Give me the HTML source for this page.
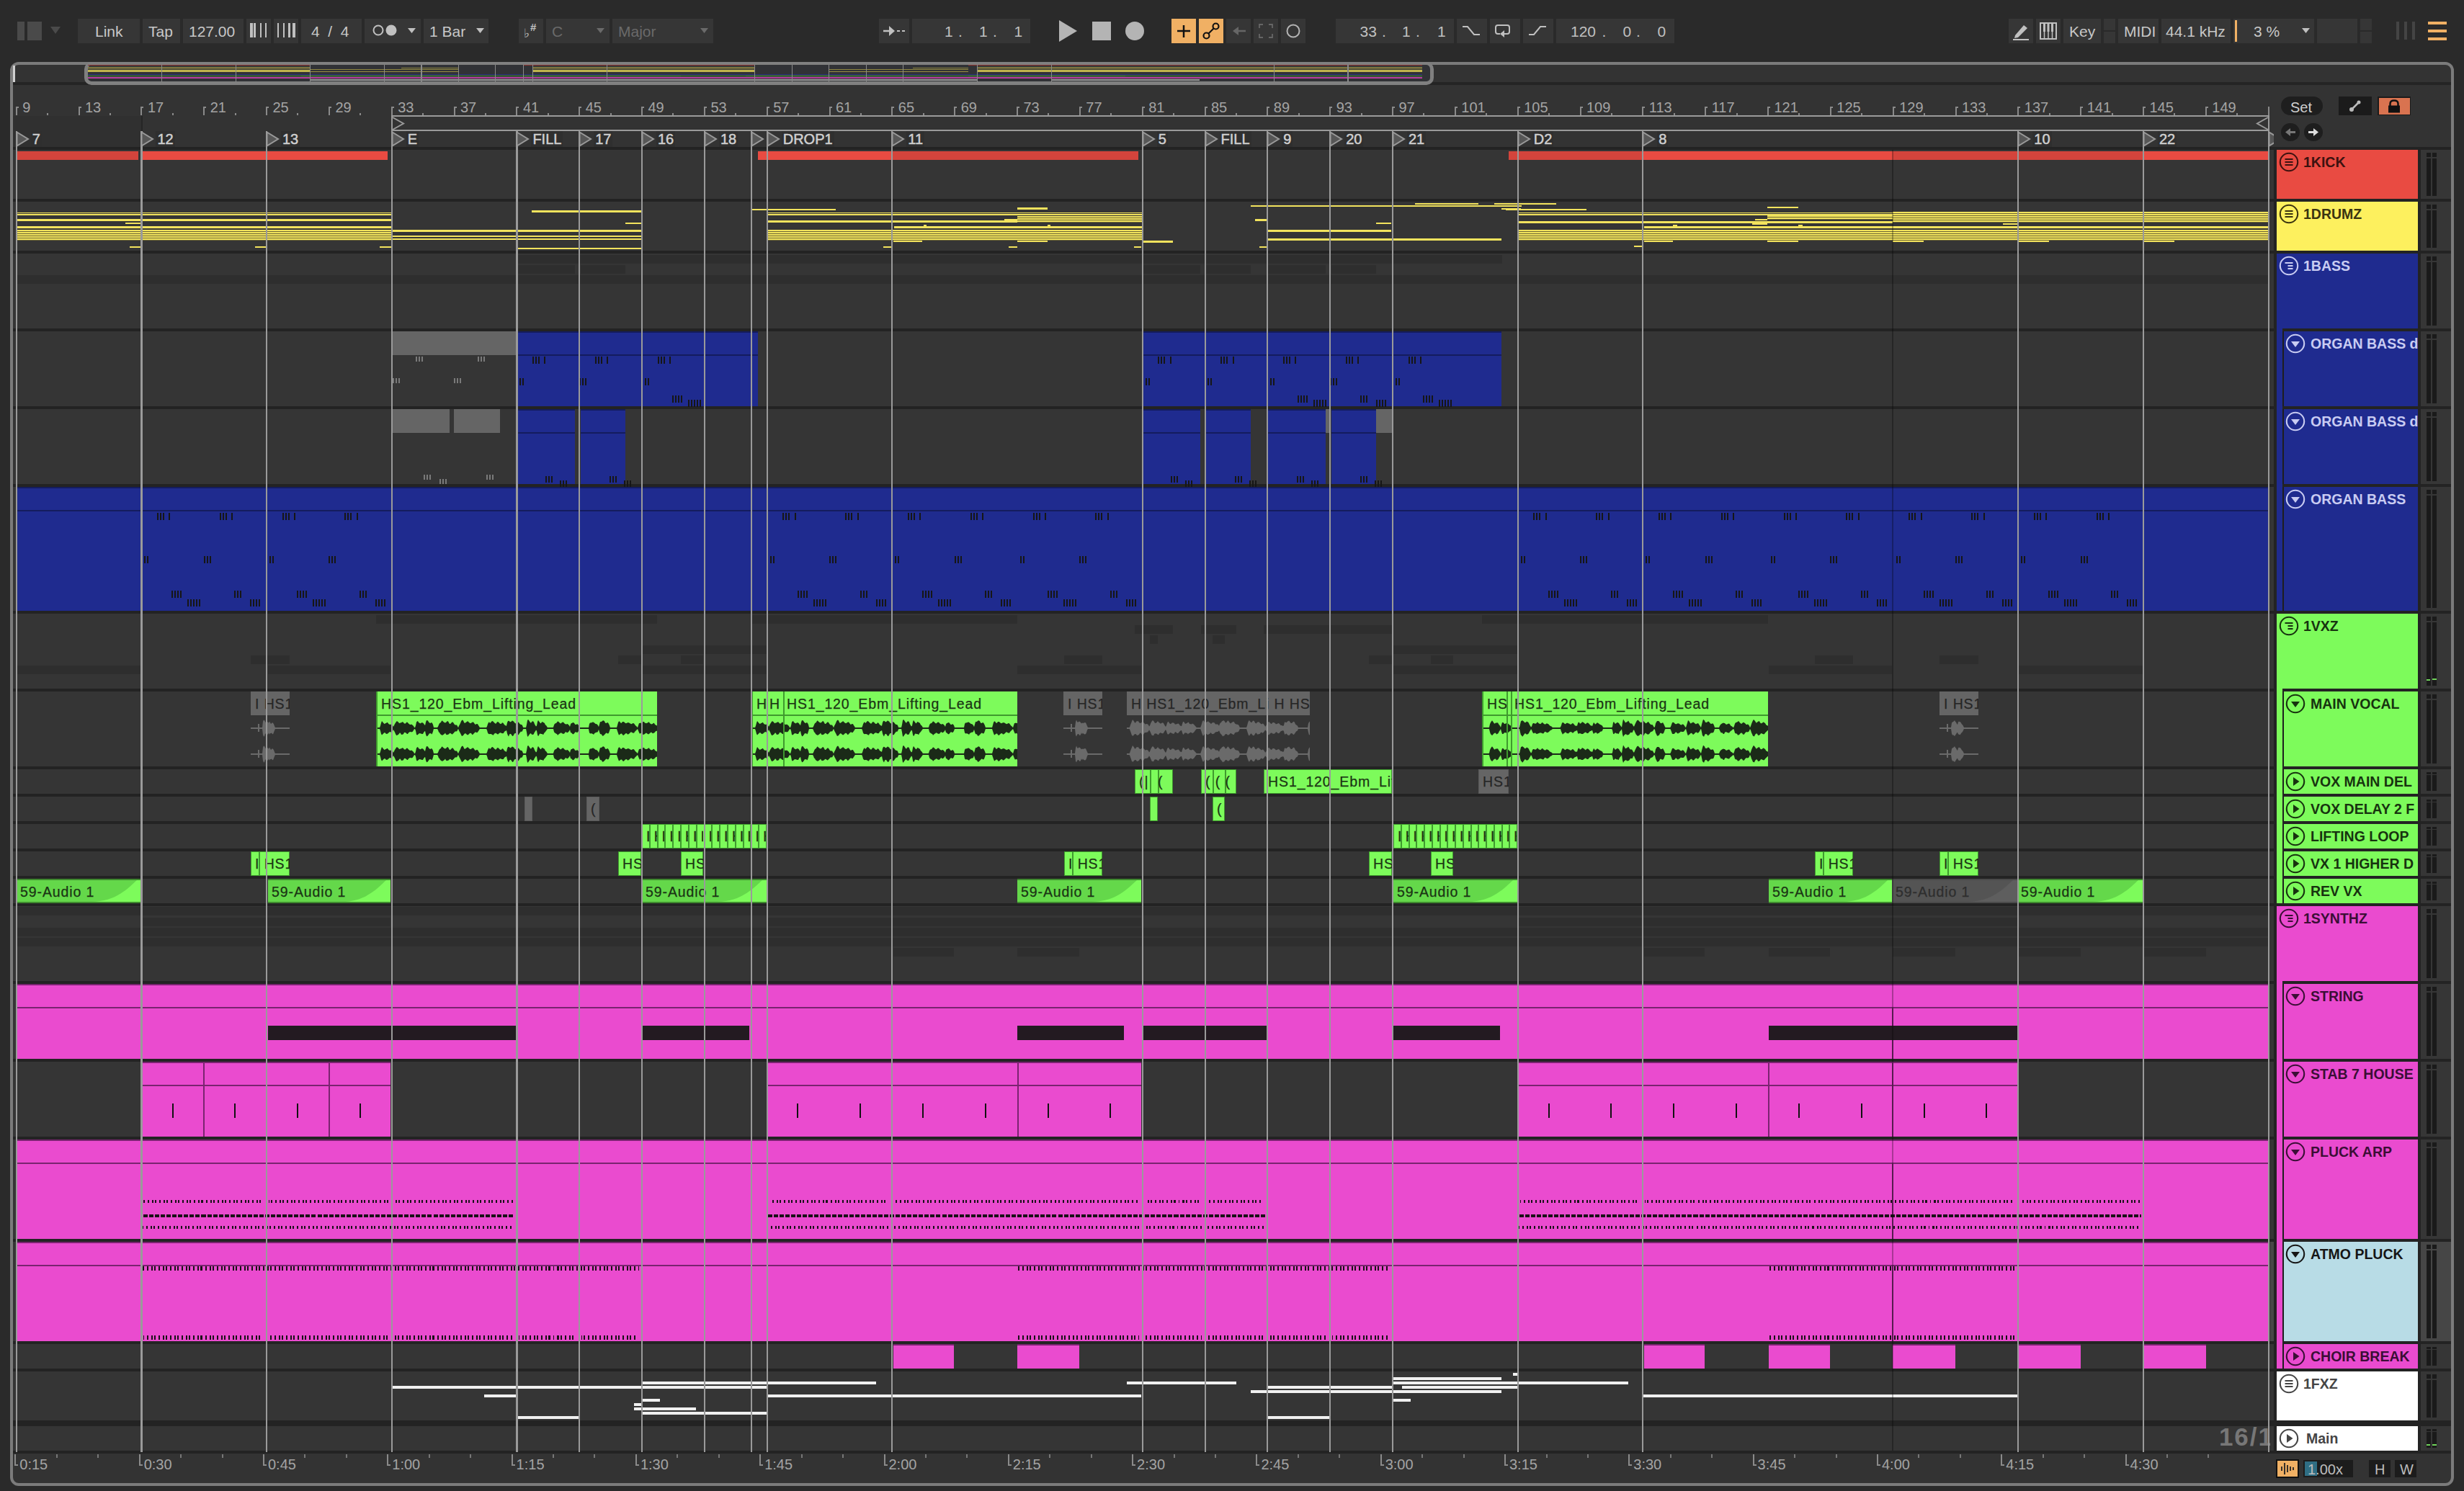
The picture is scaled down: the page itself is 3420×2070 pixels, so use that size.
<!DOCTYPE html><html><head><meta charset="utf-8"><style>
html,body{margin:0;padding:0;}
body{width:3420px;height:2070px;overflow:hidden;position:relative;background:#2a2a2a;font-family:"Liberation Sans", sans-serif;}
div{position:absolute;box-sizing:border-box;}
.t{white-space:nowrap;line-height:1;}
</style></head><body>
<div style="left:24px;top:30px;width:10px;height:26px;background:#4a4a4a;"></div>
<div style="left:38px;top:30px;width:20px;height:26px;background:#4a4a4a;"></div>
<svg style="position:absolute;left:70px;top:37px" width="14" height="11"><polygon points="0,0 14,0 7,10" fill="#4a4a4a"/></svg>
<div style="left:108px;top:26px;width:86px;height:34px;background:#363636;"></div>
<div class="t" style="left:132px;top:33px;font-size:21px;color:#c8c8c8;font-weight:normal;font-family:"Liberation Sans", sans-serif;">Link</div>
<div style="left:198px;top:26px;width:52px;height:34px;background:#363636;"></div>
<div class="t" style="left:206px;top:33px;font-size:21px;color:#c8c8c8;font-weight:normal;font-family:"Liberation Sans", sans-serif;">Tap</div>
<div style="left:254px;top:26px;width:84px;height:34px;background:#363636;"></div>
<div class="t" style="left:262px;top:33px;font-size:21px;color:#c8c8c8;font-weight:normal;font-family:"Liberation Sans", sans-serif;">127.00</div>
<div style="left:342px;top:26px;width:34px;height:34px;background:#363636;"></div>
<div style="left:380px;top:26px;width:34px;height:34px;background:#363636;"></div>
<div style="left:347px;top:32px;width:4px;height:20px;background:#c0c0c0;"></div>
<div style="left:352px;top:32px;width:3px;height:20px;background:#c0c0c0;"></div>
<div style="left:361px;top:32px;width:2px;height:20px;background:#c0c0c0;"></div>
<div style="left:368px;top:32px;width:2px;height:20px;background:#c0c0c0;"></div>
<div style="left:385px;top:32px;width:2px;height:20px;background:#c0c0c0;"></div>
<div style="left:393px;top:32px;width:2px;height:20px;background:#c0c0c0;"></div>
<div style="left:400px;top:32px;width:3px;height:20px;background:#c0c0c0;"></div>
<div style="left:406px;top:32px;width:4px;height:20px;background:#c0c0c0;"></div>
<div style="left:418px;top:26px;width:84px;height:34px;background:#363636;"></div>
<div class="t" style="left:432px;top:33px;font-size:21px;color:#c8c8c8;font-weight:normal;font-family:"Liberation Sans", sans-serif;">4&nbsp;&nbsp;/&nbsp;&nbsp;4</div>
<div style="left:506px;top:26px;width:78px;height:34px;background:#363636;"></div>
<svg style="position:absolute;left:516px;top:33px" width="40" height="18"><circle cx="9" cy="9" r="6.5" fill="none" stroke="#c0c0c0" stroke-width="2"/><circle cx="27" cy="9" r="7.5" fill="#c0c0c0"/></svg>
<svg style="position:absolute;left:566px;top:39px" width="12" height="8"><polygon points="0,0 11,0 5.5,7" fill="#c0c0c0"/></svg>
<div style="left:588px;top:26px;width:90px;height:34px;background:#363636;"></div>
<div class="t" style="left:596px;top:33px;font-size:21px;color:#c8c8c8;font-weight:normal;font-family:"Liberation Sans", sans-serif;">1 Bar</div>
<svg style="position:absolute;left:661px;top:39px" width="12" height="8"><polygon points="0,0 11,0 5.5,7" fill="#c0c0c0"/></svg>
<div style="left:720px;top:26px;width:34px;height:34px;background:#363636;"></div>
<div class="t" style="left:727px;top:38px;font-size:17px;color:#c0c0c0;font-weight:normal;font-family:"Liberation Sans", sans-serif;">♭</div>
<div class="t" style="left:736px;top:30px;font-size:15px;color:#c0c0c0;font-weight:bold;font-family:"Liberation Sans", sans-serif;">#</div>
<div style="left:758px;top:26px;width:88px;height:34px;background:#363636;"></div>
<div class="t" style="left:766px;top:33px;font-size:21px;color:#6a6a6a;font-weight:normal;font-family:"Liberation Sans", sans-serif;">C</div>
<svg style="position:absolute;left:828px;top:39px" width="12" height="8"><polygon points="0,0 11,0 5.5,7" fill="#6a6a6a"/></svg>
<div style="left:850px;top:26px;width:140px;height:34px;background:#363636;"></div>
<div class="t" style="left:858px;top:33px;font-size:21px;color:#6a6a6a;font-weight:normal;font-family:"Liberation Sans", sans-serif;">Major</div>
<svg style="position:absolute;left:972px;top:39px" width="12" height="8"><polygon points="0,0 11,0 5.5,7" fill="#6a6a6a"/></svg>
<div style="left:1220px;top:26px;width:42px;height:34px;background:#363636;"></div>
<svg style="position:absolute;left:1225px;top:33px" width="34" height="20"><line x1="1" y1="10" x2="14" y2="10" stroke="#c0c0c0" stroke-width="2.5"/><polygon points="9,3 17,10 9,17" fill="#c0c0c0"/><line x1="20" y1="10" x2="24" y2="10" stroke="#c0c0c0" stroke-width="2"/><line x1="27" y1="10" x2="31" y2="10" stroke="#c0c0c0" stroke-width="2"/></svg>
<div style="left:1266px;top:26px;width:164px;height:34px;background:#363636;"></div>
<div class="t" style="left:1311px;top:33px;font-size:21px;color:#c0c0c0;font-weight:normal;font-family:"Liberation Sans", sans-serif;">1</div>
<div class="t" style="left:1330px;top:33px;font-size:21px;color:#c0c0c0;font-weight:normal;font-family:"Liberation Sans", sans-serif;">.</div>
<div class="t" style="left:1359px;top:33px;font-size:21px;color:#c0c0c0;font-weight:normal;font-family:"Liberation Sans", sans-serif;">1</div>
<div class="t" style="left:1378px;top:33px;font-size:21px;color:#c0c0c0;font-weight:normal;font-family:"Liberation Sans", sans-serif;">.</div>
<div class="t" style="left:1407.5px;top:33px;font-size:21px;color:#c0c0c0;font-weight:normal;font-family:"Liberation Sans", sans-serif;">1</div>
<svg style="position:absolute;left:1469px;top:28px" width="28" height="31"><polygon points="1,0 26,15 1,30" fill="#b4b4b4"/></svg>
<div style="left:1516px;top:30px;width:26px;height:26px;background:#b4b4b4;"></div>
<svg style="position:absolute;left:1561px;top:30px" width="28" height="28"><circle cx="14" cy="13" r="13" fill="#b4b4b4"/></svg>
<div style="left:1626px;top:26px;width:34px;height:34px;background:#f0b064;"></div>
<div style="left:1664px;top:26px;width:34px;height:34px;background:#f0b064;"></div>
<svg style="position:absolute;left:1626px;top:26px" width="34" height="34"><line x1="17" y1="9" x2="17" y2="26" stroke="#111" stroke-width="2.5"/><line x1="8" y1="17" x2="26" y2="17" stroke="#111" stroke-width="2.5"/></svg>
<svg style="position:absolute;left:1664px;top:26px" width="34" height="34"><circle cx="10.5" cy="23.5" r="4" fill="none" stroke="#111" stroke-width="2.2"/><circle cx="23.5" cy="10.5" r="4" fill="none" stroke="#111" stroke-width="2.2"/><line x1="13.5" y1="20.5" x2="20.5" y2="13.5" stroke="#111" stroke-width="2.2"/></svg>
<div style="left:1702px;top:26px;width:34px;height:34px;background:#363636;"></div>
<div style="left:1740px;top:26px;width:34px;height:34px;background:#363636;"></div>
<div style="left:1778px;top:26px;width:34px;height:34px;background:#363636;"></div>
<svg style="position:absolute;left:1702px;top:26px" width="34" height="34"><polygon points="9,17 17,11 17,23" fill="#666"/><line x1="14" y1="17" x2="27" y2="17" stroke="#666" stroke-width="2.5"/></svg>
<svg style="position:absolute;left:1740px;top:26px" width="34" height="34" fill="none" stroke="#666" stroke-width="1.8"><path d="M8,13 V8 H13 M21,8 H26 V13 M26,21 V26 H21 M13,26 H8 V21"/></svg>
<svg style="position:absolute;left:1778px;top:26px" width="34" height="34"><circle cx="17" cy="17" r="8.5" fill="none" stroke="#b4b4b4" stroke-width="2"/></svg>
<div style="left:1854px;top:26px;width:164px;height:34px;background:#363636;"></div>
<div class="t" style="left:1887.5px;top:33px;font-size:21px;color:#c0c0c0;font-weight:normal;font-family:"Liberation Sans", sans-serif;">33</div>
<div class="t" style="left:1918px;top:33px;font-size:21px;color:#c0c0c0;font-weight:normal;font-family:"Liberation Sans", sans-serif;">.</div>
<div class="t" style="left:1946px;top:33px;font-size:21px;color:#c0c0c0;font-weight:normal;font-family:"Liberation Sans", sans-serif;">1</div>
<div class="t" style="left:1965px;top:33px;font-size:21px;color:#c0c0c0;font-weight:normal;font-family:"Liberation Sans", sans-serif;">.</div>
<div class="t" style="left:1995px;top:33px;font-size:21px;color:#c0c0c0;font-weight:normal;font-family:"Liberation Sans", sans-serif;">1</div>
<div style="left:2022px;top:26px;width:42px;height:34px;background:#363636;"></div>
<div style="left:2068px;top:26px;width:42px;height:34px;background:#363636;"></div>
<div style="left:2114px;top:26px;width:42px;height:34px;background:#363636;"></div>
<svg style="position:absolute;left:2022px;top:26px" width="42" height="34" fill="none" stroke="#c0c0c0" stroke-width="2"><path d="M8,11 H15 L24,22 H32"/></svg>
<svg style="position:absolute;left:2068px;top:26px" width="42" height="34"><path d="M14,21 H11 Q8,21 8,18 V12 Q8,9 11,9 H24 Q27,9 27,12 V18 Q27,21 24,21 H18" fill="none" stroke="#c0c0c0" stroke-width="2"/><polygon points="20,16 20,26 14,21" fill="#c0c0c0"/></svg>
<svg style="position:absolute;left:2114px;top:26px" width="42" height="34" fill="none" stroke="#c0c0c0" stroke-width="2"><path d="M8,22 H15 L24,11 H32"/></svg>
<div style="left:2160px;top:26px;width:164px;height:34px;background:#363636;"></div>
<div class="t" style="left:2180px;top:33px;font-size:21px;color:#c0c0c0;font-weight:normal;font-family:"Liberation Sans", sans-serif;">120</div>
<div class="t" style="left:2223.5px;top:33px;font-size:21px;color:#c0c0c0;font-weight:normal;font-family:"Liberation Sans", sans-serif;">.</div>
<div class="t" style="left:2252.5px;top:33px;font-size:21px;color:#c0c0c0;font-weight:normal;font-family:"Liberation Sans", sans-serif;">0</div>
<div class="t" style="left:2271px;top:33px;font-size:21px;color:#c0c0c0;font-weight:normal;font-family:"Liberation Sans", sans-serif;">.</div>
<div class="t" style="left:2300.5px;top:33px;font-size:21px;color:#c0c0c0;font-weight:normal;font-family:"Liberation Sans", sans-serif;">0</div>
<div style="left:2788px;top:26px;width:34px;height:34px;background:#363636;"></div>
<div style="left:2826px;top:26px;width:34px;height:34px;background:#363636;"></div>
<div style="left:2864px;top:26px;width:52px;height:34px;background:#363636;"></div>
<svg style="position:absolute;left:2788px;top:26px" width="34" height="34"><polygon points="9,23 21,9 26,13 13,26 8,27" fill="#c0c0c0"/><line x1="6" y1="29" x2="28" y2="29" stroke="#c0c0c0" stroke-width="2"/></svg>
<svg style="position:absolute;left:2826px;top:26px" width="34" height="34"><rect x="6" y="6" width="22" height="22" fill="none" stroke="#c0c0c0" stroke-width="2"/><rect x="10" y="6" width="3" height="12" fill="#c0c0c0"/><rect x="15.5" y="6" width="3" height="12" fill="#c0c0c0"/><rect x="21" y="6" width="3" height="12" fill="#c0c0c0"/><line x1="17" y1="18" x2="17" y2="28" stroke="#c0c0c0" stroke-width="1.5"/><line x1="11.5" y1="18" x2="11.5" y2="28" stroke="#c0c0c0" stroke-width="1.5"/><line x1="22.5" y1="18" x2="22.5" y2="28" stroke="#c0c0c0" stroke-width="1.5"/></svg>
<div class="t" style="left:2872px;top:33px;font-size:21px;color:#c8c8c8;font-weight:normal;font-family:"Liberation Sans", sans-serif;">Key</div>
<div style="left:2920px;top:26px;width:16px;height:16px;background:#363636;"></div>
<div style="left:2920px;top:44px;width:16px;height:16px;background:#363636;"></div>
<div style="left:2940px;top:26px;width:56px;height:34px;background:#363636;"></div>
<div class="t" style="left:2948px;top:33px;font-size:21px;color:#c8c8c8;font-weight:normal;font-family:"Liberation Sans", sans-serif;">MIDI</div>
<div style="left:3000px;top:26px;width:96px;height:34px;background:#363636;"></div>
<div class="t" style="left:3006px;top:33px;font-size:21px;color:#c8c8c8;font-weight:normal;font-family:"Liberation Sans", sans-serif;">44.1 kHz</div>
<div style="left:3100px;top:26px;width:112px;height:34px;background:#363636;"></div>
<div style="left:3102px;top:28px;width:3px;height:30px;background:#f0b064;"></div>
<div class="t" style="left:3128px;top:33px;font-size:21px;color:#c8c8c8;font-weight:normal;font-family:"Liberation Sans", sans-serif;">3 %</div>
<svg style="position:absolute;left:3195px;top:39px" width="12" height="8"><polygon points="0,0 11,0 5.5,7" fill="#c0c0c0"/></svg>
<div style="left:3216px;top:26px;width:56px;height:34px;background:#363636;"></div>
<div style="left:3276px;top:26px;width:16px;height:16px;background:#363636;"></div>
<div style="left:3276px;top:44px;width:16px;height:16px;background:#363636;"></div>
<div style="left:3326px;top:30px;width:4px;height:25px;background:#444;"></div>
<div style="left:3337px;top:30px;width:4px;height:25px;background:#444;"></div>
<div style="left:3348px;top:30px;width:4px;height:25px;background:#444;"></div>
<div style="left:3370px;top:30px;width:26px;height:4px;background:#f0b064;"></div>
<div style="left:3370px;top:41px;width:26px;height:4px;background:#f0b064;"></div>
<div style="left:3370px;top:52px;width:26px;height:4px;background:#f0b064;"></div>
<div style="left:14px;top:86px;width:3392px;height:1977px;border:4px solid #7b7b7b;border-radius:12px;background:#333;"></div>
<div style="left:18px;top:114px;width:3384px;height:4px;background:#242424;"></div>
<div style="left:18px;top:91px;width:3px;height:23px;background:#cfcfcf;"></div>
<div style="left:117px;top:86px;width:1873px;height:32px;border:5px solid #808080;border-top-width:4px;border-radius:10px;background:#313236;overflow:hidden;"></div>
<div style="left:122px;top:90px;width:308.6px;height:1px;background:#8e3430;"></div>
<div style="left:726.4px;top:90px;width:321.5px;height:1px;background:#8e3430;"></div>
<div style="left:1343.7px;top:90px;width:630.1px;height:1px;background:#8e3430;"></div>
<div style="left:122px;top:93px;width:308.6px;height:1px;background:#a89c44;"></div>
<div style="left:122px;top:95px;width:308.6px;height:1px;background:#9a9040;"></div>
<div style="left:122px;top:97px;width:308.6px;height:3px;background:#c0b44c;"></div>
<div style="left:739.3px;top:93px;width:308.6px;height:1px;background:#a89c44;"></div>
<div style="left:739.3px;top:95px;width:308.6px;height:1px;background:#9a9040;"></div>
<div style="left:739.3px;top:97px;width:308.6px;height:3px;background:#c0b44c;"></div>
<div style="left:1356.6px;top:93px;width:617.3px;height:1px;background:#a89c44;"></div>
<div style="left:1356.6px;top:95px;width:617.3px;height:1px;background:#9a9040;"></div>
<div style="left:1356.6px;top:97px;width:617.3px;height:3px;background:#c0b44c;"></div>
<div style="left:430.6px;top:96px;width:205.8px;height:1px;background:#8f8740;"></div>
<div style="left:430.6px;top:98.5px;width:205.8px;height:1px;background:#9a9040;"></div>
<div style="left:1150.8px;top:96px;width:192.9px;height:1px;background:#8f8740;"></div>
<div style="left:1150.8px;top:98.5px;width:192.9px;height:1px;background:#9a9040;"></div>
<div style="left:556.7px;top:94px;width:79.7px;height:1px;background:#8f8740;"></div>
<div style="left:1266.5px;top:93.5px;width:77.2px;height:1px;background:#8f8740;"></div>
<div style="left:122px;top:102.5px;width:1851.8px;height:1px;background:#2b3680;"></div>
<div style="left:122px;top:105px;width:308.6px;height:1px;background:#3a8a34;"></div>
<div style="left:430.6px;top:105px;width:295.8px;height:1px;background:#3a8a34;"></div>
<div style="left:726.4px;top:105px;width:321.5px;height:1px;background:#3a8a34;"></div>
<div style="left:1047.9px;top:105px;width:308.6px;height:1px;background:#3a8a34;"></div>
<div style="left:1356.6px;top:105px;width:617.3px;height:1px;background:#3a8a34;"></div>
<div style="left:417.8px;top:104.5px;width:218.6px;height:1.5px;background:#43a03a;"></div>
<div style="left:726.4px;top:104.5px;width:218.6px;height:1.5px;background:#43a03a;"></div>
<div style="left:1035.1px;top:104.5px;width:218.6px;height:1.5px;background:#43a03a;"></div>
<div style="left:1343.7px;top:104.5px;width:218.6px;height:1.5px;background:#43a03a;"></div>
<div style="left:122px;top:107px;width:1851.8px;height:1.5px;background:#b8409f;"></div>
<div style="left:430.6px;top:110px;width:308.6px;height:1.5px;background:#9a9a9a;"></div>
<div style="left:739.3px;top:110px;width:308.6px;height:1.5px;background:#9a9a9a;"></div>
<div style="left:1047.9px;top:110px;width:102.9px;height:1.5px;background:#9a9a9a;"></div>
<div style="left:1150.8px;top:110px;width:205.8px;height:1.5px;background:#9a9a9a;"></div>
<div style="left:1459.4px;top:110px;width:205.8px;height:1.5px;background:#9a9a9a;"></div>
<div style="left:224.3px;top:90px;width:1.2px;height:24px;background:#8a8a8a;"></div>
<div style="left:327.2px;top:90px;width:1.2px;height:24px;background:#8a8a8a;"></div>
<div style="left:430px;top:90px;width:1.2px;height:24px;background:#8a8a8a;"></div>
<div style="left:532.9px;top:90px;width:1.2px;height:24px;background:#8a8a8a;"></div>
<div style="left:584.4px;top:90px;width:1.2px;height:24px;background:#8a8a8a;"></div>
<div style="left:635.8px;top:90px;width:1.2px;height:24px;background:#8a8a8a;"></div>
<div style="left:687.2px;top:90px;width:1.2px;height:24px;background:#8a8a8a;"></div>
<div style="left:725.8px;top:90px;width:1.2px;height:24px;background:#8a8a8a;"></div>
<div style="left:738.7px;top:90px;width:1.2px;height:24px;background:#8a8a8a;"></div>
<div style="left:841.6px;top:90px;width:1.2px;height:24px;background:#8a8a8a;"></div>
<div style="left:1047.3px;top:90px;width:1.2px;height:24px;background:#8a8a8a;"></div>
<div style="left:1098.8px;top:90px;width:1.2px;height:24px;background:#8a8a8a;"></div>
<div style="left:1150.2px;top:90px;width:1.2px;height:24px;background:#8a8a8a;"></div>
<div style="left:1201.6px;top:90px;width:1.2px;height:24px;background:#8a8a8a;"></div>
<div style="left:1253.1px;top:90px;width:1.2px;height:24px;background:#8a8a8a;"></div>
<div style="left:1356px;top:90px;width:1.2px;height:24px;background:#8a8a8a;"></div>
<div style="left:1458.8px;top:90px;width:1.2px;height:24px;background:#8a8a8a;"></div>
<div style="left:1767.5px;top:90px;width:1.2px;height:24px;background:#8a8a8a;"></div>
<div style="left:1870.4px;top:90px;width:1.2px;height:24px;background:#8a8a8a;"></div>
<div style="left:18px;top:204px;width:3384px;height:1814px;background:#232323;"></div>
<div style="left:18px;top:208px;width:3138px;height:68px;background:#353535;"></div>
<div style="left:18px;top:280px;width:3138px;height:68px;background:#353535;"></div>
<div style="left:18px;top:352px;width:3138px;height:104px;background:#353535;"></div>
<div style="left:18px;top:460px;width:3138px;height:104px;background:#353535;"></div>
<div style="left:18px;top:568px;width:3138px;height:104px;background:#353535;"></div>
<div style="left:18px;top:676px;width:3138px;height:172px;background:#353535;"></div>
<div style="left:18px;top:852px;width:3138px;height:104px;background:#353535;"></div>
<div style="left:18px;top:960px;width:3138px;height:104px;background:#353535;"></div>
<div style="left:18px;top:1068px;width:3138px;height:34px;background:#353535;"></div>
<div style="left:18px;top:1106px;width:3138px;height:34px;background:#353535;"></div>
<div style="left:18px;top:1144px;width:3138px;height:34px;background:#353535;"></div>
<div style="left:18px;top:1182px;width:3138px;height:34px;background:#353535;"></div>
<div style="left:18px;top:1220px;width:3138px;height:34px;background:#353535;"></div>
<div style="left:18px;top:1258px;width:3138px;height:104px;background:#353535;"></div>
<div style="left:18px;top:1366px;width:3138px;height:104px;background:#353535;"></div>
<div style="left:18px;top:1474px;width:3138px;height:104px;background:#353535;"></div>
<div style="left:18px;top:1582px;width:3138px;height:138px;background:#353535;"></div>
<div style="left:18px;top:1724px;width:3138px;height:138px;background:#353535;"></div>
<div style="left:18px;top:1866px;width:3138px;height:34px;background:#353535;"></div>
<div style="left:18px;top:1904px;width:3138px;height:68px;background:#353535;"></div>
<div style="left:18px;top:1980px;width:3138px;height:34px;background:#353535;"></div>
<div style="left:21.7px;top:148px;width:2px;height:12px;background:#8a8a8a;"></div>
<div style="left:21.7px;top:148px;width:4px;height:2px;background:#8a8a8a;"></div>
<div class="t" style="left:31.2px;top:138.5px;font-size:20px;color:#a3a3a3;font-weight:normal;font-family:"Liberation Sans", sans-serif;letter-spacing:0.9px;-webkit-text-stroke:0.3px #a3a3a3;">9</div>
<div style="left:65.1px;top:157px;width:2px;height:3px;background:#8a8a8a;"></div>
<div style="left:108.5px;top:148px;width:2px;height:12px;background:#8a8a8a;"></div>
<div style="left:108.5px;top:148px;width:4px;height:2px;background:#8a8a8a;"></div>
<div class="t" style="left:118px;top:138.5px;font-size:20px;color:#a3a3a3;font-weight:normal;font-family:"Liberation Sans", sans-serif;letter-spacing:0.9px;-webkit-text-stroke:0.3px #a3a3a3;">13</div>
<div style="left:151.9px;top:157px;width:2px;height:3px;background:#8a8a8a;"></div>
<div style="left:195.4px;top:148px;width:2px;height:12px;background:#8a8a8a;"></div>
<div style="left:195.4px;top:148px;width:4px;height:2px;background:#8a8a8a;"></div>
<div class="t" style="left:204.9px;top:138.5px;font-size:20px;color:#a3a3a3;font-weight:normal;font-family:"Liberation Sans", sans-serif;letter-spacing:0.9px;-webkit-text-stroke:0.3px #a3a3a3;">17</div>
<div style="left:238.8px;top:157px;width:2px;height:3px;background:#8a8a8a;"></div>
<div style="left:282.2px;top:148px;width:2px;height:12px;background:#8a8a8a;"></div>
<div style="left:282.2px;top:148px;width:4px;height:2px;background:#8a8a8a;"></div>
<div class="t" style="left:291.7px;top:138.5px;font-size:20px;color:#a3a3a3;font-weight:normal;font-family:"Liberation Sans", sans-serif;letter-spacing:0.9px;-webkit-text-stroke:0.3px #a3a3a3;">21</div>
<div style="left:325.6px;top:157px;width:2px;height:3px;background:#8a8a8a;"></div>
<div style="left:369px;top:148px;width:2px;height:12px;background:#8a8a8a;"></div>
<div style="left:369px;top:148px;width:4px;height:2px;background:#8a8a8a;"></div>
<div class="t" style="left:378.5px;top:138.5px;font-size:20px;color:#a3a3a3;font-weight:normal;font-family:"Liberation Sans", sans-serif;letter-spacing:0.9px;-webkit-text-stroke:0.3px #a3a3a3;">25</div>
<div style="left:412.4px;top:157px;width:2px;height:3px;background:#8a8a8a;"></div>
<div style="left:455.9px;top:148px;width:2px;height:12px;background:#8a8a8a;"></div>
<div style="left:455.9px;top:148px;width:4px;height:2px;background:#8a8a8a;"></div>
<div class="t" style="left:465.4px;top:138.5px;font-size:20px;color:#a3a3a3;font-weight:normal;font-family:"Liberation Sans", sans-serif;letter-spacing:0.9px;-webkit-text-stroke:0.3px #a3a3a3;">29</div>
<div style="left:499.3px;top:157px;width:2px;height:3px;background:#8a8a8a;"></div>
<div style="left:542.7px;top:148px;width:2px;height:12px;background:#8a8a8a;"></div>
<div style="left:542.7px;top:148px;width:4px;height:2px;background:#8a8a8a;"></div>
<div class="t" style="left:552.2px;top:138.5px;font-size:20px;color:#a3a3a3;font-weight:normal;font-family:"Liberation Sans", sans-serif;letter-spacing:0.9px;-webkit-text-stroke:0.3px #a3a3a3;">33</div>
<div style="left:586.1px;top:157px;width:2px;height:3px;background:#8a8a8a;"></div>
<div style="left:629.5px;top:148px;width:2px;height:12px;background:#8a8a8a;"></div>
<div style="left:629.5px;top:148px;width:4px;height:2px;background:#8a8a8a;"></div>
<div class="t" style="left:639px;top:138.5px;font-size:20px;color:#a3a3a3;font-weight:normal;font-family:"Liberation Sans", sans-serif;letter-spacing:0.9px;-webkit-text-stroke:0.3px #a3a3a3;">37</div>
<div style="left:672.9px;top:157px;width:2px;height:3px;background:#8a8a8a;"></div>
<div style="left:716.4px;top:148px;width:2px;height:12px;background:#8a8a8a;"></div>
<div style="left:716.4px;top:148px;width:4px;height:2px;background:#8a8a8a;"></div>
<div class="t" style="left:725.9px;top:138.5px;font-size:20px;color:#a3a3a3;font-weight:normal;font-family:"Liberation Sans", sans-serif;letter-spacing:0.9px;-webkit-text-stroke:0.3px #a3a3a3;">41</div>
<div style="left:759.8px;top:157px;width:2px;height:3px;background:#8a8a8a;"></div>
<div style="left:803.2px;top:148px;width:2px;height:12px;background:#8a8a8a;"></div>
<div style="left:803.2px;top:148px;width:4px;height:2px;background:#8a8a8a;"></div>
<div class="t" style="left:812.7px;top:138.5px;font-size:20px;color:#a3a3a3;font-weight:normal;font-family:"Liberation Sans", sans-serif;letter-spacing:0.9px;-webkit-text-stroke:0.3px #a3a3a3;">45</div>
<div style="left:846.6px;top:157px;width:2px;height:3px;background:#8a8a8a;"></div>
<div style="left:890px;top:148px;width:2px;height:12px;background:#8a8a8a;"></div>
<div style="left:890px;top:148px;width:4px;height:2px;background:#8a8a8a;"></div>
<div class="t" style="left:899.5px;top:138.5px;font-size:20px;color:#a3a3a3;font-weight:normal;font-family:"Liberation Sans", sans-serif;letter-spacing:0.9px;-webkit-text-stroke:0.3px #a3a3a3;">49</div>
<div style="left:933.4px;top:157px;width:2px;height:3px;background:#8a8a8a;"></div>
<div style="left:976.9px;top:148px;width:2px;height:12px;background:#8a8a8a;"></div>
<div style="left:976.9px;top:148px;width:4px;height:2px;background:#8a8a8a;"></div>
<div class="t" style="left:986.4px;top:138.5px;font-size:20px;color:#a3a3a3;font-weight:normal;font-family:"Liberation Sans", sans-serif;letter-spacing:0.9px;-webkit-text-stroke:0.3px #a3a3a3;">53</div>
<div style="left:1020.3px;top:157px;width:2px;height:3px;background:#8a8a8a;"></div>
<div style="left:1063.7px;top:148px;width:2px;height:12px;background:#8a8a8a;"></div>
<div style="left:1063.7px;top:148px;width:4px;height:2px;background:#8a8a8a;"></div>
<div class="t" style="left:1073.2px;top:138.5px;font-size:20px;color:#a3a3a3;font-weight:normal;font-family:"Liberation Sans", sans-serif;letter-spacing:0.9px;-webkit-text-stroke:0.3px #a3a3a3;">57</div>
<div style="left:1107.1px;top:157px;width:2px;height:3px;background:#8a8a8a;"></div>
<div style="left:1150.5px;top:148px;width:2px;height:12px;background:#8a8a8a;"></div>
<div style="left:1150.5px;top:148px;width:4px;height:2px;background:#8a8a8a;"></div>
<div class="t" style="left:1160px;top:138.5px;font-size:20px;color:#a3a3a3;font-weight:normal;font-family:"Liberation Sans", sans-serif;letter-spacing:0.9px;-webkit-text-stroke:0.3px #a3a3a3;">61</div>
<div style="left:1193.9px;top:157px;width:2px;height:3px;background:#8a8a8a;"></div>
<div style="left:1237.3px;top:148px;width:2px;height:12px;background:#8a8a8a;"></div>
<div style="left:1237.3px;top:148px;width:4px;height:2px;background:#8a8a8a;"></div>
<div class="t" style="left:1246.8px;top:138.5px;font-size:20px;color:#a3a3a3;font-weight:normal;font-family:"Liberation Sans", sans-serif;letter-spacing:0.9px;-webkit-text-stroke:0.3px #a3a3a3;">65</div>
<div style="left:1280.8px;top:157px;width:2px;height:3px;background:#8a8a8a;"></div>
<div style="left:1324.2px;top:148px;width:2px;height:12px;background:#8a8a8a;"></div>
<div style="left:1324.2px;top:148px;width:4px;height:2px;background:#8a8a8a;"></div>
<div class="t" style="left:1333.7px;top:138.5px;font-size:20px;color:#a3a3a3;font-weight:normal;font-family:"Liberation Sans", sans-serif;letter-spacing:0.9px;-webkit-text-stroke:0.3px #a3a3a3;">69</div>
<div style="left:1367.6px;top:157px;width:2px;height:3px;background:#8a8a8a;"></div>
<div style="left:1411px;top:148px;width:2px;height:12px;background:#8a8a8a;"></div>
<div style="left:1411px;top:148px;width:4px;height:2px;background:#8a8a8a;"></div>
<div class="t" style="left:1420.5px;top:138.5px;font-size:20px;color:#a3a3a3;font-weight:normal;font-family:"Liberation Sans", sans-serif;letter-spacing:0.9px;-webkit-text-stroke:0.3px #a3a3a3;">73</div>
<div style="left:1454.4px;top:157px;width:2px;height:3px;background:#8a8a8a;"></div>
<div style="left:1497.8px;top:148px;width:2px;height:12px;background:#8a8a8a;"></div>
<div style="left:1497.8px;top:148px;width:4px;height:2px;background:#8a8a8a;"></div>
<div class="t" style="left:1507.3px;top:138.5px;font-size:20px;color:#a3a3a3;font-weight:normal;font-family:"Liberation Sans", sans-serif;letter-spacing:0.9px;-webkit-text-stroke:0.3px #a3a3a3;">77</div>
<div style="left:1541.3px;top:157px;width:2px;height:3px;background:#8a8a8a;"></div>
<div style="left:1584.7px;top:148px;width:2px;height:12px;background:#8a8a8a;"></div>
<div style="left:1584.7px;top:148px;width:4px;height:2px;background:#8a8a8a;"></div>
<div class="t" style="left:1594.2px;top:138.5px;font-size:20px;color:#a3a3a3;font-weight:normal;font-family:"Liberation Sans", sans-serif;letter-spacing:0.9px;-webkit-text-stroke:0.3px #a3a3a3;">81</div>
<div style="left:1628.1px;top:157px;width:2px;height:3px;background:#8a8a8a;"></div>
<div style="left:1671.5px;top:148px;width:2px;height:12px;background:#8a8a8a;"></div>
<div style="left:1671.5px;top:148px;width:4px;height:2px;background:#8a8a8a;"></div>
<div class="t" style="left:1681px;top:138.5px;font-size:20px;color:#a3a3a3;font-weight:normal;font-family:"Liberation Sans", sans-serif;letter-spacing:0.9px;-webkit-text-stroke:0.3px #a3a3a3;">85</div>
<div style="left:1714.9px;top:157px;width:2px;height:3px;background:#8a8a8a;"></div>
<div style="left:1758.3px;top:148px;width:2px;height:12px;background:#8a8a8a;"></div>
<div style="left:1758.3px;top:148px;width:4px;height:2px;background:#8a8a8a;"></div>
<div class="t" style="left:1767.8px;top:138.5px;font-size:20px;color:#a3a3a3;font-weight:normal;font-family:"Liberation Sans", sans-serif;letter-spacing:0.9px;-webkit-text-stroke:0.3px #a3a3a3;">89</div>
<div style="left:1801.8px;top:157px;width:2px;height:3px;background:#8a8a8a;"></div>
<div style="left:1845.2px;top:148px;width:2px;height:12px;background:#8a8a8a;"></div>
<div style="left:1845.2px;top:148px;width:4px;height:2px;background:#8a8a8a;"></div>
<div class="t" style="left:1854.7px;top:138.5px;font-size:20px;color:#a3a3a3;font-weight:normal;font-family:"Liberation Sans", sans-serif;letter-spacing:0.9px;-webkit-text-stroke:0.3px #a3a3a3;">93</div>
<div style="left:1888.6px;top:157px;width:2px;height:3px;background:#8a8a8a;"></div>
<div style="left:1932px;top:148px;width:2px;height:12px;background:#8a8a8a;"></div>
<div style="left:1932px;top:148px;width:4px;height:2px;background:#8a8a8a;"></div>
<div class="t" style="left:1941.5px;top:138.5px;font-size:20px;color:#a3a3a3;font-weight:normal;font-family:"Liberation Sans", sans-serif;letter-spacing:0.9px;-webkit-text-stroke:0.3px #a3a3a3;">97</div>
<div style="left:1975.4px;top:157px;width:2px;height:3px;background:#8a8a8a;"></div>
<div style="left:2018.8px;top:148px;width:2px;height:12px;background:#8a8a8a;"></div>
<div style="left:2018.8px;top:148px;width:4px;height:2px;background:#8a8a8a;"></div>
<div class="t" style="left:2028.3px;top:138.5px;font-size:20px;color:#a3a3a3;font-weight:normal;font-family:"Liberation Sans", sans-serif;letter-spacing:0.9px;-webkit-text-stroke:0.3px #a3a3a3;">101</div>
<div style="left:2062.3px;top:157px;width:2px;height:3px;background:#8a8a8a;"></div>
<div style="left:2105.7px;top:148px;width:2px;height:12px;background:#8a8a8a;"></div>
<div style="left:2105.7px;top:148px;width:4px;height:2px;background:#8a8a8a;"></div>
<div class="t" style="left:2115.2px;top:138.5px;font-size:20px;color:#a3a3a3;font-weight:normal;font-family:"Liberation Sans", sans-serif;letter-spacing:0.9px;-webkit-text-stroke:0.3px #a3a3a3;">105</div>
<div style="left:2149.1px;top:157px;width:2px;height:3px;background:#8a8a8a;"></div>
<div style="left:2192.5px;top:148px;width:2px;height:12px;background:#8a8a8a;"></div>
<div style="left:2192.5px;top:148px;width:4px;height:2px;background:#8a8a8a;"></div>
<div class="t" style="left:2202px;top:138.5px;font-size:20px;color:#a3a3a3;font-weight:normal;font-family:"Liberation Sans", sans-serif;letter-spacing:0.9px;-webkit-text-stroke:0.3px #a3a3a3;">109</div>
<div style="left:2235.9px;top:157px;width:2px;height:3px;background:#8a8a8a;"></div>
<div style="left:2279.3px;top:148px;width:2px;height:12px;background:#8a8a8a;"></div>
<div style="left:2279.3px;top:148px;width:4px;height:2px;background:#8a8a8a;"></div>
<div class="t" style="left:2288.8px;top:138.5px;font-size:20px;color:#a3a3a3;font-weight:normal;font-family:"Liberation Sans", sans-serif;letter-spacing:0.9px;-webkit-text-stroke:0.3px #a3a3a3;">113</div>
<div style="left:2322.7px;top:157px;width:2px;height:3px;background:#8a8a8a;"></div>
<div style="left:2366.2px;top:148px;width:2px;height:12px;background:#8a8a8a;"></div>
<div style="left:2366.2px;top:148px;width:4px;height:2px;background:#8a8a8a;"></div>
<div class="t" style="left:2375.7px;top:138.5px;font-size:20px;color:#a3a3a3;font-weight:normal;font-family:"Liberation Sans", sans-serif;letter-spacing:0.9px;-webkit-text-stroke:0.3px #a3a3a3;">117</div>
<div style="left:2409.6px;top:157px;width:2px;height:3px;background:#8a8a8a;"></div>
<div style="left:2453px;top:148px;width:2px;height:12px;background:#8a8a8a;"></div>
<div style="left:2453px;top:148px;width:4px;height:2px;background:#8a8a8a;"></div>
<div class="t" style="left:2462.5px;top:138.5px;font-size:20px;color:#a3a3a3;font-weight:normal;font-family:"Liberation Sans", sans-serif;letter-spacing:0.9px;-webkit-text-stroke:0.3px #a3a3a3;">121</div>
<div style="left:2496.4px;top:157px;width:2px;height:3px;background:#8a8a8a;"></div>
<div style="left:2539.8px;top:148px;width:2px;height:12px;background:#8a8a8a;"></div>
<div style="left:2539.8px;top:148px;width:4px;height:2px;background:#8a8a8a;"></div>
<div class="t" style="left:2549.3px;top:138.5px;font-size:20px;color:#a3a3a3;font-weight:normal;font-family:"Liberation Sans", sans-serif;letter-spacing:0.9px;-webkit-text-stroke:0.3px #a3a3a3;">125</div>
<div style="left:2583.2px;top:157px;width:2px;height:3px;background:#8a8a8a;"></div>
<div style="left:2626.7px;top:148px;width:2px;height:12px;background:#8a8a8a;"></div>
<div style="left:2626.7px;top:148px;width:4px;height:2px;background:#8a8a8a;"></div>
<div class="t" style="left:2636.2px;top:138.5px;font-size:20px;color:#a3a3a3;font-weight:normal;font-family:"Liberation Sans", sans-serif;letter-spacing:0.9px;-webkit-text-stroke:0.3px #a3a3a3;">129</div>
<div style="left:2670.1px;top:157px;width:2px;height:3px;background:#8a8a8a;"></div>
<div style="left:2713.5px;top:148px;width:2px;height:12px;background:#8a8a8a;"></div>
<div style="left:2713.5px;top:148px;width:4px;height:2px;background:#8a8a8a;"></div>
<div class="t" style="left:2723px;top:138.5px;font-size:20px;color:#a3a3a3;font-weight:normal;font-family:"Liberation Sans", sans-serif;letter-spacing:0.9px;-webkit-text-stroke:0.3px #a3a3a3;">133</div>
<div style="left:2756.9px;top:157px;width:2px;height:3px;background:#8a8a8a;"></div>
<div style="left:2800.3px;top:148px;width:2px;height:12px;background:#8a8a8a;"></div>
<div style="left:2800.3px;top:148px;width:4px;height:2px;background:#8a8a8a;"></div>
<div class="t" style="left:2809.8px;top:138.5px;font-size:20px;color:#a3a3a3;font-weight:normal;font-family:"Liberation Sans", sans-serif;letter-spacing:0.9px;-webkit-text-stroke:0.3px #a3a3a3;">137</div>
<div style="left:2843.7px;top:157px;width:2px;height:3px;background:#8a8a8a;"></div>
<div style="left:2887.2px;top:148px;width:2px;height:12px;background:#8a8a8a;"></div>
<div style="left:2887.2px;top:148px;width:4px;height:2px;background:#8a8a8a;"></div>
<div class="t" style="left:2896.7px;top:138.5px;font-size:20px;color:#a3a3a3;font-weight:normal;font-family:"Liberation Sans", sans-serif;letter-spacing:0.9px;-webkit-text-stroke:0.3px #a3a3a3;">141</div>
<div style="left:2930.6px;top:157px;width:2px;height:3px;background:#8a8a8a;"></div>
<div style="left:2974px;top:148px;width:2px;height:12px;background:#8a8a8a;"></div>
<div style="left:2974px;top:148px;width:4px;height:2px;background:#8a8a8a;"></div>
<div class="t" style="left:2983.5px;top:138.5px;font-size:20px;color:#a3a3a3;font-weight:normal;font-family:"Liberation Sans", sans-serif;letter-spacing:0.9px;-webkit-text-stroke:0.3px #a3a3a3;">145</div>
<div style="left:3017.4px;top:157px;width:2px;height:3px;background:#8a8a8a;"></div>
<div style="left:3060.8px;top:148px;width:2px;height:12px;background:#8a8a8a;"></div>
<div style="left:3060.8px;top:148px;width:4px;height:2px;background:#8a8a8a;"></div>
<div class="t" style="left:3070.3px;top:138.5px;font-size:20px;color:#a3a3a3;font-weight:normal;font-family:"Liberation Sans", sans-serif;letter-spacing:0.9px;-webkit-text-stroke:0.3px #a3a3a3;">149</div>
<div style="left:3104.2px;top:157px;width:2px;height:3px;background:#8a8a8a;"></div>
<div style="left:3147.7px;top:148px;width:2px;height:14px;background:#8a8a8a;"></div>
<div style="left:18px;top:161px;width:179px;height:43px;background:#303030;"></div>
<div style="left:196px;top:161px;width:2px;height:43px;background:#262626;"></div>
<div style="left:542.7px;top:160px;width:2607px;height:2px;background:#9a9a9a;"></div>
<div style="left:542.7px;top:180px;width:2607px;height:2px;background:#9a9a9a;"></div>
<div style="left:542.7px;top:160px;width:2px;height:22px;background:#9a9a9a;"></div>
<div style="left:3147.7px;top:160px;width:2px;height:22px;background:#9a9a9a;"></div>
<svg style="position:absolute;left:543.7px;top:162px" width="20" height="19"><polyline points="1,1 16,9.5 1,18" fill="none" stroke="#9a9a9a" stroke-width="2"/></svg>
<svg style="position:absolute;left:3128.7px;top:162px" width="20" height="19"><polyline points="19,1 4,9.5 19,18" fill="none" stroke="#9a9a9a" stroke-width="2"/></svg>
<div style="left:23px;top:210px;width:169px;height:12px;background:#d4443c;"></div>
<div style="left:198px;top:210px;width:340px;height:12px;background:#e94b42;"></div>
<div style="left:1052px;top:210px;width:186px;height:12px;background:#e94b42;"></div>
<div style="left:1238px;top:210px;width:342px;height:12px;background:#d4443c;"></div>
<div style="left:2094px;top:210px;width:186px;height:12px;background:#d4443c;"></div>
<div style="left:2280px;top:210px;width:347px;height:12px;background:#e94b42;"></div>
<div style="left:2627px;top:210px;width:348px;height:12px;background:#d4443c;"></div>
<div style="left:2975px;top:210px;width:173px;height:12px;background:#e94b42;"></div>
<div style="left:23px;top:294.5px;width:520px;height:1.5px;background:#f2e35d;"></div>
<div style="left:23px;top:297px;width:520px;height:2px;background:#f2e35d;"></div>
<div style="left:23px;top:304px;width:520px;height:2.5px;background:#f2e35d;"></div>
<div style="left:23px;top:314px;width:520px;height:2.5px;background:#f2e35d;"></div>
<div style="left:23px;top:319px;width:520px;height:15px;background:repeating-linear-gradient(180deg,#f2e35d 0px,#f2e35d 2px,#6e6734 2px,#6e6734 3px);"></div>
<div style="left:738px;top:292px;width:152px;height:2.5px;background:#f2e35d;"></div>
<div style="left:868px;top:309px;width:22px;height:2px;background:#f2e35d;"></div>
<div style="left:543px;top:318.5px;width:347px;height:3px;background:#f2e35d;"></div>
<div style="left:543px;top:327px;width:347px;height:2px;background:#f2e35d;"></div>
<div style="left:543px;top:331px;width:347px;height:2px;background:#f2e35d;"></div>
<div style="left:717px;top:344px;width:173px;height:2px;background:#f2e35d;"></div>
<div style="left:1736px;top:284.5px;width:375px;height:2.5px;background:#f2e35d;"></div>
<div style="left:1964px;top:281.5px;width:88px;height:2.5px;background:#f2e35d;"></div>
<div style="left:2074px;top:281.5px;width:37px;height:2.5px;background:#f2e35d;"></div>
<div style="left:2084px;top:289px;width:27px;height:2px;background:#f2e35d;"></div>
<div style="left:1742px;top:304px;width:16px;height:2.5px;background:#f2e35d;"></div>
<div style="left:1910px;top:309px;width:21px;height:2px;background:#f2e35d;"></div>
<div style="left:1759px;top:319px;width:172px;height:2.5px;background:#f2e35d;"></div>
<div style="left:1759px;top:331px;width:325px;height:2.5px;background:#f2e35d;"></div>
<div style="left:1586px;top:334px;width:42px;height:2.5px;background:#f2e35d;"></div>
<div style="left:1574px;top:341.5px;width:10px;height:2px;background:#f2e35d;"></div>
<div style="left:1748px;top:341.5px;width:10px;height:2px;background:#f2e35d;"></div>
<div style="left:180px;top:341.5px;width:16px;height:2px;background:#f2e35d;"></div>
<div style="left:354px;top:341.5px;width:16px;height:2px;background:#f2e35d;"></div>
<div style="left:527px;top:341.5px;width:16px;height:2px;background:#f2e35d;"></div>
<div style="left:174px;top:309px;width:22px;height:2px;background:#f2e35d;"></div>
<div style="left:522px;top:304px;width:21px;height:2.5px;background:#f2e35d;"></div>
<div style="left:1412px;top:288px;width:42px;height:2.5px;background:#f2e35d;"></div>
<div style="left:1043px;top:289.5px;width:117px;height:2.5px;background:#f2e35d;"></div>
<div style="left:1064.7px;top:294.5px;width:521px;height:1.5px;background:#f2e35d;"></div>
<div style="left:1064.7px;top:297px;width:521px;height:2px;background:#f2e35d;"></div>
<div style="left:1064.7px;top:306px;width:521px;height:2.5px;background:#f2e35d;"></div>
<div style="left:1240.7px;top:314px;width:345px;height:2.5px;background:#f2e35d;"></div>
<div style="left:1064.7px;top:319px;width:521px;height:15px;background:repeating-linear-gradient(180deg,#f2e35d 0px,#f2e35d 2px,#6e6734 2px,#6e6734 3px);"></div>
<div style="left:1412px;top:300px;width:173.7px;height:9px;background:repeating-linear-gradient(180deg,#f2e35d 0px,#f2e35d 2px,#6e6734 2px,#6e6734 3px);"></div>
<div style="left:1282px;top:312px;width:4px;height:2.2px;background:#f2e35d;"></div>
<div style="left:1454px;top:312px;width:4px;height:2.2px;background:#f2e35d;"></div>
<div style="left:1240px;top:334px;width:40px;height:2.2px;background:#f2e35d;"></div>
<div style="left:1412px;top:334px;width:42px;height:2.2px;background:#f2e35d;"></div>
<div style="left:1226px;top:342px;width:12px;height:2.2px;background:#f2e35d;"></div>
<div style="left:1400px;top:342px;width:12px;height:2.2px;background:#f2e35d;"></div>
<div style="left:1394px;top:304px;width:18px;height:2.2px;background:#f2e35d;"></div>
<div style="left:2107px;top:294.5px;width:1041px;height:1.5px;background:#f2e35d;"></div>
<div style="left:2107px;top:297px;width:1041px;height:2px;background:#f2e35d;"></div>
<div style="left:2107px;top:307px;width:520px;height:2.5px;background:#f2e35d;"></div>
<div style="left:2282px;top:314px;width:866px;height:2.5px;background:#f2e35d;"></div>
<div style="left:2107px;top:319px;width:1041px;height:15px;background:repeating-linear-gradient(180deg,#f2e35d 0px,#f2e35d 2px,#6e6734 2px,#6e6734 3px);"></div>
<div style="left:2453px;top:299px;width:174px;height:6px;background:repeating-linear-gradient(180deg,#f2e35d 0px,#f2e35d 2px,#6e6734 2px,#6e6734 3px);"></div>
<div style="left:2627px;top:294px;width:521px;height:15px;background:repeating-linear-gradient(180deg,#f2e35d 0px,#f2e35d 2px,#6e6734 2px,#6e6734 3px);"></div>
<div style="left:2090px;top:282px;width:70px;height:2.2px;background:#f2e35d;"></div>
<div style="left:2090px;top:284.5px;width:22px;height:2.2px;background:#f2e35d;"></div>
<div style="left:2090px;top:289.5px;width:112px;height:2.2px;background:#f2e35d;"></div>
<div style="left:2453px;top:286.5px;width:43px;height:2.2px;background:#f2e35d;"></div>
<div style="left:2436px;top:304px;width:17px;height:2.2px;background:#f2e35d;"></div>
<div style="left:2432px;top:309.5px;width:21px;height:2.2px;background:#f2e35d;"></div>
<div style="left:2322px;top:311.5px;width:6px;height:2.2px;background:#f2e35d;"></div>
<div style="left:2496px;top:311.5px;width:6px;height:2.2px;background:#f2e35d;"></div>
<div style="left:2282px;top:334px;width:40px;height:2.2px;background:#f2e35d;"></div>
<div style="left:2453px;top:334px;width:43px;height:2.2px;background:#f2e35d;"></div>
<div style="left:2268px;top:341px;width:12px;height:2.2px;background:#f2e35d;"></div>
<div style="left:2627px;top:334px;width:43px;height:2.2px;background:#f2e35d;"></div>
<div style="left:2802px;top:334px;width:42px;height:2.2px;background:#f2e35d;"></div>
<div style="left:2975px;top:334px;width:43px;height:2.2px;background:#f2e35d;"></div>
<div style="left:2780px;top:309.5px;width:22px;height:2.2px;background:#f2e35d;"></div>
<div style="left:717.4px;top:354px;width:1367.6px;height:12px;background:#2e2e2e;"></div>
<div style="left:717px;top:368px;width:81px;height:12px;background:#2e2e2e;"></div>
<div style="left:806px;top:368px;width:62px;height:12px;background:#2e2e2e;"></div>
<div style="left:1585px;top:368px;width:81px;height:12px;background:#2e2e2e;"></div>
<div style="left:1674px;top:368px;width:62px;height:12px;background:#2e2e2e;"></div>
<div style="left:1760px;top:368px;width:80px;height:12px;background:#2e2e2e;"></div>
<div style="left:1848px;top:368px;width:62px;height:12px;background:#2e2e2e;"></div>
<div style="left:23px;top:382px;width:3125px;height:12px;background:#2e2e2e;"></div>
<div style="left:543px;top:460px;width:174px;height:33px;background:#656565;"></div>
<div style="left:717px;top:460px;width:335px;height:104px;background:#1f2b8f;"></div>
<div style="left:717px;top:492px;width:335px;height:2px;background:#141c5e;"></div>
<div style="left:717px;top:460px;width:335px;height:1.5px;background:#141c5e;"></div>
<div style="left:1585px;top:460px;width:499px;height:104px;background:#1f2b8f;"></div>
<div style="left:1585px;top:492px;width:499px;height:2px;background:#141c5e;"></div>
<div style="left:1585px;top:460px;width:499px;height:1.5px;background:#141c5e;"></div>
<div style="left:543px;top:568px;width:81px;height:33px;background:#656565;"></div>
<div style="left:630px;top:568px;width:64px;height:33px;background:#656565;"></div>
<div style="left:717px;top:568px;width:81px;height:104px;background:#1f2b8f;"></div>
<div style="left:717px;top:600px;width:81px;height:2px;background:#141c5e;"></div>
<div style="left:717px;top:568px;width:81px;height:1.5px;background:#141c5e;"></div>
<div style="left:806px;top:568px;width:62px;height:104px;background:#1f2b8f;"></div>
<div style="left:806px;top:600px;width:62px;height:2px;background:#141c5e;"></div>
<div style="left:806px;top:568px;width:62px;height:1.5px;background:#141c5e;"></div>
<div style="left:1585px;top:568px;width:81px;height:104px;background:#1f2b8f;"></div>
<div style="left:1585px;top:600px;width:81px;height:2px;background:#141c5e;"></div>
<div style="left:1585px;top:568px;width:81px;height:1.5px;background:#141c5e;"></div>
<div style="left:1674px;top:568px;width:62px;height:104px;background:#1f2b8f;"></div>
<div style="left:1674px;top:600px;width:62px;height:2px;background:#141c5e;"></div>
<div style="left:1674px;top:568px;width:62px;height:1.5px;background:#141c5e;"></div>
<div style="left:1760px;top:568px;width:80px;height:104px;background:#1f2b8f;"></div>
<div style="left:1760px;top:600px;width:80px;height:2px;background:#141c5e;"></div>
<div style="left:1760px;top:568px;width:80px;height:1.5px;background:#141c5e;"></div>
<div style="left:1848px;top:568px;width:62px;height:104px;background:#1f2b8f;"></div>
<div style="left:1848px;top:600px;width:62px;height:2px;background:#141c5e;"></div>
<div style="left:1848px;top:568px;width:62px;height:1.5px;background:#141c5e;"></div>
<div style="left:1840px;top:568px;width:7px;height:33px;background:#656565;"></div>
<div style="left:1910px;top:568px;width:23px;height:33px;background:#656565;"></div>
<div style="left:23px;top:676px;width:3125px;height:172px;background:#1f2b8f;"></div>
<div style="left:23px;top:708px;width:3125px;height:2px;background:#141c5e;"></div>
<div style="left:23px;top:676px;width:3125px;height:1.5px;background:#141c5e;"></div>
<div style="left:738.9px;top:495px;width:2px;height:10px;background:#161616;"></div>
<div style="left:742.9px;top:495px;width:2px;height:10px;background:#161616;"></div>
<div style="left:746.9px;top:495px;width:2px;height:10px;background:#161616;"></div>
<div style="left:755.4px;top:495px;width:2px;height:10px;background:#161616;"></div>
<div style="left:721.4px;top:525px;width:2px;height:10px;background:#161616;"></div>
<div style="left:725.4px;top:525px;width:2px;height:10px;background:#161616;"></div>
<div style="left:825.7px;top:495px;width:2px;height:10px;background:#161616;"></div>
<div style="left:829.7px;top:495px;width:2px;height:10px;background:#161616;"></div>
<div style="left:833.7px;top:495px;width:2px;height:10px;background:#161616;"></div>
<div style="left:842.2px;top:495px;width:2px;height:10px;background:#161616;"></div>
<div style="left:803.7px;top:525px;width:2px;height:10px;background:#161616;"></div>
<div style="left:807.7px;top:525px;width:2px;height:10px;background:#161616;"></div>
<div style="left:811.7px;top:525px;width:2px;height:10px;background:#161616;"></div>
<div style="left:912.5px;top:495px;width:2px;height:10px;background:#161616;"></div>
<div style="left:916.5px;top:495px;width:2px;height:10px;background:#161616;"></div>
<div style="left:920.5px;top:495px;width:2px;height:10px;background:#161616;"></div>
<div style="left:929px;top:495px;width:2px;height:10px;background:#161616;"></div>
<div style="left:895px;top:525px;width:2px;height:10px;background:#161616;"></div>
<div style="left:899px;top:525px;width:2px;height:10px;background:#161616;"></div>
<div style="left:933px;top:549px;width:2px;height:10px;background:#161616;"></div>
<div style="left:937px;top:549px;width:2px;height:10px;background:#161616;"></div>
<div style="left:941px;top:549px;width:2px;height:10px;background:#161616;"></div>
<div style="left:945px;top:549px;width:2px;height:10px;background:#161616;"></div>
<div style="left:955px;top:555px;width:2px;height:10px;background:#161616;"></div>
<div style="left:959px;top:555px;width:2px;height:10px;background:#161616;"></div>
<div style="left:963px;top:555px;width:2px;height:10px;background:#161616;"></div>
<div style="left:967px;top:555px;width:2px;height:10px;background:#161616;"></div>
<div style="left:971px;top:555px;width:2px;height:10px;background:#161616;"></div>
<div style="left:1607.2px;top:495px;width:2px;height:10px;background:#161616;"></div>
<div style="left:1611.2px;top:495px;width:2px;height:10px;background:#161616;"></div>
<div style="left:1615.2px;top:495px;width:2px;height:10px;background:#161616;"></div>
<div style="left:1623.7px;top:495px;width:2px;height:10px;background:#161616;"></div>
<div style="left:1589.7px;top:525px;width:2px;height:10px;background:#161616;"></div>
<div style="left:1593.7px;top:525px;width:2px;height:10px;background:#161616;"></div>
<div style="left:1694px;top:495px;width:2px;height:10px;background:#161616;"></div>
<div style="left:1698px;top:495px;width:2px;height:10px;background:#161616;"></div>
<div style="left:1702px;top:495px;width:2px;height:10px;background:#161616;"></div>
<div style="left:1710.5px;top:495px;width:2px;height:10px;background:#161616;"></div>
<div style="left:1672px;top:525px;width:2px;height:10px;background:#161616;"></div>
<div style="left:1676px;top:525px;width:2px;height:10px;background:#161616;"></div>
<div style="left:1680px;top:525px;width:2px;height:10px;background:#161616;"></div>
<div style="left:1780.8px;top:495px;width:2px;height:10px;background:#161616;"></div>
<div style="left:1784.8px;top:495px;width:2px;height:10px;background:#161616;"></div>
<div style="left:1788.8px;top:495px;width:2px;height:10px;background:#161616;"></div>
<div style="left:1797.3px;top:495px;width:2px;height:10px;background:#161616;"></div>
<div style="left:1763.3px;top:525px;width:2px;height:10px;background:#161616;"></div>
<div style="left:1767.3px;top:525px;width:2px;height:10px;background:#161616;"></div>
<div style="left:1801.3px;top:549px;width:2px;height:10px;background:#161616;"></div>
<div style="left:1805.3px;top:549px;width:2px;height:10px;background:#161616;"></div>
<div style="left:1809.3px;top:549px;width:2px;height:10px;background:#161616;"></div>
<div style="left:1813.3px;top:549px;width:2px;height:10px;background:#161616;"></div>
<div style="left:1823.3px;top:555px;width:2px;height:10px;background:#161616;"></div>
<div style="left:1827.3px;top:555px;width:2px;height:10px;background:#161616;"></div>
<div style="left:1831.3px;top:555px;width:2px;height:10px;background:#161616;"></div>
<div style="left:1835.3px;top:555px;width:2px;height:10px;background:#161616;"></div>
<div style="left:1839.3px;top:555px;width:2px;height:10px;background:#161616;"></div>
<div style="left:1867.7px;top:495px;width:2px;height:10px;background:#161616;"></div>
<div style="left:1871.7px;top:495px;width:2px;height:10px;background:#161616;"></div>
<div style="left:1875.7px;top:495px;width:2px;height:10px;background:#161616;"></div>
<div style="left:1884.2px;top:495px;width:2px;height:10px;background:#161616;"></div>
<div style="left:1845.7px;top:525px;width:2px;height:10px;background:#161616;"></div>
<div style="left:1849.7px;top:525px;width:2px;height:10px;background:#161616;"></div>
<div style="left:1853.7px;top:525px;width:2px;height:10px;background:#161616;"></div>
<div style="left:1888.2px;top:549px;width:2px;height:10px;background:#161616;"></div>
<div style="left:1892.2px;top:549px;width:2px;height:10px;background:#161616;"></div>
<div style="left:1896.2px;top:549px;width:2px;height:10px;background:#161616;"></div>
<div style="left:1910.2px;top:555px;width:2px;height:10px;background:#161616;"></div>
<div style="left:1914.2px;top:555px;width:2px;height:10px;background:#161616;"></div>
<div style="left:1918.2px;top:555px;width:2px;height:10px;background:#161616;"></div>
<div style="left:1922.2px;top:555px;width:2px;height:10px;background:#161616;"></div>
<div style="left:1954.5px;top:495px;width:2px;height:10px;background:#161616;"></div>
<div style="left:1958.5px;top:495px;width:2px;height:10px;background:#161616;"></div>
<div style="left:1962.5px;top:495px;width:2px;height:10px;background:#161616;"></div>
<div style="left:1971px;top:495px;width:2px;height:10px;background:#161616;"></div>
<div style="left:1937px;top:525px;width:2px;height:10px;background:#161616;"></div>
<div style="left:1941px;top:525px;width:2px;height:10px;background:#161616;"></div>
<div style="left:1975px;top:549px;width:2px;height:10px;background:#161616;"></div>
<div style="left:1979px;top:549px;width:2px;height:10px;background:#161616;"></div>
<div style="left:1983px;top:549px;width:2px;height:10px;background:#161616;"></div>
<div style="left:1987px;top:549px;width:2px;height:10px;background:#161616;"></div>
<div style="left:1997px;top:555px;width:2px;height:10px;background:#161616;"></div>
<div style="left:2001px;top:555px;width:2px;height:10px;background:#161616;"></div>
<div style="left:2005px;top:555px;width:2px;height:10px;background:#161616;"></div>
<div style="left:2009px;top:555px;width:2px;height:10px;background:#161616;"></div>
<div style="left:2013px;top:555px;width:2px;height:10px;background:#161616;"></div>
<div style="left:757px;top:661px;width:2px;height:9px;background:#161616;"></div>
<div style="left:761px;top:661px;width:2px;height:9px;background:#161616;"></div>
<div style="left:765px;top:661px;width:2px;height:9px;background:#161616;"></div>
<div style="left:777px;top:667px;width:2px;height:9px;background:#161616;"></div>
<div style="left:781px;top:667px;width:2px;height:9px;background:#161616;"></div>
<div style="left:785px;top:667px;width:2px;height:9px;background:#161616;"></div>
<div style="left:846px;top:661px;width:2px;height:9px;background:#161616;"></div>
<div style="left:850px;top:661px;width:2px;height:9px;background:#161616;"></div>
<div style="left:854px;top:661px;width:2px;height:9px;background:#161616;"></div>
<div style="left:866px;top:667px;width:2px;height:9px;background:#161616;"></div>
<div style="left:870px;top:667px;width:2px;height:9px;background:#161616;"></div>
<div style="left:874px;top:667px;width:2px;height:9px;background:#161616;"></div>
<div style="left:1625px;top:661px;width:2px;height:9px;background:#161616;"></div>
<div style="left:1629px;top:661px;width:2px;height:9px;background:#161616;"></div>
<div style="left:1633px;top:661px;width:2px;height:9px;background:#161616;"></div>
<div style="left:1645px;top:667px;width:2px;height:9px;background:#161616;"></div>
<div style="left:1649px;top:667px;width:2px;height:9px;background:#161616;"></div>
<div style="left:1653px;top:667px;width:2px;height:9px;background:#161616;"></div>
<div style="left:1714px;top:661px;width:2px;height:9px;background:#161616;"></div>
<div style="left:1718px;top:661px;width:2px;height:9px;background:#161616;"></div>
<div style="left:1722px;top:661px;width:2px;height:9px;background:#161616;"></div>
<div style="left:1734px;top:667px;width:2px;height:9px;background:#161616;"></div>
<div style="left:1738px;top:667px;width:2px;height:9px;background:#161616;"></div>
<div style="left:1742px;top:667px;width:2px;height:9px;background:#161616;"></div>
<div style="left:1800px;top:661px;width:2px;height:9px;background:#161616;"></div>
<div style="left:1804px;top:661px;width:2px;height:9px;background:#161616;"></div>
<div style="left:1808px;top:661px;width:2px;height:9px;background:#161616;"></div>
<div style="left:1820px;top:667px;width:2px;height:9px;background:#161616;"></div>
<div style="left:1824px;top:667px;width:2px;height:9px;background:#161616;"></div>
<div style="left:1828px;top:667px;width:2px;height:9px;background:#161616;"></div>
<div style="left:1888px;top:661px;width:2px;height:9px;background:#161616;"></div>
<div style="left:1892px;top:661px;width:2px;height:9px;background:#161616;"></div>
<div style="left:1896px;top:661px;width:2px;height:9px;background:#161616;"></div>
<div style="left:1908px;top:667px;width:2px;height:9px;background:#161616;"></div>
<div style="left:1912px;top:667px;width:2px;height:9px;background:#161616;"></div>
<div style="left:1916px;top:667px;width:2px;height:9px;background:#161616;"></div>
<div style="left:217.9px;top:712px;width:2px;height:10px;background:#161616;"></div>
<div style="left:221.9px;top:712px;width:2px;height:10px;background:#161616;"></div>
<div style="left:225.9px;top:712px;width:2px;height:10px;background:#161616;"></div>
<div style="left:234.4px;top:712px;width:2px;height:10px;background:#161616;"></div>
<div style="left:200.4px;top:772px;width:2px;height:10px;background:#161616;"></div>
<div style="left:204.4px;top:772px;width:2px;height:10px;background:#161616;"></div>
<div style="left:238.4px;top:820px;width:2px;height:10px;background:#161616;"></div>
<div style="left:242.4px;top:820px;width:2px;height:10px;background:#161616;"></div>
<div style="left:246.4px;top:820px;width:2px;height:10px;background:#161616;"></div>
<div style="left:250.4px;top:820px;width:2px;height:10px;background:#161616;"></div>
<div style="left:260.4px;top:832px;width:2px;height:10px;background:#161616;"></div>
<div style="left:264.4px;top:832px;width:2px;height:10px;background:#161616;"></div>
<div style="left:268.4px;top:832px;width:2px;height:10px;background:#161616;"></div>
<div style="left:272.4px;top:832px;width:2px;height:10px;background:#161616;"></div>
<div style="left:276.4px;top:832px;width:2px;height:10px;background:#161616;"></div>
<div style="left:304.7px;top:712px;width:2px;height:10px;background:#161616;"></div>
<div style="left:308.7px;top:712px;width:2px;height:10px;background:#161616;"></div>
<div style="left:312.7px;top:712px;width:2px;height:10px;background:#161616;"></div>
<div style="left:321.2px;top:712px;width:2px;height:10px;background:#161616;"></div>
<div style="left:282.7px;top:772px;width:2px;height:10px;background:#161616;"></div>
<div style="left:286.7px;top:772px;width:2px;height:10px;background:#161616;"></div>
<div style="left:290.7px;top:772px;width:2px;height:10px;background:#161616;"></div>
<div style="left:325.2px;top:820px;width:2px;height:10px;background:#161616;"></div>
<div style="left:329.2px;top:820px;width:2px;height:10px;background:#161616;"></div>
<div style="left:333.2px;top:820px;width:2px;height:10px;background:#161616;"></div>
<div style="left:347.2px;top:832px;width:2px;height:10px;background:#161616;"></div>
<div style="left:351.2px;top:832px;width:2px;height:10px;background:#161616;"></div>
<div style="left:355.2px;top:832px;width:2px;height:10px;background:#161616;"></div>
<div style="left:359.2px;top:832px;width:2px;height:10px;background:#161616;"></div>
<div style="left:391.5px;top:712px;width:2px;height:10px;background:#161616;"></div>
<div style="left:395.5px;top:712px;width:2px;height:10px;background:#161616;"></div>
<div style="left:399.5px;top:712px;width:2px;height:10px;background:#161616;"></div>
<div style="left:408px;top:712px;width:2px;height:10px;background:#161616;"></div>
<div style="left:374px;top:772px;width:2px;height:10px;background:#161616;"></div>
<div style="left:378px;top:772px;width:2px;height:10px;background:#161616;"></div>
<div style="left:412px;top:820px;width:2px;height:10px;background:#161616;"></div>
<div style="left:416px;top:820px;width:2px;height:10px;background:#161616;"></div>
<div style="left:420px;top:820px;width:2px;height:10px;background:#161616;"></div>
<div style="left:424px;top:820px;width:2px;height:10px;background:#161616;"></div>
<div style="left:434px;top:832px;width:2px;height:10px;background:#161616;"></div>
<div style="left:438px;top:832px;width:2px;height:10px;background:#161616;"></div>
<div style="left:442px;top:832px;width:2px;height:10px;background:#161616;"></div>
<div style="left:446px;top:832px;width:2px;height:10px;background:#161616;"></div>
<div style="left:450px;top:832px;width:2px;height:10px;background:#161616;"></div>
<div style="left:478.4px;top:712px;width:2px;height:10px;background:#161616;"></div>
<div style="left:482.4px;top:712px;width:2px;height:10px;background:#161616;"></div>
<div style="left:486.4px;top:712px;width:2px;height:10px;background:#161616;"></div>
<div style="left:494.9px;top:712px;width:2px;height:10px;background:#161616;"></div>
<div style="left:456.4px;top:772px;width:2px;height:10px;background:#161616;"></div>
<div style="left:460.4px;top:772px;width:2px;height:10px;background:#161616;"></div>
<div style="left:464.4px;top:772px;width:2px;height:10px;background:#161616;"></div>
<div style="left:498.9px;top:820px;width:2px;height:10px;background:#161616;"></div>
<div style="left:502.9px;top:820px;width:2px;height:10px;background:#161616;"></div>
<div style="left:506.9px;top:820px;width:2px;height:10px;background:#161616;"></div>
<div style="left:520.9px;top:832px;width:2px;height:10px;background:#161616;"></div>
<div style="left:524.9px;top:832px;width:2px;height:10px;background:#161616;"></div>
<div style="left:528.9px;top:832px;width:2px;height:10px;background:#161616;"></div>
<div style="left:532.9px;top:832px;width:2px;height:10px;background:#161616;"></div>
<div style="left:1086.2px;top:712px;width:2px;height:10px;background:#161616;"></div>
<div style="left:1090.2px;top:712px;width:2px;height:10px;background:#161616;"></div>
<div style="left:1094.2px;top:712px;width:2px;height:10px;background:#161616;"></div>
<div style="left:1102.7px;top:712px;width:2px;height:10px;background:#161616;"></div>
<div style="left:1068.7px;top:772px;width:2px;height:10px;background:#161616;"></div>
<div style="left:1072.7px;top:772px;width:2px;height:10px;background:#161616;"></div>
<div style="left:1106.7px;top:820px;width:2px;height:10px;background:#161616;"></div>
<div style="left:1110.7px;top:820px;width:2px;height:10px;background:#161616;"></div>
<div style="left:1114.7px;top:820px;width:2px;height:10px;background:#161616;"></div>
<div style="left:1118.7px;top:820px;width:2px;height:10px;background:#161616;"></div>
<div style="left:1128.7px;top:832px;width:2px;height:10px;background:#161616;"></div>
<div style="left:1132.7px;top:832px;width:2px;height:10px;background:#161616;"></div>
<div style="left:1136.7px;top:832px;width:2px;height:10px;background:#161616;"></div>
<div style="left:1140.7px;top:832px;width:2px;height:10px;background:#161616;"></div>
<div style="left:1144.7px;top:832px;width:2px;height:10px;background:#161616;"></div>
<div style="left:1173px;top:712px;width:2px;height:10px;background:#161616;"></div>
<div style="left:1177px;top:712px;width:2px;height:10px;background:#161616;"></div>
<div style="left:1181px;top:712px;width:2px;height:10px;background:#161616;"></div>
<div style="left:1189.5px;top:712px;width:2px;height:10px;background:#161616;"></div>
<div style="left:1151px;top:772px;width:2px;height:10px;background:#161616;"></div>
<div style="left:1155px;top:772px;width:2px;height:10px;background:#161616;"></div>
<div style="left:1159px;top:772px;width:2px;height:10px;background:#161616;"></div>
<div style="left:1193.5px;top:820px;width:2px;height:10px;background:#161616;"></div>
<div style="left:1197.5px;top:820px;width:2px;height:10px;background:#161616;"></div>
<div style="left:1201.5px;top:820px;width:2px;height:10px;background:#161616;"></div>
<div style="left:1215.5px;top:832px;width:2px;height:10px;background:#161616;"></div>
<div style="left:1219.5px;top:832px;width:2px;height:10px;background:#161616;"></div>
<div style="left:1223.5px;top:832px;width:2px;height:10px;background:#161616;"></div>
<div style="left:1227.5px;top:832px;width:2px;height:10px;background:#161616;"></div>
<div style="left:1259.8px;top:712px;width:2px;height:10px;background:#161616;"></div>
<div style="left:1263.8px;top:712px;width:2px;height:10px;background:#161616;"></div>
<div style="left:1267.8px;top:712px;width:2px;height:10px;background:#161616;"></div>
<div style="left:1276.3px;top:712px;width:2px;height:10px;background:#161616;"></div>
<div style="left:1242.3px;top:772px;width:2px;height:10px;background:#161616;"></div>
<div style="left:1246.3px;top:772px;width:2px;height:10px;background:#161616;"></div>
<div style="left:1280.3px;top:820px;width:2px;height:10px;background:#161616;"></div>
<div style="left:1284.3px;top:820px;width:2px;height:10px;background:#161616;"></div>
<div style="left:1288.3px;top:820px;width:2px;height:10px;background:#161616;"></div>
<div style="left:1292.3px;top:820px;width:2px;height:10px;background:#161616;"></div>
<div style="left:1302.3px;top:832px;width:2px;height:10px;background:#161616;"></div>
<div style="left:1306.3px;top:832px;width:2px;height:10px;background:#161616;"></div>
<div style="left:1310.3px;top:832px;width:2px;height:10px;background:#161616;"></div>
<div style="left:1314.3px;top:832px;width:2px;height:10px;background:#161616;"></div>
<div style="left:1318.3px;top:832px;width:2px;height:10px;background:#161616;"></div>
<div style="left:1346.7px;top:712px;width:2px;height:10px;background:#161616;"></div>
<div style="left:1350.7px;top:712px;width:2px;height:10px;background:#161616;"></div>
<div style="left:1354.7px;top:712px;width:2px;height:10px;background:#161616;"></div>
<div style="left:1363.2px;top:712px;width:2px;height:10px;background:#161616;"></div>
<div style="left:1324.7px;top:772px;width:2px;height:10px;background:#161616;"></div>
<div style="left:1328.7px;top:772px;width:2px;height:10px;background:#161616;"></div>
<div style="left:1332.7px;top:772px;width:2px;height:10px;background:#161616;"></div>
<div style="left:1367.2px;top:820px;width:2px;height:10px;background:#161616;"></div>
<div style="left:1371.2px;top:820px;width:2px;height:10px;background:#161616;"></div>
<div style="left:1375.2px;top:820px;width:2px;height:10px;background:#161616;"></div>
<div style="left:1389.2px;top:832px;width:2px;height:10px;background:#161616;"></div>
<div style="left:1393.2px;top:832px;width:2px;height:10px;background:#161616;"></div>
<div style="left:1397.2px;top:832px;width:2px;height:10px;background:#161616;"></div>
<div style="left:1401.2px;top:832px;width:2px;height:10px;background:#161616;"></div>
<div style="left:1433.5px;top:712px;width:2px;height:10px;background:#161616;"></div>
<div style="left:1437.5px;top:712px;width:2px;height:10px;background:#161616;"></div>
<div style="left:1441.5px;top:712px;width:2px;height:10px;background:#161616;"></div>
<div style="left:1450px;top:712px;width:2px;height:10px;background:#161616;"></div>
<div style="left:1416px;top:772px;width:2px;height:10px;background:#161616;"></div>
<div style="left:1420px;top:772px;width:2px;height:10px;background:#161616;"></div>
<div style="left:1454px;top:820px;width:2px;height:10px;background:#161616;"></div>
<div style="left:1458px;top:820px;width:2px;height:10px;background:#161616;"></div>
<div style="left:1462px;top:820px;width:2px;height:10px;background:#161616;"></div>
<div style="left:1466px;top:820px;width:2px;height:10px;background:#161616;"></div>
<div style="left:1476px;top:832px;width:2px;height:10px;background:#161616;"></div>
<div style="left:1480px;top:832px;width:2px;height:10px;background:#161616;"></div>
<div style="left:1484px;top:832px;width:2px;height:10px;background:#161616;"></div>
<div style="left:1488px;top:832px;width:2px;height:10px;background:#161616;"></div>
<div style="left:1492px;top:832px;width:2px;height:10px;background:#161616;"></div>
<div style="left:1520.3px;top:712px;width:2px;height:10px;background:#161616;"></div>
<div style="left:1524.3px;top:712px;width:2px;height:10px;background:#161616;"></div>
<div style="left:1528.3px;top:712px;width:2px;height:10px;background:#161616;"></div>
<div style="left:1536.8px;top:712px;width:2px;height:10px;background:#161616;"></div>
<div style="left:1498.3px;top:772px;width:2px;height:10px;background:#161616;"></div>
<div style="left:1502.3px;top:772px;width:2px;height:10px;background:#161616;"></div>
<div style="left:1506.3px;top:772px;width:2px;height:10px;background:#161616;"></div>
<div style="left:1540.8px;top:820px;width:2px;height:10px;background:#161616;"></div>
<div style="left:1544.8px;top:820px;width:2px;height:10px;background:#161616;"></div>
<div style="left:1548.8px;top:820px;width:2px;height:10px;background:#161616;"></div>
<div style="left:1562.8px;top:832px;width:2px;height:10px;background:#161616;"></div>
<div style="left:1566.8px;top:832px;width:2px;height:10px;background:#161616;"></div>
<div style="left:1570.8px;top:832px;width:2px;height:10px;background:#161616;"></div>
<div style="left:1574.8px;top:832px;width:2px;height:10px;background:#161616;"></div>
<div style="left:2128.2px;top:712px;width:2px;height:10px;background:#161616;"></div>
<div style="left:2132.2px;top:712px;width:2px;height:10px;background:#161616;"></div>
<div style="left:2136.2px;top:712px;width:2px;height:10px;background:#161616;"></div>
<div style="left:2144.7px;top:712px;width:2px;height:10px;background:#161616;"></div>
<div style="left:2110.7px;top:772px;width:2px;height:10px;background:#161616;"></div>
<div style="left:2114.7px;top:772px;width:2px;height:10px;background:#161616;"></div>
<div style="left:2148.7px;top:820px;width:2px;height:10px;background:#161616;"></div>
<div style="left:2152.7px;top:820px;width:2px;height:10px;background:#161616;"></div>
<div style="left:2156.7px;top:820px;width:2px;height:10px;background:#161616;"></div>
<div style="left:2160.7px;top:820px;width:2px;height:10px;background:#161616;"></div>
<div style="left:2170.7px;top:832px;width:2px;height:10px;background:#161616;"></div>
<div style="left:2174.7px;top:832px;width:2px;height:10px;background:#161616;"></div>
<div style="left:2178.7px;top:832px;width:2px;height:10px;background:#161616;"></div>
<div style="left:2182.7px;top:832px;width:2px;height:10px;background:#161616;"></div>
<div style="left:2186.7px;top:832px;width:2px;height:10px;background:#161616;"></div>
<div style="left:2215px;top:712px;width:2px;height:10px;background:#161616;"></div>
<div style="left:2219px;top:712px;width:2px;height:10px;background:#161616;"></div>
<div style="left:2223px;top:712px;width:2px;height:10px;background:#161616;"></div>
<div style="left:2231.5px;top:712px;width:2px;height:10px;background:#161616;"></div>
<div style="left:2193px;top:772px;width:2px;height:10px;background:#161616;"></div>
<div style="left:2197px;top:772px;width:2px;height:10px;background:#161616;"></div>
<div style="left:2201px;top:772px;width:2px;height:10px;background:#161616;"></div>
<div style="left:2235.5px;top:820px;width:2px;height:10px;background:#161616;"></div>
<div style="left:2239.5px;top:820px;width:2px;height:10px;background:#161616;"></div>
<div style="left:2243.5px;top:820px;width:2px;height:10px;background:#161616;"></div>
<div style="left:2257.5px;top:832px;width:2px;height:10px;background:#161616;"></div>
<div style="left:2261.5px;top:832px;width:2px;height:10px;background:#161616;"></div>
<div style="left:2265.5px;top:832px;width:2px;height:10px;background:#161616;"></div>
<div style="left:2269.5px;top:832px;width:2px;height:10px;background:#161616;"></div>
<div style="left:2301.8px;top:712px;width:2px;height:10px;background:#161616;"></div>
<div style="left:2305.8px;top:712px;width:2px;height:10px;background:#161616;"></div>
<div style="left:2309.8px;top:712px;width:2px;height:10px;background:#161616;"></div>
<div style="left:2318.3px;top:712px;width:2px;height:10px;background:#161616;"></div>
<div style="left:2284.3px;top:772px;width:2px;height:10px;background:#161616;"></div>
<div style="left:2288.3px;top:772px;width:2px;height:10px;background:#161616;"></div>
<div style="left:2322.3px;top:820px;width:2px;height:10px;background:#161616;"></div>
<div style="left:2326.3px;top:820px;width:2px;height:10px;background:#161616;"></div>
<div style="left:2330.3px;top:820px;width:2px;height:10px;background:#161616;"></div>
<div style="left:2334.3px;top:820px;width:2px;height:10px;background:#161616;"></div>
<div style="left:2344.3px;top:832px;width:2px;height:10px;background:#161616;"></div>
<div style="left:2348.3px;top:832px;width:2px;height:10px;background:#161616;"></div>
<div style="left:2352.3px;top:832px;width:2px;height:10px;background:#161616;"></div>
<div style="left:2356.3px;top:832px;width:2px;height:10px;background:#161616;"></div>
<div style="left:2360.3px;top:832px;width:2px;height:10px;background:#161616;"></div>
<div style="left:2388.7px;top:712px;width:2px;height:10px;background:#161616;"></div>
<div style="left:2392.7px;top:712px;width:2px;height:10px;background:#161616;"></div>
<div style="left:2396.7px;top:712px;width:2px;height:10px;background:#161616;"></div>
<div style="left:2405.2px;top:712px;width:2px;height:10px;background:#161616;"></div>
<div style="left:2366.7px;top:772px;width:2px;height:10px;background:#161616;"></div>
<div style="left:2370.7px;top:772px;width:2px;height:10px;background:#161616;"></div>
<div style="left:2374.7px;top:772px;width:2px;height:10px;background:#161616;"></div>
<div style="left:2409.2px;top:820px;width:2px;height:10px;background:#161616;"></div>
<div style="left:2413.2px;top:820px;width:2px;height:10px;background:#161616;"></div>
<div style="left:2417.2px;top:820px;width:2px;height:10px;background:#161616;"></div>
<div style="left:2431.2px;top:832px;width:2px;height:10px;background:#161616;"></div>
<div style="left:2435.2px;top:832px;width:2px;height:10px;background:#161616;"></div>
<div style="left:2439.2px;top:832px;width:2px;height:10px;background:#161616;"></div>
<div style="left:2443.2px;top:832px;width:2px;height:10px;background:#161616;"></div>
<div style="left:2475.5px;top:712px;width:2px;height:10px;background:#161616;"></div>
<div style="left:2479.5px;top:712px;width:2px;height:10px;background:#161616;"></div>
<div style="left:2483.5px;top:712px;width:2px;height:10px;background:#161616;"></div>
<div style="left:2492px;top:712px;width:2px;height:10px;background:#161616;"></div>
<div style="left:2458px;top:772px;width:2px;height:10px;background:#161616;"></div>
<div style="left:2462px;top:772px;width:2px;height:10px;background:#161616;"></div>
<div style="left:2496px;top:820px;width:2px;height:10px;background:#161616;"></div>
<div style="left:2500px;top:820px;width:2px;height:10px;background:#161616;"></div>
<div style="left:2504px;top:820px;width:2px;height:10px;background:#161616;"></div>
<div style="left:2508px;top:820px;width:2px;height:10px;background:#161616;"></div>
<div style="left:2518px;top:832px;width:2px;height:10px;background:#161616;"></div>
<div style="left:2522px;top:832px;width:2px;height:10px;background:#161616;"></div>
<div style="left:2526px;top:832px;width:2px;height:10px;background:#161616;"></div>
<div style="left:2530px;top:832px;width:2px;height:10px;background:#161616;"></div>
<div style="left:2534px;top:832px;width:2px;height:10px;background:#161616;"></div>
<div style="left:2562.3px;top:712px;width:2px;height:10px;background:#161616;"></div>
<div style="left:2566.3px;top:712px;width:2px;height:10px;background:#161616;"></div>
<div style="left:2570.3px;top:712px;width:2px;height:10px;background:#161616;"></div>
<div style="left:2578.8px;top:712px;width:2px;height:10px;background:#161616;"></div>
<div style="left:2540.3px;top:772px;width:2px;height:10px;background:#161616;"></div>
<div style="left:2544.3px;top:772px;width:2px;height:10px;background:#161616;"></div>
<div style="left:2548.3px;top:772px;width:2px;height:10px;background:#161616;"></div>
<div style="left:2582.8px;top:820px;width:2px;height:10px;background:#161616;"></div>
<div style="left:2586.8px;top:820px;width:2px;height:10px;background:#161616;"></div>
<div style="left:2590.8px;top:820px;width:2px;height:10px;background:#161616;"></div>
<div style="left:2604.8px;top:832px;width:2px;height:10px;background:#161616;"></div>
<div style="left:2608.8px;top:832px;width:2px;height:10px;background:#161616;"></div>
<div style="left:2612.8px;top:832px;width:2px;height:10px;background:#161616;"></div>
<div style="left:2616.8px;top:832px;width:2px;height:10px;background:#161616;"></div>
<div style="left:2649.2px;top:712px;width:2px;height:10px;background:#161616;"></div>
<div style="left:2653.2px;top:712px;width:2px;height:10px;background:#161616;"></div>
<div style="left:2657.2px;top:712px;width:2px;height:10px;background:#161616;"></div>
<div style="left:2665.7px;top:712px;width:2px;height:10px;background:#161616;"></div>
<div style="left:2631.7px;top:772px;width:2px;height:10px;background:#161616;"></div>
<div style="left:2635.7px;top:772px;width:2px;height:10px;background:#161616;"></div>
<div style="left:2669.7px;top:820px;width:2px;height:10px;background:#161616;"></div>
<div style="left:2673.7px;top:820px;width:2px;height:10px;background:#161616;"></div>
<div style="left:2677.7px;top:820px;width:2px;height:10px;background:#161616;"></div>
<div style="left:2681.7px;top:820px;width:2px;height:10px;background:#161616;"></div>
<div style="left:2691.7px;top:832px;width:2px;height:10px;background:#161616;"></div>
<div style="left:2695.7px;top:832px;width:2px;height:10px;background:#161616;"></div>
<div style="left:2699.7px;top:832px;width:2px;height:10px;background:#161616;"></div>
<div style="left:2703.7px;top:832px;width:2px;height:10px;background:#161616;"></div>
<div style="left:2707.7px;top:832px;width:2px;height:10px;background:#161616;"></div>
<div style="left:2736px;top:712px;width:2px;height:10px;background:#161616;"></div>
<div style="left:2740px;top:712px;width:2px;height:10px;background:#161616;"></div>
<div style="left:2744px;top:712px;width:2px;height:10px;background:#161616;"></div>
<div style="left:2752.5px;top:712px;width:2px;height:10px;background:#161616;"></div>
<div style="left:2714px;top:772px;width:2px;height:10px;background:#161616;"></div>
<div style="left:2718px;top:772px;width:2px;height:10px;background:#161616;"></div>
<div style="left:2722px;top:772px;width:2px;height:10px;background:#161616;"></div>
<div style="left:2756.5px;top:820px;width:2px;height:10px;background:#161616;"></div>
<div style="left:2760.5px;top:820px;width:2px;height:10px;background:#161616;"></div>
<div style="left:2764.5px;top:820px;width:2px;height:10px;background:#161616;"></div>
<div style="left:2778.5px;top:832px;width:2px;height:10px;background:#161616;"></div>
<div style="left:2782.5px;top:832px;width:2px;height:10px;background:#161616;"></div>
<div style="left:2786.5px;top:832px;width:2px;height:10px;background:#161616;"></div>
<div style="left:2790.5px;top:832px;width:2px;height:10px;background:#161616;"></div>
<div style="left:2822.8px;top:712px;width:2px;height:10px;background:#161616;"></div>
<div style="left:2826.8px;top:712px;width:2px;height:10px;background:#161616;"></div>
<div style="left:2830.8px;top:712px;width:2px;height:10px;background:#161616;"></div>
<div style="left:2839.3px;top:712px;width:2px;height:10px;background:#161616;"></div>
<div style="left:2805.3px;top:772px;width:2px;height:10px;background:#161616;"></div>
<div style="left:2809.3px;top:772px;width:2px;height:10px;background:#161616;"></div>
<div style="left:2843.3px;top:820px;width:2px;height:10px;background:#161616;"></div>
<div style="left:2847.3px;top:820px;width:2px;height:10px;background:#161616;"></div>
<div style="left:2851.3px;top:820px;width:2px;height:10px;background:#161616;"></div>
<div style="left:2855.3px;top:820px;width:2px;height:10px;background:#161616;"></div>
<div style="left:2865.3px;top:832px;width:2px;height:10px;background:#161616;"></div>
<div style="left:2869.3px;top:832px;width:2px;height:10px;background:#161616;"></div>
<div style="left:2873.3px;top:832px;width:2px;height:10px;background:#161616;"></div>
<div style="left:2877.3px;top:832px;width:2px;height:10px;background:#161616;"></div>
<div style="left:2881.3px;top:832px;width:2px;height:10px;background:#161616;"></div>
<div style="left:2909.7px;top:712px;width:2px;height:10px;background:#161616;"></div>
<div style="left:2913.7px;top:712px;width:2px;height:10px;background:#161616;"></div>
<div style="left:2917.7px;top:712px;width:2px;height:10px;background:#161616;"></div>
<div style="left:2926.2px;top:712px;width:2px;height:10px;background:#161616;"></div>
<div style="left:2887.7px;top:772px;width:2px;height:10px;background:#161616;"></div>
<div style="left:2891.7px;top:772px;width:2px;height:10px;background:#161616;"></div>
<div style="left:2895.7px;top:772px;width:2px;height:10px;background:#161616;"></div>
<div style="left:2930.2px;top:820px;width:2px;height:10px;background:#161616;"></div>
<div style="left:2934.2px;top:820px;width:2px;height:10px;background:#161616;"></div>
<div style="left:2938.2px;top:820px;width:2px;height:10px;background:#161616;"></div>
<div style="left:2952.2px;top:832px;width:2px;height:10px;background:#161616;"></div>
<div style="left:2956.2px;top:832px;width:2px;height:10px;background:#161616;"></div>
<div style="left:2960.2px;top:832px;width:2px;height:10px;background:#161616;"></div>
<div style="left:2964.2px;top:832px;width:2px;height:10px;background:#161616;"></div>
<div style="left:577px;top:495px;width:2px;height:7px;background:#7a7a7a;"></div>
<div style="left:581px;top:495px;width:2px;height:7px;background:#7a7a7a;"></div>
<div style="left:585px;top:495px;width:2px;height:7px;background:#7a7a7a;"></div>
<div style="left:663px;top:495px;width:2px;height:7px;background:#7a7a7a;"></div>
<div style="left:667px;top:495px;width:2px;height:7px;background:#7a7a7a;"></div>
<div style="left:671px;top:495px;width:2px;height:7px;background:#7a7a7a;"></div>
<div style="left:545px;top:525px;width:2px;height:7px;background:#7a7a7a;"></div>
<div style="left:549px;top:525px;width:2px;height:7px;background:#7a7a7a;"></div>
<div style="left:553px;top:525px;width:2px;height:7px;background:#7a7a7a;"></div>
<div style="left:630px;top:525px;width:2px;height:7px;background:#7a7a7a;"></div>
<div style="left:634px;top:525px;width:2px;height:7px;background:#7a7a7a;"></div>
<div style="left:638px;top:525px;width:2px;height:7px;background:#7a7a7a;"></div>
<div style="left:588px;top:659px;width:2px;height:7px;background:#7a7a7a;"></div>
<div style="left:592px;top:659px;width:2px;height:7px;background:#7a7a7a;"></div>
<div style="left:596px;top:659px;width:2px;height:7px;background:#7a7a7a;"></div>
<div style="left:610px;top:665px;width:2px;height:7px;background:#7a7a7a;"></div>
<div style="left:614px;top:665px;width:2px;height:7px;background:#7a7a7a;"></div>
<div style="left:618px;top:665px;width:2px;height:7px;background:#7a7a7a;"></div>
<div style="left:675px;top:659px;width:2px;height:7px;background:#7a7a7a;"></div>
<div style="left:679px;top:659px;width:2px;height:7px;background:#7a7a7a;"></div>
<div style="left:683px;top:659px;width:2px;height:7px;background:#7a7a7a;"></div>
<div style="left:522px;top:854px;width:390px;height:12px;background:#2e2e2e;"></div>
<div style="left:1043px;top:854px;width:369px;height:12px;background:#2e2e2e;"></div>
<div style="left:2057px;top:854px;width:397px;height:12px;background:#2e2e2e;"></div>
<div style="left:1575px;top:868px;width:53px;height:12px;background:#2e2e2e;"></div>
<div style="left:1667px;top:868px;width:49px;height:12px;background:#2e2e2e;"></div>
<div style="left:1754px;top:868px;width:178px;height:12px;background:#2e2e2e;"></div>
<div style="left:1596px;top:882px;width:11px;height:12px;background:#2e2e2e;"></div>
<div style="left:1683px;top:882px;width:17px;height:12px;background:#2e2e2e;"></div>
<div style="left:891px;top:896px;width:173px;height:12px;background:#2e2e2e;"></div>
<div style="left:1934px;top:896px;width:172px;height:12px;background:#2e2e2e;"></div>
<div style="left:348px;top:910px;width:54px;height:12px;background:#2e2e2e;"></div>
<div style="left:858px;top:910px;width:32px;height:12px;background:#2e2e2e;"></div>
<div style="left:945px;top:910px;width:31px;height:12px;background:#2e2e2e;"></div>
<div style="left:1477px;top:910px;width:53px;height:12px;background:#2e2e2e;"></div>
<div style="left:1900px;top:910px;width:32px;height:12px;background:#2e2e2e;"></div>
<div style="left:1986px;top:910px;width:31px;height:12px;background:#2e2e2e;"></div>
<div style="left:2519px;top:910px;width:53px;height:12px;background:#2e2e2e;"></div>
<div style="left:2692px;top:910px;width:54px;height:12px;background:#2e2e2e;"></div>
<div style="left:23px;top:924px;width:173px;height:12px;background:#2e2e2e;"></div>
<div style="left:372px;top:924px;width:170px;height:12px;background:#2e2e2e;"></div>
<div style="left:891px;top:924px;width:173px;height:12px;background:#2e2e2e;"></div>
<div style="left:1412px;top:924px;width:172px;height:12px;background:#2e2e2e;"></div>
<div style="left:1934px;top:924px;width:172px;height:12px;background:#2e2e2e;"></div>
<div style="left:2455px;top:924px;width:171px;height:12px;background:#2e2e2e;"></div>
<div style="left:2800px;top:924px;width:174px;height:12px;background:#2e2e2e;"></div>
<div style="left:348px;top:960px;width:54px;height:33px;background:#656565;"></div>
<svg style="position:absolute;left:348px;top:996.5px;overflow:visible" width="54" height="28"><g transform="translate(0,14)"><path d="M0.0,-0.9 L1.0,-0.9 L2.0,-0.8 L3.0,-0.8 L4.0,-0.8 L5.0,-0.8 L6.0,-0.9 L7.0,-0.9 L8.0,-0.8 L9.0,-0.9 L10.0,-0.8 L11.0,-0.9 L12.0,-0.9 L13.0,-0.9 L14.0,-0.9 L15.0,-0.8 L16.0,-0.8 L17.0,-9.4 L18.0,-11.4 L19.0,-11.0 L20.0,-9.2 L21.0,-7.4 L22.0,-7.9 L23.0,-8.7 L24.0,-8.6 L25.0,-7.2 L26.0,-9.5 L27.0,-7.8 L28.0,-6.1 L29.0,-6.8 L30.0,-7.9 L31.0,-7.1 L32.0,-5.8 L33.0,-2.9 L34.0,-0.8 L35.0,-0.9 L36.0,-0.8 L37.0,-0.8 L38.0,-0.8 L39.0,-0.8 L40.0,-0.8 L41.0,-0.8 L42.0,-0.9 L43.0,-0.8 L44.0,-0.8 L45.0,-0.8 L46.0,-0.9 L47.0,-0.8 L48.0,-0.9 L49.0,-0.9 L50.0,-0.9 L51.0,-0.9 L52.0,-0.8 L53.0,-0.8 L54.0,-0.8 L54.0,0.8 L53.0,0.8 L52.0,0.8 L51.0,0.8 L50.0,0.8 L49.0,0.9 L48.0,0.8 L47.0,0.8 L46.0,0.9 L45.0,0.8 L44.0,0.8 L43.0,0.8 L42.0,0.9 L41.0,0.8 L40.0,0.8 L39.0,0.8 L38.0,0.8 L37.0,0.8 L36.0,0.8 L35.0,0.8 L34.0,0.8 L33.0,3.3 L32.0,5.8 L31.0,8.2 L30.0,7.9 L29.0,6.4 L28.0,7.1 L27.0,7.1 L26.0,8.7 L25.0,6.6 L24.0,8.4 L23.0,8.6 L22.0,7.6 L21.0,7.3 L20.0,7.9 L19.0,11.2 L18.0,11.4 L17.0,9.1 L16.0,0.9 L15.0,0.8 L14.0,0.8 L13.0,0.9 L12.0,0.8 L11.0,0.9 L10.0,0.8 L9.0,0.8 L8.0,0.8 L7.0,0.8 L6.0,0.8 L5.0,0.9 L4.0,0.8 L3.0,0.8 L2.0,0.8 L1.0,0.8 L0.0,0.8Z" fill="#6a6a6a"/><rect x="0" y="-1" width="54" height="2" fill="#6a6a6a"/></g></svg>
<svg style="position:absolute;left:348px;top:1032.8px;overflow:visible" width="54" height="28"><g transform="translate(0,14)"><path d="M0.0,-0.9 L1.0,-0.9 L2.0,-0.8 L3.0,-0.8 L4.0,-0.8 L5.0,-0.8 L6.0,-0.9 L7.0,-0.9 L8.0,-0.8 L9.0,-0.9 L10.0,-0.8 L11.0,-0.9 L12.0,-0.9 L13.0,-0.9 L14.0,-0.9 L15.0,-0.8 L16.0,-0.8 L17.0,-9.4 L18.0,-11.4 L19.0,-11.0 L20.0,-9.2 L21.0,-7.4 L22.0,-7.9 L23.0,-8.7 L24.0,-8.6 L25.0,-7.2 L26.0,-9.5 L27.0,-7.8 L28.0,-6.1 L29.0,-6.8 L30.0,-7.9 L31.0,-7.1 L32.0,-5.8 L33.0,-2.9 L34.0,-0.8 L35.0,-0.9 L36.0,-0.8 L37.0,-0.8 L38.0,-0.8 L39.0,-0.8 L40.0,-0.8 L41.0,-0.8 L42.0,-0.9 L43.0,-0.8 L44.0,-0.8 L45.0,-0.8 L46.0,-0.9 L47.0,-0.8 L48.0,-0.9 L49.0,-0.9 L50.0,-0.9 L51.0,-0.9 L52.0,-0.8 L53.0,-0.8 L54.0,-0.8 L54.0,0.8 L53.0,0.8 L52.0,0.8 L51.0,0.8 L50.0,0.8 L49.0,0.9 L48.0,0.8 L47.0,0.8 L46.0,0.9 L45.0,0.8 L44.0,0.8 L43.0,0.8 L42.0,0.9 L41.0,0.8 L40.0,0.8 L39.0,0.8 L38.0,0.8 L37.0,0.8 L36.0,0.8 L35.0,0.8 L34.0,0.8 L33.0,3.3 L32.0,5.8 L31.0,8.2 L30.0,7.9 L29.0,6.4 L28.0,7.1 L27.0,7.1 L26.0,8.7 L25.0,6.6 L24.0,8.4 L23.0,8.6 L22.0,7.6 L21.0,7.3 L20.0,7.9 L19.0,11.2 L18.0,11.4 L17.0,9.1 L16.0,0.9 L15.0,0.8 L14.0,0.8 L13.0,0.9 L12.0,0.8 L11.0,0.9 L10.0,0.8 L9.0,0.8 L8.0,0.8 L7.0,0.8 L6.0,0.8 L5.0,0.9 L4.0,0.8 L3.0,0.8 L2.0,0.8 L1.0,0.8 L0.0,0.8Z" fill="#6a6a6a"/><rect x="0" y="-1" width="54" height="2" fill="#6a6a6a"/></g></svg>
<div style="left:357.8px;top:1005px;width:2px;height:11px;background:#6a6a6a;"></div>
<div style="left:357.8px;top:1041px;width:2px;height:11px;background:#6a6a6a;"></div>
<div style="left:348px;top:960px;width:54px;height:32px;overflow:hidden;"><div class="t" style="left:6px;top:8px;font-size:19.5px;letter-spacing:0.9px;color:#262626;-webkit-text-stroke:0.25px #262626;">I HS1</div></div>
<div style="left:522px;top:960px;width:390px;height:104px;background:#7dfb5b;"></div>
<div style="left:522px;top:960px;width:2px;height:104px;background:#3f9a2e;"></div>
<div style="left:522px;top:992px;width:390px;height:2px;background:#3f9a2e;"></div>
<svg style="position:absolute;left:524px;top:996.5px;overflow:visible" width="388" height="28"><g transform="translate(0,14)"><path d="M0.0,-0.8 L1.0,-0.9 L2.0,-0.8 L3.0,-0.8 L4.0,-3.6 L5.0,-7.3 L6.0,-10.0 L7.0,-8.7 L8.0,-7.5 L9.0,-6.6 L10.0,-5.8 L11.0,-7.0 L12.0,-7.0 L13.0,-7.9 L14.0,-7.9 L15.0,-6.5 L16.0,-5.6 L17.0,-5.3 L18.0,-4.9 L19.0,-5.4 L20.0,-5.3 L21.0,-3.9 L22.0,-2.0 L23.0,-3.9 L24.0,-6.0 L25.0,-7.5 L26.0,-9.0 L27.0,-10.0 L28.0,-9.1 L29.0,-8.4 L30.0,-6.8 L31.0,-7.2 L32.0,-7.5 L33.0,-7.8 L34.0,-8.6 L35.0,-8.8 L36.0,-8.0 L37.0,-6.4 L38.0,-6.4 L39.0,-6.5 L40.0,-7.9 L41.0,-8.4 L42.0,-7.7 L43.0,-6.4 L44.0,-5.8 L45.0,-5.0 L46.0,-5.0 L47.0,-5.6 L48.0,-4.8 L49.0,-4.0 L50.0,-2.9 L51.0,-1.1 L52.0,-0.8 L53.0,-3.8 L54.0,-8.4 L55.0,-9.5 L56.0,-9.9 L57.0,-7.9 L58.0,-7.4 L59.0,-6.8 L60.0,-6.8 L61.0,-7.7 L62.0,-7.7 L63.0,-7.5 L64.0,-6.4 L65.0,-5.0 L66.0,-4.0 L67.0,-8.3 L68.0,-10.9 L69.0,-10.7 L70.0,-10.6 L71.0,-8.5 L72.0,-7.8 L73.0,-6.7 L74.0,-7.5 L75.0,-8.0 L76.0,-7.1 L77.0,-4.9 L78.0,-0.9 L79.0,-0.8 L80.0,-0.8 L81.0,-0.8 L82.0,-0.8 L83.0,-0.9 L84.0,-2.3 L85.0,-4.8 L86.0,-6.7 L87.0,-7.4 L88.0,-8.2 L89.0,-10.3 L90.0,-10.6 L91.0,-9.3 L92.0,-8.6 L93.0,-7.8 L94.0,-7.5 L95.0,-7.9 L96.0,-9.0 L97.0,-9.9 L98.0,-9.6 L99.0,-7.7 L100.0,-6.1 L101.0,-6.0 L102.0,-6.9 L103.0,-8.0 L104.0,-8.8 L105.0,-8.0 L106.0,-6.6 L107.0,-4.9 L108.0,-4.6 L109.0,-4.6 L110.0,-4.4 L111.0,-2.8 L112.0,-0.8 L113.0,-3.2 L114.0,-5.1 L115.0,-6.9 L116.0,-9.4 L117.0,-11.1 L118.0,-11.4 L119.0,-10.5 L120.0,-8.2 L121.0,-7.1 L122.0,-7.6 L123.0,-8.5 L124.0,-8.8 L125.0,-10.0 L126.0,-9.1 L127.0,-8.1 L128.0,-7.2 L129.0,-6.7 L130.0,-7.2 L131.0,-8.0 L132.0,-8.5 L133.0,-8.6 L134.0,-7.2 L135.0,-5.7 L136.0,-5.1 L137.0,-5.8 L138.0,-6.1 L139.0,-5.7 L140.0,-4.1 L141.0,-2.4 L142.0,-0.8 L143.0,-0.8 L144.0,-0.8 L145.0,-0.8 L146.0,-0.8 L147.0,-0.8 L148.0,-0.8 L149.0,-0.9 L150.0,-0.8 L151.0,-0.8 L152.0,-2.6 L153.0,-5.7 L154.0,-7.8 L155.0,-8.8 L156.0,-7.1 L157.0,-7.8 L158.0,-8.9 L159.0,-9.9 L160.0,-9.8 L161.0,-8.8 L162.0,-7.8 L163.0,-6.8 L164.0,-6.3 L165.0,-7.0 L166.0,-8.8 L167.0,-8.7 L168.0,-8.6 L169.0,-7.2 L170.0,-6.3 L171.0,-5.9 L172.0,-6.3 L173.0,-7.8 L174.0,-7.5 L175.0,-6.5 L176.0,-4.8 L177.0,-4.2 L178.0,-3.6 L179.0,-3.2 L180.0,-7.7 L181.0,-10.0 L182.0,-10.2 L183.0,-9.7 L184.0,-8.5 L185.0,-8.9 L186.0,-9.4 L187.0,-10.7 L188.0,-9.7 L189.0,-9.4 L190.0,-8.1 L191.0,-6.7 L192.0,-6.8 L193.0,-8.4 L194.0,-8.9 L195.0,-8.4 L196.0,-8.0 L197.0,-6.5 L198.0,-5.6 L199.0,-5.1 L200.0,-4.9 L201.0,-4.1 L202.0,-1.3 L203.0,-0.8 L204.0,-0.8 L205.0,-0.8 L206.0,-0.8 L207.0,-5.1 L208.0,-10.8 L209.0,-12.3 L210.0,-11.0 L211.0,-9.4 L212.0,-8.0 L213.0,-7.2 L214.0,-8.8 L215.0,-9.8 L216.0,-9.4 L217.0,-8.4 L218.0,-5.8 L219.0,-4.0 L220.0,-2.5 L221.0,-3.6 L222.0,-8.8 L223.0,-11.3 L224.0,-9.4 L225.0,-8.4 L226.0,-6.8 L227.0,-7.1 L228.0,-8.6 L229.0,-9.1 L230.0,-8.1 L231.0,-7.7 L232.0,-6.8 L233.0,-4.5 L234.0,-3.9 L235.0,-2.4 L236.0,-0.8 L237.0,-0.9 L238.0,-0.8 L239.0,-0.9 L240.0,-0.8 L241.0,-0.8 L242.0,-0.8 L243.0,-0.9 L244.0,-1.2 L245.0,-4.6 L246.0,-6.3 L247.0,-6.8 L248.0,-7.1 L249.0,-8.3 L250.0,-9.6 L251.0,-9.2 L252.0,-8.3 L253.0,-7.2 L254.0,-6.6 L255.0,-7.1 L256.0,-8.0 L257.0,-8.6 L258.0,-8.3 L259.0,-7.3 L260.0,-5.9 L261.0,-5.7 L262.0,-5.3 L263.0,-5.9 L264.0,-5.7 L265.0,-4.8 L266.0,-3.8 L267.0,-1.9 L268.0,-5.6 L269.0,-7.1 L270.0,-7.1 L271.0,-8.0 L272.0,-7.7 L273.0,-7.3 L274.0,-5.5 L275.0,-5.1 L276.0,-5.0 L277.0,-6.1 L278.0,-5.2 L279.0,-3.9 L280.0,-0.9 L281.0,-0.8 L282.0,-0.8 L283.0,-0.9 L284.0,-0.9 L285.0,-0.8 L286.0,-0.8 L287.0,-0.9 L288.0,-0.8 L289.0,-0.8 L290.0,-0.8 L291.0,-0.8 L292.0,-0.8 L293.0,-0.8 L294.0,-6.1 L295.0,-7.5 L296.0,-7.6 L297.0,-7.7 L298.0,-7.9 L299.0,-8.7 L300.0,-8.0 L301.0,-7.4 L302.0,-6.6 L303.0,-5.8 L304.0,-5.9 L305.0,-5.0 L306.0,-4.1 L307.0,-1.7 L308.0,-5.3 L309.0,-9.1 L310.0,-8.8 L311.0,-9.3 L312.0,-9.9 L313.0,-10.7 L314.0,-10.4 L315.0,-9.7 L316.0,-7.6 L317.0,-7.1 L318.0,-7.3 L319.0,-8.0 L320.0,-7.4 L321.0,-6.1 L322.0,-3.7 L323.0,-0.8 L324.0,-0.8 L325.0,-0.9 L326.0,-0.8 L327.0,-0.9 L328.0,-0.8 L329.0,-0.8 L330.0,-0.9 L331.0,-0.8 L332.0,-0.8 L333.0,-4.2 L334.0,-8.0 L335.0,-9.5 L336.0,-9.4 L337.0,-8.0 L338.0,-7.0 L339.0,-7.5 L340.0,-8.9 L341.0,-9.1 L342.0,-8.7 L343.0,-7.9 L344.0,-7.0 L345.0,-6.7 L346.0,-7.3 L347.0,-7.8 L348.0,-7.7 L349.0,-7.7 L350.0,-6.8 L351.0,-6.5 L352.0,-5.7 L353.0,-6.0 L354.0,-6.7 L355.0,-6.9 L356.0,-6.6 L357.0,-5.2 L358.0,-3.8 L359.0,-3.0 L360.0,-2.1 L361.0,-0.8 L362.0,-3.9 L363.0,-7.0 L364.0,-7.0 L365.0,-7.5 L366.0,-6.9 L367.0,-7.0 L368.0,-8.5 L369.0,-9.1 L370.0,-9.1 L371.0,-7.3 L372.0,-7.3 L373.0,-6.7 L374.0,-7.2 L375.0,-7.4 L376.0,-8.4 L377.0,-8.4 L378.0,-6.7 L379.0,-6.3 L380.0,-5.5 L381.0,-5.7 L382.0,-6.3 L383.0,-7.2 L384.0,-7.0 L385.0,-5.3 L386.0,-4.6 L387.0,-3.9 L388.0,-3.4 L388.0,3.7 L387.0,3.8 L386.0,4.3 L385.0,5.4 L384.0,6.5 L383.0,6.8 L382.0,7.3 L381.0,6.5 L380.0,5.6 L379.0,5.9 L378.0,7.1 L377.0,7.8 L376.0,8.4 L375.0,8.1 L374.0,7.2 L373.0,6.6 L372.0,7.1 L371.0,8.1 L370.0,8.4 L369.0,8.9 L368.0,8.4 L367.0,8.1 L366.0,6.7 L365.0,6.9 L364.0,7.7 L363.0,6.1 L362.0,3.6 L361.0,0.9 L360.0,1.9 L359.0,2.9 L358.0,3.9 L357.0,4.9 L356.0,6.8 L355.0,6.4 L354.0,6.6 L353.0,5.7 L352.0,5.3 L351.0,5.7 L350.0,7.0 L349.0,7.7 L348.0,8.4 L347.0,8.4 L346.0,7.2 L345.0,6.9 L344.0,7.4 L343.0,8.5 L342.0,9.6 L341.0,10.0 L340.0,9.1 L339.0,7.5 L338.0,7.4 L337.0,8.1 L336.0,8.9 L335.0,9.5 L334.0,6.9 L333.0,4.1 L332.0,1.0 L331.0,0.8 L330.0,0.8 L329.0,0.9 L328.0,0.9 L327.0,0.8 L326.0,0.9 L325.0,0.9 L324.0,0.9 L323.0,0.8 L322.0,3.7 L321.0,6.4 L320.0,7.4 L319.0,7.2 L318.0,6.5 L317.0,6.8 L316.0,8.1 L315.0,9.0 L314.0,10.0 L313.0,10.8 L312.0,10.5 L311.0,8.6 L310.0,8.3 L309.0,8.0 L308.0,5.2 L307.0,1.7 L306.0,4.4 L305.0,5.7 L304.0,5.5 L303.0,6.0 L302.0,6.4 L301.0,7.3 L300.0,9.0 L299.0,8.1 L298.0,7.7 L297.0,7.1 L296.0,7.5 L295.0,7.2 L294.0,6.3 L293.0,0.9 L292.0,0.8 L291.0,0.9 L290.0,0.8 L289.0,0.8 L288.0,0.9 L287.0,0.8 L286.0,0.9 L285.0,0.8 L284.0,0.9 L283.0,0.8 L282.0,0.8 L281.0,0.8 L280.0,0.9 L279.0,3.7 L278.0,5.4 L277.0,6.0 L276.0,5.7 L275.0,5.0 L274.0,6.0 L273.0,7.3 L272.0,8.3 L271.0,8.3 L270.0,7.3 L269.0,6.3 L268.0,5.9 L267.0,2.1 L266.0,3.9 L265.0,5.0 L264.0,6.1 L263.0,6.3 L262.0,5.5 L261.0,5.1 L260.0,6.6 L259.0,7.5 L258.0,8.1 L257.0,7.6 L256.0,7.2 L255.0,6.3 L254.0,6.6 L253.0,7.4 L252.0,7.8 L251.0,9.0 L250.0,9.8 L249.0,8.1 L248.0,7.8 L247.0,6.7 L246.0,6.5 L245.0,5.1 L244.0,1.1 L243.0,0.8 L242.0,0.8 L241.0,0.8 L240.0,0.8 L239.0,0.8 L238.0,0.9 L237.0,0.8 L236.0,0.8 L235.0,2.2 L234.0,3.6 L233.0,4.9 L232.0,5.9 L231.0,7.2 L230.0,9.3 L229.0,8.2 L228.0,7.9 L227.0,7.9 L226.0,7.4 L225.0,7.8 L224.0,9.7 L223.0,11.3 L222.0,9.0 L221.0,3.6 L220.0,2.4 L219.0,4.3 L218.0,5.6 L217.0,7.8 L216.0,9.1 L215.0,8.7 L214.0,8.8 L213.0,7.3 L212.0,7.2 L211.0,8.5 L210.0,9.8 L209.0,11.6 L208.0,11.4 L207.0,5.5 L206.0,0.8 L205.0,0.8 L204.0,0.8 L203.0,0.8 L202.0,1.4 L201.0,4.0 L200.0,4.9 L199.0,4.6 L198.0,5.8 L197.0,7.0 L196.0,8.8 L195.0,9.5 L194.0,8.8 L193.0,7.6 L192.0,7.0 L191.0,7.0 L190.0,7.6 L189.0,9.6 L188.0,11.0 L187.0,10.7 L186.0,9.3 L185.0,7.9 L184.0,7.7 L183.0,8.7 L182.0,11.4 L181.0,9.9 L180.0,7.5 L179.0,2.8 L178.0,3.7 L177.0,3.9 L176.0,5.1 L175.0,6.8 L174.0,7.3 L173.0,7.1 L172.0,7.0 L171.0,5.9 L170.0,6.4 L169.0,6.8 L168.0,7.7 L167.0,8.7 L166.0,7.8 L165.0,7.6 L164.0,6.5 L163.0,7.3 L162.0,7.6 L161.0,9.6 L160.0,9.4 L159.0,8.7 L158.0,8.3 L157.0,8.0 L156.0,7.9 L155.0,8.3 L154.0,7.7 L153.0,6.4 L152.0,2.8 L151.0,0.8 L150.0,0.9 L149.0,0.8 L148.0,0.8 L147.0,0.9 L146.0,0.8 L145.0,0.8 L144.0,0.9 L143.0,0.8 L142.0,0.8 L141.0,2.4 L140.0,4.0 L139.0,5.6 L138.0,6.3 L137.0,5.8 L136.0,5.3 L135.0,5.9 L134.0,7.0 L133.0,7.9 L132.0,9.3 L131.0,8.4 L130.0,6.9 L129.0,6.7 L128.0,7.1 L127.0,8.1 L126.0,8.9 L125.0,9.4 L124.0,8.7 L123.0,8.0 L122.0,7.0 L121.0,7.5 L120.0,8.4 L119.0,10.1 L118.0,10.5 L117.0,11.0 L116.0,9.1 L115.0,6.9 L114.0,5.3 L113.0,3.3 L112.0,0.8 L111.0,2.8 L110.0,4.4 L109.0,4.2 L108.0,4.5 L107.0,5.1 L106.0,6.5 L105.0,7.3 L104.0,8.6 L103.0,8.2 L102.0,7.4 L101.0,6.7 L100.0,6.9 L99.0,8.3 L98.0,8.7 L97.0,8.9 L96.0,9.2 L95.0,8.6 L94.0,6.6 L93.0,7.7 L92.0,8.5 L91.0,9.2 L90.0,9.7 L89.0,9.5 L88.0,8.7 L87.0,8.0 L86.0,6.1 L85.0,5.4 L84.0,2.6 L83.0,0.9 L82.0,0.9 L81.0,0.8 L80.0,0.9 L79.0,0.9 L78.0,0.8 L77.0,4.4 L76.0,7.5 L75.0,8.6 L74.0,6.8 L73.0,7.4 L72.0,7.0 L71.0,8.7 L70.0,9.9 L69.0,11.2 L68.0,11.0 L67.0,8.6 L66.0,3.7 L65.0,4.7 L64.0,6.1 L63.0,8.1 L62.0,7.9 L61.0,7.8 L60.0,7.4 L59.0,6.9 L58.0,7.2 L57.0,7.7 L56.0,8.9 L55.0,9.6 L54.0,8.7 L53.0,3.4 L52.0,0.9 L51.0,1.2 L50.0,2.8 L49.0,4.4 L48.0,5.2 L47.0,5.3 L46.0,5.2 L45.0,4.8 L44.0,5.7 L43.0,6.3 L42.0,7.9 L41.0,8.0 L40.0,7.1 L39.0,6.3 L38.0,5.7 L37.0,6.0 L36.0,8.1 L35.0,8.7 L34.0,8.8 L33.0,9.0 L32.0,7.1 L31.0,6.3 L30.0,7.6 L29.0,8.8 L28.0,9.3 L27.0,10.0 L26.0,9.8 L25.0,7.9 L24.0,5.5 L23.0,3.7 L22.0,1.9 L21.0,4.0 L20.0,4.9 L19.0,5.8 L18.0,5.2 L17.0,4.8 L16.0,5.9 L15.0,6.4 L14.0,7.8 L13.0,7.8 L12.0,7.9 L11.0,6.8 L10.0,5.9 L9.0,6.6 L8.0,7.4 L7.0,8.4 L6.0,9.6 L5.0,7.8 L4.0,3.7 L3.0,0.9 L2.0,0.9 L1.0,0.9 L0.0,0.8Z" fill="#1b2a18"/><rect x="0" y="-1" width="388" height="2" fill="#1b2a18"/></g></svg>
<svg style="position:absolute;left:524px;top:1032.8px;overflow:visible" width="388" height="28"><g transform="translate(0,14)"><path d="M0.0,-0.8 L1.0,-0.9 L2.0,-0.8 L3.0,-0.8 L4.0,-3.6 L5.0,-7.3 L6.0,-10.0 L7.0,-8.7 L8.0,-7.5 L9.0,-6.6 L10.0,-5.8 L11.0,-7.0 L12.0,-7.0 L13.0,-7.9 L14.0,-7.9 L15.0,-6.5 L16.0,-5.6 L17.0,-5.3 L18.0,-4.9 L19.0,-5.4 L20.0,-5.3 L21.0,-3.9 L22.0,-2.0 L23.0,-3.9 L24.0,-6.0 L25.0,-7.5 L26.0,-9.0 L27.0,-10.0 L28.0,-9.1 L29.0,-8.4 L30.0,-6.8 L31.0,-7.2 L32.0,-7.5 L33.0,-7.8 L34.0,-8.6 L35.0,-8.8 L36.0,-8.0 L37.0,-6.4 L38.0,-6.4 L39.0,-6.5 L40.0,-7.9 L41.0,-8.4 L42.0,-7.7 L43.0,-6.4 L44.0,-5.8 L45.0,-5.0 L46.0,-5.0 L47.0,-5.6 L48.0,-4.8 L49.0,-4.0 L50.0,-2.9 L51.0,-1.1 L52.0,-0.8 L53.0,-3.8 L54.0,-8.4 L55.0,-9.5 L56.0,-9.9 L57.0,-7.9 L58.0,-7.4 L59.0,-6.8 L60.0,-6.8 L61.0,-7.7 L62.0,-7.7 L63.0,-7.5 L64.0,-6.4 L65.0,-5.0 L66.0,-4.0 L67.0,-8.3 L68.0,-10.9 L69.0,-10.7 L70.0,-10.6 L71.0,-8.5 L72.0,-7.8 L73.0,-6.7 L74.0,-7.5 L75.0,-8.0 L76.0,-7.1 L77.0,-4.9 L78.0,-0.9 L79.0,-0.8 L80.0,-0.8 L81.0,-0.8 L82.0,-0.8 L83.0,-0.9 L84.0,-2.3 L85.0,-4.8 L86.0,-6.7 L87.0,-7.4 L88.0,-8.2 L89.0,-10.3 L90.0,-10.6 L91.0,-9.3 L92.0,-8.6 L93.0,-7.8 L94.0,-7.5 L95.0,-7.9 L96.0,-9.0 L97.0,-9.9 L98.0,-9.6 L99.0,-7.7 L100.0,-6.1 L101.0,-6.0 L102.0,-6.9 L103.0,-8.0 L104.0,-8.8 L105.0,-8.0 L106.0,-6.6 L107.0,-4.9 L108.0,-4.6 L109.0,-4.6 L110.0,-4.4 L111.0,-2.8 L112.0,-0.8 L113.0,-3.2 L114.0,-5.1 L115.0,-6.9 L116.0,-9.4 L117.0,-11.1 L118.0,-11.4 L119.0,-10.5 L120.0,-8.2 L121.0,-7.1 L122.0,-7.6 L123.0,-8.5 L124.0,-8.8 L125.0,-10.0 L126.0,-9.1 L127.0,-8.1 L128.0,-7.2 L129.0,-6.7 L130.0,-7.2 L131.0,-8.0 L132.0,-8.5 L133.0,-8.6 L134.0,-7.2 L135.0,-5.7 L136.0,-5.1 L137.0,-5.8 L138.0,-6.1 L139.0,-5.7 L140.0,-4.1 L141.0,-2.4 L142.0,-0.8 L143.0,-0.8 L144.0,-0.8 L145.0,-0.8 L146.0,-0.8 L147.0,-0.8 L148.0,-0.8 L149.0,-0.9 L150.0,-0.8 L151.0,-0.8 L152.0,-2.6 L153.0,-5.7 L154.0,-7.8 L155.0,-8.8 L156.0,-7.1 L157.0,-7.8 L158.0,-8.9 L159.0,-9.9 L160.0,-9.8 L161.0,-8.8 L162.0,-7.8 L163.0,-6.8 L164.0,-6.3 L165.0,-7.0 L166.0,-8.8 L167.0,-8.7 L168.0,-8.6 L169.0,-7.2 L170.0,-6.3 L171.0,-5.9 L172.0,-6.3 L173.0,-7.8 L174.0,-7.5 L175.0,-6.5 L176.0,-4.8 L177.0,-4.2 L178.0,-3.6 L179.0,-3.2 L180.0,-7.7 L181.0,-10.0 L182.0,-10.2 L183.0,-9.7 L184.0,-8.5 L185.0,-8.9 L186.0,-9.4 L187.0,-10.7 L188.0,-9.7 L189.0,-9.4 L190.0,-8.1 L191.0,-6.7 L192.0,-6.8 L193.0,-8.4 L194.0,-8.9 L195.0,-8.4 L196.0,-8.0 L197.0,-6.5 L198.0,-5.6 L199.0,-5.1 L200.0,-4.9 L201.0,-4.1 L202.0,-1.3 L203.0,-0.8 L204.0,-0.8 L205.0,-0.8 L206.0,-0.8 L207.0,-5.1 L208.0,-10.8 L209.0,-12.3 L210.0,-11.0 L211.0,-9.4 L212.0,-8.0 L213.0,-7.2 L214.0,-8.8 L215.0,-9.8 L216.0,-9.4 L217.0,-8.4 L218.0,-5.8 L219.0,-4.0 L220.0,-2.5 L221.0,-3.6 L222.0,-8.8 L223.0,-11.3 L224.0,-9.4 L225.0,-8.4 L226.0,-6.8 L227.0,-7.1 L228.0,-8.6 L229.0,-9.1 L230.0,-8.1 L231.0,-7.7 L232.0,-6.8 L233.0,-4.5 L234.0,-3.9 L235.0,-2.4 L236.0,-0.8 L237.0,-0.9 L238.0,-0.8 L239.0,-0.9 L240.0,-0.8 L241.0,-0.8 L242.0,-0.8 L243.0,-0.9 L244.0,-1.2 L245.0,-4.6 L246.0,-6.3 L247.0,-6.8 L248.0,-7.1 L249.0,-8.3 L250.0,-9.6 L251.0,-9.2 L252.0,-8.3 L253.0,-7.2 L254.0,-6.6 L255.0,-7.1 L256.0,-8.0 L257.0,-8.6 L258.0,-8.3 L259.0,-7.3 L260.0,-5.9 L261.0,-5.7 L262.0,-5.3 L263.0,-5.9 L264.0,-5.7 L265.0,-4.8 L266.0,-3.8 L267.0,-1.9 L268.0,-5.6 L269.0,-7.1 L270.0,-7.1 L271.0,-8.0 L272.0,-7.7 L273.0,-7.3 L274.0,-5.5 L275.0,-5.1 L276.0,-5.0 L277.0,-6.1 L278.0,-5.2 L279.0,-3.9 L280.0,-0.9 L281.0,-0.8 L282.0,-0.8 L283.0,-0.9 L284.0,-0.9 L285.0,-0.8 L286.0,-0.8 L287.0,-0.9 L288.0,-0.8 L289.0,-0.8 L290.0,-0.8 L291.0,-0.8 L292.0,-0.8 L293.0,-0.8 L294.0,-6.1 L295.0,-7.5 L296.0,-7.6 L297.0,-7.7 L298.0,-7.9 L299.0,-8.7 L300.0,-8.0 L301.0,-7.4 L302.0,-6.6 L303.0,-5.8 L304.0,-5.9 L305.0,-5.0 L306.0,-4.1 L307.0,-1.7 L308.0,-5.3 L309.0,-9.1 L310.0,-8.8 L311.0,-9.3 L312.0,-9.9 L313.0,-10.7 L314.0,-10.4 L315.0,-9.7 L316.0,-7.6 L317.0,-7.1 L318.0,-7.3 L319.0,-8.0 L320.0,-7.4 L321.0,-6.1 L322.0,-3.7 L323.0,-0.8 L324.0,-0.8 L325.0,-0.9 L326.0,-0.8 L327.0,-0.9 L328.0,-0.8 L329.0,-0.8 L330.0,-0.9 L331.0,-0.8 L332.0,-0.8 L333.0,-4.2 L334.0,-8.0 L335.0,-9.5 L336.0,-9.4 L337.0,-8.0 L338.0,-7.0 L339.0,-7.5 L340.0,-8.9 L341.0,-9.1 L342.0,-8.7 L343.0,-7.9 L344.0,-7.0 L345.0,-6.7 L346.0,-7.3 L347.0,-7.8 L348.0,-7.7 L349.0,-7.7 L350.0,-6.8 L351.0,-6.5 L352.0,-5.7 L353.0,-6.0 L354.0,-6.7 L355.0,-6.9 L356.0,-6.6 L357.0,-5.2 L358.0,-3.8 L359.0,-3.0 L360.0,-2.1 L361.0,-0.8 L362.0,-3.9 L363.0,-7.0 L364.0,-7.0 L365.0,-7.5 L366.0,-6.9 L367.0,-7.0 L368.0,-8.5 L369.0,-9.1 L370.0,-9.1 L371.0,-7.3 L372.0,-7.3 L373.0,-6.7 L374.0,-7.2 L375.0,-7.4 L376.0,-8.4 L377.0,-8.4 L378.0,-6.7 L379.0,-6.3 L380.0,-5.5 L381.0,-5.7 L382.0,-6.3 L383.0,-7.2 L384.0,-7.0 L385.0,-5.3 L386.0,-4.6 L387.0,-3.9 L388.0,-3.4 L388.0,3.7 L387.0,3.8 L386.0,4.3 L385.0,5.4 L384.0,6.5 L383.0,6.8 L382.0,7.3 L381.0,6.5 L380.0,5.6 L379.0,5.9 L378.0,7.1 L377.0,7.8 L376.0,8.4 L375.0,8.1 L374.0,7.2 L373.0,6.6 L372.0,7.1 L371.0,8.1 L370.0,8.4 L369.0,8.9 L368.0,8.4 L367.0,8.1 L366.0,6.7 L365.0,6.9 L364.0,7.7 L363.0,6.1 L362.0,3.6 L361.0,0.9 L360.0,1.9 L359.0,2.9 L358.0,3.9 L357.0,4.9 L356.0,6.8 L355.0,6.4 L354.0,6.6 L353.0,5.7 L352.0,5.3 L351.0,5.7 L350.0,7.0 L349.0,7.7 L348.0,8.4 L347.0,8.4 L346.0,7.2 L345.0,6.9 L344.0,7.4 L343.0,8.5 L342.0,9.6 L341.0,10.0 L340.0,9.1 L339.0,7.5 L338.0,7.4 L337.0,8.1 L336.0,8.9 L335.0,9.5 L334.0,6.9 L333.0,4.1 L332.0,1.0 L331.0,0.8 L330.0,0.8 L329.0,0.9 L328.0,0.9 L327.0,0.8 L326.0,0.9 L325.0,0.9 L324.0,0.9 L323.0,0.8 L322.0,3.7 L321.0,6.4 L320.0,7.4 L319.0,7.2 L318.0,6.5 L317.0,6.8 L316.0,8.1 L315.0,9.0 L314.0,10.0 L313.0,10.8 L312.0,10.5 L311.0,8.6 L310.0,8.3 L309.0,8.0 L308.0,5.2 L307.0,1.7 L306.0,4.4 L305.0,5.7 L304.0,5.5 L303.0,6.0 L302.0,6.4 L301.0,7.3 L300.0,9.0 L299.0,8.1 L298.0,7.7 L297.0,7.1 L296.0,7.5 L295.0,7.2 L294.0,6.3 L293.0,0.9 L292.0,0.8 L291.0,0.9 L290.0,0.8 L289.0,0.8 L288.0,0.9 L287.0,0.8 L286.0,0.9 L285.0,0.8 L284.0,0.9 L283.0,0.8 L282.0,0.8 L281.0,0.8 L280.0,0.9 L279.0,3.7 L278.0,5.4 L277.0,6.0 L276.0,5.7 L275.0,5.0 L274.0,6.0 L273.0,7.3 L272.0,8.3 L271.0,8.3 L270.0,7.3 L269.0,6.3 L268.0,5.9 L267.0,2.1 L266.0,3.9 L265.0,5.0 L264.0,6.1 L263.0,6.3 L262.0,5.5 L261.0,5.1 L260.0,6.6 L259.0,7.5 L258.0,8.1 L257.0,7.6 L256.0,7.2 L255.0,6.3 L254.0,6.6 L253.0,7.4 L252.0,7.8 L251.0,9.0 L250.0,9.8 L249.0,8.1 L248.0,7.8 L247.0,6.7 L246.0,6.5 L245.0,5.1 L244.0,1.1 L243.0,0.8 L242.0,0.8 L241.0,0.8 L240.0,0.8 L239.0,0.8 L238.0,0.9 L237.0,0.8 L236.0,0.8 L235.0,2.2 L234.0,3.6 L233.0,4.9 L232.0,5.9 L231.0,7.2 L230.0,9.3 L229.0,8.2 L228.0,7.9 L227.0,7.9 L226.0,7.4 L225.0,7.8 L224.0,9.7 L223.0,11.3 L222.0,9.0 L221.0,3.6 L220.0,2.4 L219.0,4.3 L218.0,5.6 L217.0,7.8 L216.0,9.1 L215.0,8.7 L214.0,8.8 L213.0,7.3 L212.0,7.2 L211.0,8.5 L210.0,9.8 L209.0,11.6 L208.0,11.4 L207.0,5.5 L206.0,0.8 L205.0,0.8 L204.0,0.8 L203.0,0.8 L202.0,1.4 L201.0,4.0 L200.0,4.9 L199.0,4.6 L198.0,5.8 L197.0,7.0 L196.0,8.8 L195.0,9.5 L194.0,8.8 L193.0,7.6 L192.0,7.0 L191.0,7.0 L190.0,7.6 L189.0,9.6 L188.0,11.0 L187.0,10.7 L186.0,9.3 L185.0,7.9 L184.0,7.7 L183.0,8.7 L182.0,11.4 L181.0,9.9 L180.0,7.5 L179.0,2.8 L178.0,3.7 L177.0,3.9 L176.0,5.1 L175.0,6.8 L174.0,7.3 L173.0,7.1 L172.0,7.0 L171.0,5.9 L170.0,6.4 L169.0,6.8 L168.0,7.7 L167.0,8.7 L166.0,7.8 L165.0,7.6 L164.0,6.5 L163.0,7.3 L162.0,7.6 L161.0,9.6 L160.0,9.4 L159.0,8.7 L158.0,8.3 L157.0,8.0 L156.0,7.9 L155.0,8.3 L154.0,7.7 L153.0,6.4 L152.0,2.8 L151.0,0.8 L150.0,0.9 L149.0,0.8 L148.0,0.8 L147.0,0.9 L146.0,0.8 L145.0,0.8 L144.0,0.9 L143.0,0.8 L142.0,0.8 L141.0,2.4 L140.0,4.0 L139.0,5.6 L138.0,6.3 L137.0,5.8 L136.0,5.3 L135.0,5.9 L134.0,7.0 L133.0,7.9 L132.0,9.3 L131.0,8.4 L130.0,6.9 L129.0,6.7 L128.0,7.1 L127.0,8.1 L126.0,8.9 L125.0,9.4 L124.0,8.7 L123.0,8.0 L122.0,7.0 L121.0,7.5 L120.0,8.4 L119.0,10.1 L118.0,10.5 L117.0,11.0 L116.0,9.1 L115.0,6.9 L114.0,5.3 L113.0,3.3 L112.0,0.8 L111.0,2.8 L110.0,4.4 L109.0,4.2 L108.0,4.5 L107.0,5.1 L106.0,6.5 L105.0,7.3 L104.0,8.6 L103.0,8.2 L102.0,7.4 L101.0,6.7 L100.0,6.9 L99.0,8.3 L98.0,8.7 L97.0,8.9 L96.0,9.2 L95.0,8.6 L94.0,6.6 L93.0,7.7 L92.0,8.5 L91.0,9.2 L90.0,9.7 L89.0,9.5 L88.0,8.7 L87.0,8.0 L86.0,6.1 L85.0,5.4 L84.0,2.6 L83.0,0.9 L82.0,0.9 L81.0,0.8 L80.0,0.9 L79.0,0.9 L78.0,0.8 L77.0,4.4 L76.0,7.5 L75.0,8.6 L74.0,6.8 L73.0,7.4 L72.0,7.0 L71.0,8.7 L70.0,9.9 L69.0,11.2 L68.0,11.0 L67.0,8.6 L66.0,3.7 L65.0,4.7 L64.0,6.1 L63.0,8.1 L62.0,7.9 L61.0,7.8 L60.0,7.4 L59.0,6.9 L58.0,7.2 L57.0,7.7 L56.0,8.9 L55.0,9.6 L54.0,8.7 L53.0,3.4 L52.0,0.9 L51.0,1.2 L50.0,2.8 L49.0,4.4 L48.0,5.2 L47.0,5.3 L46.0,5.2 L45.0,4.8 L44.0,5.7 L43.0,6.3 L42.0,7.9 L41.0,8.0 L40.0,7.1 L39.0,6.3 L38.0,5.7 L37.0,6.0 L36.0,8.1 L35.0,8.7 L34.0,8.8 L33.0,9.0 L32.0,7.1 L31.0,6.3 L30.0,7.6 L29.0,8.8 L28.0,9.3 L27.0,10.0 L26.0,9.8 L25.0,7.9 L24.0,5.5 L23.0,3.7 L22.0,1.9 L21.0,4.0 L20.0,4.9 L19.0,5.8 L18.0,5.2 L17.0,4.8 L16.0,5.9 L15.0,6.4 L14.0,7.8 L13.0,7.8 L12.0,7.9 L11.0,6.8 L10.0,5.9 L9.0,6.6 L8.0,7.4 L7.0,8.4 L6.0,9.6 L5.0,7.8 L4.0,3.7 L3.0,0.9 L2.0,0.9 L1.0,0.9 L0.0,0.8Z" fill="#1b2a18"/><rect x="0" y="-1" width="388" height="2" fill="#1b2a18"/></g></svg>
<div style="left:522px;top:960px;width:390px;height:32px;overflow:hidden;"><div class="t" style="left:7px;top:8px;font-size:19.5px;letter-spacing:0.9px;color:#1b3514;-webkit-text-stroke:0.25px #1b3514;">HS1_120_Ebm_Lifting_Lead</div></div>
<div style="left:1043px;top:960px;width:369px;height:104px;background:#7dfb5b;"></div>
<div style="left:1043px;top:960px;width:2px;height:104px;background:#3f9a2e;"></div>
<div style="left:1043px;top:992px;width:369px;height:2px;background:#3f9a2e;"></div>
<svg style="position:absolute;left:1045px;top:996.5px;overflow:visible" width="367" height="28"><g transform="translate(0,14)"><path d="M0.0,-0.8 L1.0,-0.9 L2.0,-0.8 L3.0,-0.8 L4.0,-3.6 L5.0,-7.3 L6.0,-10.0 L7.0,-8.7 L8.0,-7.5 L9.0,-6.6 L10.0,-5.8 L11.0,-7.0 L12.0,-7.0 L13.0,-7.9 L14.0,-7.9 L15.0,-6.5 L16.0,-5.6 L17.0,-5.3 L18.0,-4.9 L19.0,-5.4 L20.0,-5.3 L21.0,-3.9 L22.0,-2.0 L23.0,-3.9 L24.0,-6.0 L25.0,-7.5 L26.0,-9.0 L27.0,-10.0 L28.0,-9.1 L29.0,-8.4 L30.0,-6.8 L31.0,-7.2 L32.0,-7.5 L33.0,-7.8 L34.0,-8.6 L35.0,-8.8 L36.0,-8.0 L37.0,-6.4 L38.0,-6.4 L39.0,-6.5 L40.0,-7.9 L41.0,-8.4 L42.0,-7.7 L43.0,-6.4 L44.0,-5.8 L45.0,-5.0 L46.0,-5.0 L47.0,-5.6 L48.0,-4.8 L49.0,-4.0 L50.0,-2.9 L51.0,-1.1 L52.0,-0.8 L53.0,-3.8 L54.0,-8.4 L55.0,-9.5 L56.0,-9.9 L57.0,-7.9 L58.0,-7.4 L59.0,-6.8 L60.0,-6.8 L61.0,-7.7 L62.0,-7.7 L63.0,-7.5 L64.0,-6.4 L65.0,-5.0 L66.0,-4.0 L67.0,-8.3 L68.0,-10.9 L69.0,-10.7 L70.0,-10.6 L71.0,-8.5 L72.0,-7.8 L73.0,-6.7 L74.0,-7.5 L75.0,-8.0 L76.0,-7.1 L77.0,-4.9 L78.0,-0.9 L79.0,-0.8 L80.0,-0.8 L81.0,-0.8 L82.0,-0.8 L83.0,-0.9 L84.0,-2.3 L85.0,-4.8 L86.0,-6.7 L87.0,-7.4 L88.0,-8.2 L89.0,-10.3 L90.0,-10.6 L91.0,-9.3 L92.0,-8.6 L93.0,-7.8 L94.0,-7.5 L95.0,-7.9 L96.0,-9.0 L97.0,-9.9 L98.0,-9.6 L99.0,-7.7 L100.0,-6.1 L101.0,-6.0 L102.0,-6.9 L103.0,-8.0 L104.0,-8.8 L105.0,-8.0 L106.0,-6.6 L107.0,-4.9 L108.0,-4.6 L109.0,-4.6 L110.0,-4.4 L111.0,-2.8 L112.0,-0.8 L113.0,-3.2 L114.0,-5.1 L115.0,-6.9 L116.0,-9.4 L117.0,-11.1 L118.0,-11.4 L119.0,-10.5 L120.0,-8.2 L121.0,-7.1 L122.0,-7.6 L123.0,-8.5 L124.0,-8.8 L125.0,-10.0 L126.0,-9.1 L127.0,-8.1 L128.0,-7.2 L129.0,-6.7 L130.0,-7.2 L131.0,-8.0 L132.0,-8.5 L133.0,-8.6 L134.0,-7.2 L135.0,-5.7 L136.0,-5.1 L137.0,-5.8 L138.0,-6.1 L139.0,-5.7 L140.0,-4.1 L141.0,-2.4 L142.0,-0.8 L143.0,-0.8 L144.0,-0.8 L145.0,-0.8 L146.0,-0.8 L147.0,-0.8 L148.0,-0.8 L149.0,-0.9 L150.0,-0.8 L151.0,-0.8 L152.0,-2.6 L153.0,-5.7 L154.0,-7.8 L155.0,-8.8 L156.0,-7.1 L157.0,-7.8 L158.0,-8.9 L159.0,-9.9 L160.0,-9.8 L161.0,-8.8 L162.0,-7.8 L163.0,-6.8 L164.0,-6.3 L165.0,-7.0 L166.0,-8.8 L167.0,-8.7 L168.0,-8.6 L169.0,-7.2 L170.0,-6.3 L171.0,-5.9 L172.0,-6.3 L173.0,-7.8 L174.0,-7.5 L175.0,-6.5 L176.0,-4.8 L177.0,-4.2 L178.0,-3.6 L179.0,-3.2 L180.0,-7.7 L181.0,-10.0 L182.0,-10.2 L183.0,-9.7 L184.0,-8.5 L185.0,-8.9 L186.0,-9.4 L187.0,-10.7 L188.0,-9.7 L189.0,-9.4 L190.0,-8.1 L191.0,-6.7 L192.0,-6.8 L193.0,-8.4 L194.0,-8.9 L195.0,-8.4 L196.0,-8.0 L197.0,-6.5 L198.0,-5.6 L199.0,-5.1 L200.0,-4.9 L201.0,-4.1 L202.0,-1.3 L203.0,-0.8 L204.0,-0.8 L205.0,-0.8 L206.0,-0.8 L207.0,-5.1 L208.0,-10.8 L209.0,-12.3 L210.0,-11.0 L211.0,-9.4 L212.0,-8.0 L213.0,-7.2 L214.0,-8.8 L215.0,-9.8 L216.0,-9.4 L217.0,-8.4 L218.0,-5.8 L219.0,-4.0 L220.0,-2.5 L221.0,-3.6 L222.0,-8.8 L223.0,-11.3 L224.0,-9.4 L225.0,-8.4 L226.0,-6.8 L227.0,-7.1 L228.0,-8.6 L229.0,-9.1 L230.0,-8.1 L231.0,-7.7 L232.0,-6.8 L233.0,-4.5 L234.0,-3.9 L235.0,-2.4 L236.0,-0.8 L237.0,-0.9 L238.0,-0.8 L239.0,-0.9 L240.0,-0.8 L241.0,-0.8 L242.0,-0.8 L243.0,-0.9 L244.0,-1.2 L245.0,-4.6 L246.0,-6.3 L247.0,-6.8 L248.0,-7.1 L249.0,-8.3 L250.0,-9.6 L251.0,-9.2 L252.0,-8.3 L253.0,-7.2 L254.0,-6.6 L255.0,-7.1 L256.0,-8.0 L257.0,-8.6 L258.0,-8.3 L259.0,-7.3 L260.0,-5.9 L261.0,-5.7 L262.0,-5.3 L263.0,-5.9 L264.0,-5.7 L265.0,-4.8 L266.0,-3.8 L267.0,-1.9 L268.0,-5.6 L269.0,-7.1 L270.0,-7.1 L271.0,-8.0 L272.0,-7.7 L273.0,-7.3 L274.0,-5.5 L275.0,-5.1 L276.0,-5.0 L277.0,-6.1 L278.0,-5.2 L279.0,-3.9 L280.0,-0.9 L281.0,-0.8 L282.0,-0.8 L283.0,-0.9 L284.0,-0.9 L285.0,-0.8 L286.0,-0.8 L287.0,-0.9 L288.0,-0.8 L289.0,-0.8 L290.0,-0.8 L291.0,-0.8 L292.0,-0.8 L293.0,-0.8 L294.0,-6.1 L295.0,-7.5 L296.0,-7.6 L297.0,-7.7 L298.0,-7.9 L299.0,-8.7 L300.0,-8.0 L301.0,-7.4 L302.0,-6.6 L303.0,-5.8 L304.0,-5.9 L305.0,-5.0 L306.0,-4.1 L307.0,-1.7 L308.0,-5.3 L309.0,-9.1 L310.0,-8.8 L311.0,-9.3 L312.0,-9.9 L313.0,-10.7 L314.0,-10.4 L315.0,-9.7 L316.0,-7.6 L317.0,-7.1 L318.0,-7.3 L319.0,-8.0 L320.0,-7.4 L321.0,-6.1 L322.0,-3.7 L323.0,-0.8 L324.0,-0.8 L325.0,-0.9 L326.0,-0.8 L327.0,-0.9 L328.0,-0.8 L329.0,-0.8 L330.0,-0.9 L331.0,-0.8 L332.0,-0.8 L333.0,-4.2 L334.0,-8.0 L335.0,-9.5 L336.0,-9.4 L337.0,-8.0 L338.0,-7.0 L339.0,-7.5 L340.0,-8.9 L341.0,-9.1 L342.0,-8.7 L343.0,-7.9 L344.0,-7.0 L345.0,-6.7 L346.0,-7.3 L347.0,-7.8 L348.0,-7.7 L349.0,-7.7 L350.0,-6.8 L351.0,-6.5 L352.0,-5.7 L353.0,-6.0 L354.0,-6.7 L355.0,-6.9 L356.0,-6.6 L357.0,-5.2 L358.0,-3.8 L359.0,-3.0 L360.0,-2.1 L361.0,-0.8 L362.0,-3.9 L363.0,-7.0 L364.0,-7.0 L365.0,-7.5 L366.0,-6.9 L367.0,-7.0 L367.0,8.1 L366.0,6.7 L365.0,6.9 L364.0,7.7 L363.0,6.1 L362.0,3.6 L361.0,0.9 L360.0,1.9 L359.0,2.9 L358.0,3.9 L357.0,4.9 L356.0,6.8 L355.0,6.4 L354.0,6.6 L353.0,5.7 L352.0,5.3 L351.0,5.7 L350.0,7.0 L349.0,7.7 L348.0,8.4 L347.0,8.4 L346.0,7.2 L345.0,6.9 L344.0,7.4 L343.0,8.5 L342.0,9.6 L341.0,10.0 L340.0,9.1 L339.0,7.5 L338.0,7.4 L337.0,8.1 L336.0,8.9 L335.0,9.5 L334.0,6.9 L333.0,4.1 L332.0,1.0 L331.0,0.8 L330.0,0.8 L329.0,0.9 L328.0,0.9 L327.0,0.8 L326.0,0.9 L325.0,0.9 L324.0,0.9 L323.0,0.8 L322.0,3.7 L321.0,6.4 L320.0,7.4 L319.0,7.2 L318.0,6.5 L317.0,6.8 L316.0,8.1 L315.0,9.0 L314.0,10.0 L313.0,10.8 L312.0,10.5 L311.0,8.6 L310.0,8.3 L309.0,8.0 L308.0,5.2 L307.0,1.7 L306.0,4.4 L305.0,5.7 L304.0,5.5 L303.0,6.0 L302.0,6.4 L301.0,7.3 L300.0,9.0 L299.0,8.1 L298.0,7.7 L297.0,7.1 L296.0,7.5 L295.0,7.2 L294.0,6.3 L293.0,0.9 L292.0,0.8 L291.0,0.9 L290.0,0.8 L289.0,0.8 L288.0,0.9 L287.0,0.8 L286.0,0.9 L285.0,0.8 L284.0,0.9 L283.0,0.8 L282.0,0.8 L281.0,0.8 L280.0,0.9 L279.0,3.7 L278.0,5.4 L277.0,6.0 L276.0,5.7 L275.0,5.0 L274.0,6.0 L273.0,7.3 L272.0,8.3 L271.0,8.3 L270.0,7.3 L269.0,6.3 L268.0,5.9 L267.0,2.1 L266.0,3.9 L265.0,5.0 L264.0,6.1 L263.0,6.3 L262.0,5.5 L261.0,5.1 L260.0,6.6 L259.0,7.5 L258.0,8.1 L257.0,7.6 L256.0,7.2 L255.0,6.3 L254.0,6.6 L253.0,7.4 L252.0,7.8 L251.0,9.0 L250.0,9.8 L249.0,8.1 L248.0,7.8 L247.0,6.7 L246.0,6.5 L245.0,5.1 L244.0,1.1 L243.0,0.8 L242.0,0.8 L241.0,0.8 L240.0,0.8 L239.0,0.8 L238.0,0.9 L237.0,0.8 L236.0,0.8 L235.0,2.2 L234.0,3.6 L233.0,4.9 L232.0,5.9 L231.0,7.2 L230.0,9.3 L229.0,8.2 L228.0,7.9 L227.0,7.9 L226.0,7.4 L225.0,7.8 L224.0,9.7 L223.0,11.3 L222.0,9.0 L221.0,3.6 L220.0,2.4 L219.0,4.3 L218.0,5.6 L217.0,7.8 L216.0,9.1 L215.0,8.7 L214.0,8.8 L213.0,7.3 L212.0,7.2 L211.0,8.5 L210.0,9.8 L209.0,11.6 L208.0,11.4 L207.0,5.5 L206.0,0.8 L205.0,0.8 L204.0,0.8 L203.0,0.8 L202.0,1.4 L201.0,4.0 L200.0,4.9 L199.0,4.6 L198.0,5.8 L197.0,7.0 L196.0,8.8 L195.0,9.5 L194.0,8.8 L193.0,7.6 L192.0,7.0 L191.0,7.0 L190.0,7.6 L189.0,9.6 L188.0,11.0 L187.0,10.7 L186.0,9.3 L185.0,7.9 L184.0,7.7 L183.0,8.7 L182.0,11.4 L181.0,9.9 L180.0,7.5 L179.0,2.8 L178.0,3.7 L177.0,3.9 L176.0,5.1 L175.0,6.8 L174.0,7.3 L173.0,7.1 L172.0,7.0 L171.0,5.9 L170.0,6.4 L169.0,6.8 L168.0,7.7 L167.0,8.7 L166.0,7.8 L165.0,7.6 L164.0,6.5 L163.0,7.3 L162.0,7.6 L161.0,9.6 L160.0,9.4 L159.0,8.7 L158.0,8.3 L157.0,8.0 L156.0,7.9 L155.0,8.3 L154.0,7.7 L153.0,6.4 L152.0,2.8 L151.0,0.8 L150.0,0.9 L149.0,0.8 L148.0,0.8 L147.0,0.9 L146.0,0.8 L145.0,0.8 L144.0,0.9 L143.0,0.8 L142.0,0.8 L141.0,2.4 L140.0,4.0 L139.0,5.6 L138.0,6.3 L137.0,5.8 L136.0,5.3 L135.0,5.9 L134.0,7.0 L133.0,7.9 L132.0,9.3 L131.0,8.4 L130.0,6.9 L129.0,6.7 L128.0,7.1 L127.0,8.1 L126.0,8.9 L125.0,9.4 L124.0,8.7 L123.0,8.0 L122.0,7.0 L121.0,7.5 L120.0,8.4 L119.0,10.1 L118.0,10.5 L117.0,11.0 L116.0,9.1 L115.0,6.9 L114.0,5.3 L113.0,3.3 L112.0,0.8 L111.0,2.8 L110.0,4.4 L109.0,4.2 L108.0,4.5 L107.0,5.1 L106.0,6.5 L105.0,7.3 L104.0,8.6 L103.0,8.2 L102.0,7.4 L101.0,6.7 L100.0,6.9 L99.0,8.3 L98.0,8.7 L97.0,8.9 L96.0,9.2 L95.0,8.6 L94.0,6.6 L93.0,7.7 L92.0,8.5 L91.0,9.2 L90.0,9.7 L89.0,9.5 L88.0,8.7 L87.0,8.0 L86.0,6.1 L85.0,5.4 L84.0,2.6 L83.0,0.9 L82.0,0.9 L81.0,0.8 L80.0,0.9 L79.0,0.9 L78.0,0.8 L77.0,4.4 L76.0,7.5 L75.0,8.6 L74.0,6.8 L73.0,7.4 L72.0,7.0 L71.0,8.7 L70.0,9.9 L69.0,11.2 L68.0,11.0 L67.0,8.6 L66.0,3.7 L65.0,4.7 L64.0,6.1 L63.0,8.1 L62.0,7.9 L61.0,7.8 L60.0,7.4 L59.0,6.9 L58.0,7.2 L57.0,7.7 L56.0,8.9 L55.0,9.6 L54.0,8.7 L53.0,3.4 L52.0,0.9 L51.0,1.2 L50.0,2.8 L49.0,4.4 L48.0,5.2 L47.0,5.3 L46.0,5.2 L45.0,4.8 L44.0,5.7 L43.0,6.3 L42.0,7.9 L41.0,8.0 L40.0,7.1 L39.0,6.3 L38.0,5.7 L37.0,6.0 L36.0,8.1 L35.0,8.7 L34.0,8.8 L33.0,9.0 L32.0,7.1 L31.0,6.3 L30.0,7.6 L29.0,8.8 L28.0,9.3 L27.0,10.0 L26.0,9.8 L25.0,7.9 L24.0,5.5 L23.0,3.7 L22.0,1.9 L21.0,4.0 L20.0,4.9 L19.0,5.8 L18.0,5.2 L17.0,4.8 L16.0,5.9 L15.0,6.4 L14.0,7.8 L13.0,7.8 L12.0,7.9 L11.0,6.8 L10.0,5.9 L9.0,6.6 L8.0,7.4 L7.0,8.4 L6.0,9.6 L5.0,7.8 L4.0,3.7 L3.0,0.9 L2.0,0.9 L1.0,0.9 L0.0,0.8Z" fill="#1b2a18"/><rect x="0" y="-1" width="367" height="2" fill="#1b2a18"/></g></svg>
<svg style="position:absolute;left:1045px;top:1032.8px;overflow:visible" width="367" height="28"><g transform="translate(0,14)"><path d="M0.0,-0.8 L1.0,-0.9 L2.0,-0.8 L3.0,-0.8 L4.0,-3.6 L5.0,-7.3 L6.0,-10.0 L7.0,-8.7 L8.0,-7.5 L9.0,-6.6 L10.0,-5.8 L11.0,-7.0 L12.0,-7.0 L13.0,-7.9 L14.0,-7.9 L15.0,-6.5 L16.0,-5.6 L17.0,-5.3 L18.0,-4.9 L19.0,-5.4 L20.0,-5.3 L21.0,-3.9 L22.0,-2.0 L23.0,-3.9 L24.0,-6.0 L25.0,-7.5 L26.0,-9.0 L27.0,-10.0 L28.0,-9.1 L29.0,-8.4 L30.0,-6.8 L31.0,-7.2 L32.0,-7.5 L33.0,-7.8 L34.0,-8.6 L35.0,-8.8 L36.0,-8.0 L37.0,-6.4 L38.0,-6.4 L39.0,-6.5 L40.0,-7.9 L41.0,-8.4 L42.0,-7.7 L43.0,-6.4 L44.0,-5.8 L45.0,-5.0 L46.0,-5.0 L47.0,-5.6 L48.0,-4.8 L49.0,-4.0 L50.0,-2.9 L51.0,-1.1 L52.0,-0.8 L53.0,-3.8 L54.0,-8.4 L55.0,-9.5 L56.0,-9.9 L57.0,-7.9 L58.0,-7.4 L59.0,-6.8 L60.0,-6.8 L61.0,-7.7 L62.0,-7.7 L63.0,-7.5 L64.0,-6.4 L65.0,-5.0 L66.0,-4.0 L67.0,-8.3 L68.0,-10.9 L69.0,-10.7 L70.0,-10.6 L71.0,-8.5 L72.0,-7.8 L73.0,-6.7 L74.0,-7.5 L75.0,-8.0 L76.0,-7.1 L77.0,-4.9 L78.0,-0.9 L79.0,-0.8 L80.0,-0.8 L81.0,-0.8 L82.0,-0.8 L83.0,-0.9 L84.0,-2.3 L85.0,-4.8 L86.0,-6.7 L87.0,-7.4 L88.0,-8.2 L89.0,-10.3 L90.0,-10.6 L91.0,-9.3 L92.0,-8.6 L93.0,-7.8 L94.0,-7.5 L95.0,-7.9 L96.0,-9.0 L97.0,-9.9 L98.0,-9.6 L99.0,-7.7 L100.0,-6.1 L101.0,-6.0 L102.0,-6.9 L103.0,-8.0 L104.0,-8.8 L105.0,-8.0 L106.0,-6.6 L107.0,-4.9 L108.0,-4.6 L109.0,-4.6 L110.0,-4.4 L111.0,-2.8 L112.0,-0.8 L113.0,-3.2 L114.0,-5.1 L115.0,-6.9 L116.0,-9.4 L117.0,-11.1 L118.0,-11.4 L119.0,-10.5 L120.0,-8.2 L121.0,-7.1 L122.0,-7.6 L123.0,-8.5 L124.0,-8.8 L125.0,-10.0 L126.0,-9.1 L127.0,-8.1 L128.0,-7.2 L129.0,-6.7 L130.0,-7.2 L131.0,-8.0 L132.0,-8.5 L133.0,-8.6 L134.0,-7.2 L135.0,-5.7 L136.0,-5.1 L137.0,-5.8 L138.0,-6.1 L139.0,-5.7 L140.0,-4.1 L141.0,-2.4 L142.0,-0.8 L143.0,-0.8 L144.0,-0.8 L145.0,-0.8 L146.0,-0.8 L147.0,-0.8 L148.0,-0.8 L149.0,-0.9 L150.0,-0.8 L151.0,-0.8 L152.0,-2.6 L153.0,-5.7 L154.0,-7.8 L155.0,-8.8 L156.0,-7.1 L157.0,-7.8 L158.0,-8.9 L159.0,-9.9 L160.0,-9.8 L161.0,-8.8 L162.0,-7.8 L163.0,-6.8 L164.0,-6.3 L165.0,-7.0 L166.0,-8.8 L167.0,-8.7 L168.0,-8.6 L169.0,-7.2 L170.0,-6.3 L171.0,-5.9 L172.0,-6.3 L173.0,-7.8 L174.0,-7.5 L175.0,-6.5 L176.0,-4.8 L177.0,-4.2 L178.0,-3.6 L179.0,-3.2 L180.0,-7.7 L181.0,-10.0 L182.0,-10.2 L183.0,-9.7 L184.0,-8.5 L185.0,-8.9 L186.0,-9.4 L187.0,-10.7 L188.0,-9.7 L189.0,-9.4 L190.0,-8.1 L191.0,-6.7 L192.0,-6.8 L193.0,-8.4 L194.0,-8.9 L195.0,-8.4 L196.0,-8.0 L197.0,-6.5 L198.0,-5.6 L199.0,-5.1 L200.0,-4.9 L201.0,-4.1 L202.0,-1.3 L203.0,-0.8 L204.0,-0.8 L205.0,-0.8 L206.0,-0.8 L207.0,-5.1 L208.0,-10.8 L209.0,-12.3 L210.0,-11.0 L211.0,-9.4 L212.0,-8.0 L213.0,-7.2 L214.0,-8.8 L215.0,-9.8 L216.0,-9.4 L217.0,-8.4 L218.0,-5.8 L219.0,-4.0 L220.0,-2.5 L221.0,-3.6 L222.0,-8.8 L223.0,-11.3 L224.0,-9.4 L225.0,-8.4 L226.0,-6.8 L227.0,-7.1 L228.0,-8.6 L229.0,-9.1 L230.0,-8.1 L231.0,-7.7 L232.0,-6.8 L233.0,-4.5 L234.0,-3.9 L235.0,-2.4 L236.0,-0.8 L237.0,-0.9 L238.0,-0.8 L239.0,-0.9 L240.0,-0.8 L241.0,-0.8 L242.0,-0.8 L243.0,-0.9 L244.0,-1.2 L245.0,-4.6 L246.0,-6.3 L247.0,-6.8 L248.0,-7.1 L249.0,-8.3 L250.0,-9.6 L251.0,-9.2 L252.0,-8.3 L253.0,-7.2 L254.0,-6.6 L255.0,-7.1 L256.0,-8.0 L257.0,-8.6 L258.0,-8.3 L259.0,-7.3 L260.0,-5.9 L261.0,-5.7 L262.0,-5.3 L263.0,-5.9 L264.0,-5.7 L265.0,-4.8 L266.0,-3.8 L267.0,-1.9 L268.0,-5.6 L269.0,-7.1 L270.0,-7.1 L271.0,-8.0 L272.0,-7.7 L273.0,-7.3 L274.0,-5.5 L275.0,-5.1 L276.0,-5.0 L277.0,-6.1 L278.0,-5.2 L279.0,-3.9 L280.0,-0.9 L281.0,-0.8 L282.0,-0.8 L283.0,-0.9 L284.0,-0.9 L285.0,-0.8 L286.0,-0.8 L287.0,-0.9 L288.0,-0.8 L289.0,-0.8 L290.0,-0.8 L291.0,-0.8 L292.0,-0.8 L293.0,-0.8 L294.0,-6.1 L295.0,-7.5 L296.0,-7.6 L297.0,-7.7 L298.0,-7.9 L299.0,-8.7 L300.0,-8.0 L301.0,-7.4 L302.0,-6.6 L303.0,-5.8 L304.0,-5.9 L305.0,-5.0 L306.0,-4.1 L307.0,-1.7 L308.0,-5.3 L309.0,-9.1 L310.0,-8.8 L311.0,-9.3 L312.0,-9.9 L313.0,-10.7 L314.0,-10.4 L315.0,-9.7 L316.0,-7.6 L317.0,-7.1 L318.0,-7.3 L319.0,-8.0 L320.0,-7.4 L321.0,-6.1 L322.0,-3.7 L323.0,-0.8 L324.0,-0.8 L325.0,-0.9 L326.0,-0.8 L327.0,-0.9 L328.0,-0.8 L329.0,-0.8 L330.0,-0.9 L331.0,-0.8 L332.0,-0.8 L333.0,-4.2 L334.0,-8.0 L335.0,-9.5 L336.0,-9.4 L337.0,-8.0 L338.0,-7.0 L339.0,-7.5 L340.0,-8.9 L341.0,-9.1 L342.0,-8.7 L343.0,-7.9 L344.0,-7.0 L345.0,-6.7 L346.0,-7.3 L347.0,-7.8 L348.0,-7.7 L349.0,-7.7 L350.0,-6.8 L351.0,-6.5 L352.0,-5.7 L353.0,-6.0 L354.0,-6.7 L355.0,-6.9 L356.0,-6.6 L357.0,-5.2 L358.0,-3.8 L359.0,-3.0 L360.0,-2.1 L361.0,-0.8 L362.0,-3.9 L363.0,-7.0 L364.0,-7.0 L365.0,-7.5 L366.0,-6.9 L367.0,-7.0 L367.0,8.1 L366.0,6.7 L365.0,6.9 L364.0,7.7 L363.0,6.1 L362.0,3.6 L361.0,0.9 L360.0,1.9 L359.0,2.9 L358.0,3.9 L357.0,4.9 L356.0,6.8 L355.0,6.4 L354.0,6.6 L353.0,5.7 L352.0,5.3 L351.0,5.7 L350.0,7.0 L349.0,7.7 L348.0,8.4 L347.0,8.4 L346.0,7.2 L345.0,6.9 L344.0,7.4 L343.0,8.5 L342.0,9.6 L341.0,10.0 L340.0,9.1 L339.0,7.5 L338.0,7.4 L337.0,8.1 L336.0,8.9 L335.0,9.5 L334.0,6.9 L333.0,4.1 L332.0,1.0 L331.0,0.8 L330.0,0.8 L329.0,0.9 L328.0,0.9 L327.0,0.8 L326.0,0.9 L325.0,0.9 L324.0,0.9 L323.0,0.8 L322.0,3.7 L321.0,6.4 L320.0,7.4 L319.0,7.2 L318.0,6.5 L317.0,6.8 L316.0,8.1 L315.0,9.0 L314.0,10.0 L313.0,10.8 L312.0,10.5 L311.0,8.6 L310.0,8.3 L309.0,8.0 L308.0,5.2 L307.0,1.7 L306.0,4.4 L305.0,5.7 L304.0,5.5 L303.0,6.0 L302.0,6.4 L301.0,7.3 L300.0,9.0 L299.0,8.1 L298.0,7.7 L297.0,7.1 L296.0,7.5 L295.0,7.2 L294.0,6.3 L293.0,0.9 L292.0,0.8 L291.0,0.9 L290.0,0.8 L289.0,0.8 L288.0,0.9 L287.0,0.8 L286.0,0.9 L285.0,0.8 L284.0,0.9 L283.0,0.8 L282.0,0.8 L281.0,0.8 L280.0,0.9 L279.0,3.7 L278.0,5.4 L277.0,6.0 L276.0,5.7 L275.0,5.0 L274.0,6.0 L273.0,7.3 L272.0,8.3 L271.0,8.3 L270.0,7.3 L269.0,6.3 L268.0,5.9 L267.0,2.1 L266.0,3.9 L265.0,5.0 L264.0,6.1 L263.0,6.3 L262.0,5.5 L261.0,5.1 L260.0,6.6 L259.0,7.5 L258.0,8.1 L257.0,7.6 L256.0,7.2 L255.0,6.3 L254.0,6.6 L253.0,7.4 L252.0,7.8 L251.0,9.0 L250.0,9.8 L249.0,8.1 L248.0,7.8 L247.0,6.7 L246.0,6.5 L245.0,5.1 L244.0,1.1 L243.0,0.8 L242.0,0.8 L241.0,0.8 L240.0,0.8 L239.0,0.8 L238.0,0.9 L237.0,0.8 L236.0,0.8 L235.0,2.2 L234.0,3.6 L233.0,4.9 L232.0,5.9 L231.0,7.2 L230.0,9.3 L229.0,8.2 L228.0,7.9 L227.0,7.9 L226.0,7.4 L225.0,7.8 L224.0,9.7 L223.0,11.3 L222.0,9.0 L221.0,3.6 L220.0,2.4 L219.0,4.3 L218.0,5.6 L217.0,7.8 L216.0,9.1 L215.0,8.7 L214.0,8.8 L213.0,7.3 L212.0,7.2 L211.0,8.5 L210.0,9.8 L209.0,11.6 L208.0,11.4 L207.0,5.5 L206.0,0.8 L205.0,0.8 L204.0,0.8 L203.0,0.8 L202.0,1.4 L201.0,4.0 L200.0,4.9 L199.0,4.6 L198.0,5.8 L197.0,7.0 L196.0,8.8 L195.0,9.5 L194.0,8.8 L193.0,7.6 L192.0,7.0 L191.0,7.0 L190.0,7.6 L189.0,9.6 L188.0,11.0 L187.0,10.7 L186.0,9.3 L185.0,7.9 L184.0,7.7 L183.0,8.7 L182.0,11.4 L181.0,9.9 L180.0,7.5 L179.0,2.8 L178.0,3.7 L177.0,3.9 L176.0,5.1 L175.0,6.8 L174.0,7.3 L173.0,7.1 L172.0,7.0 L171.0,5.9 L170.0,6.4 L169.0,6.8 L168.0,7.7 L167.0,8.7 L166.0,7.8 L165.0,7.6 L164.0,6.5 L163.0,7.3 L162.0,7.6 L161.0,9.6 L160.0,9.4 L159.0,8.7 L158.0,8.3 L157.0,8.0 L156.0,7.9 L155.0,8.3 L154.0,7.7 L153.0,6.4 L152.0,2.8 L151.0,0.8 L150.0,0.9 L149.0,0.8 L148.0,0.8 L147.0,0.9 L146.0,0.8 L145.0,0.8 L144.0,0.9 L143.0,0.8 L142.0,0.8 L141.0,2.4 L140.0,4.0 L139.0,5.6 L138.0,6.3 L137.0,5.8 L136.0,5.3 L135.0,5.9 L134.0,7.0 L133.0,7.9 L132.0,9.3 L131.0,8.4 L130.0,6.9 L129.0,6.7 L128.0,7.1 L127.0,8.1 L126.0,8.9 L125.0,9.4 L124.0,8.7 L123.0,8.0 L122.0,7.0 L121.0,7.5 L120.0,8.4 L119.0,10.1 L118.0,10.5 L117.0,11.0 L116.0,9.1 L115.0,6.9 L114.0,5.3 L113.0,3.3 L112.0,0.8 L111.0,2.8 L110.0,4.4 L109.0,4.2 L108.0,4.5 L107.0,5.1 L106.0,6.5 L105.0,7.3 L104.0,8.6 L103.0,8.2 L102.0,7.4 L101.0,6.7 L100.0,6.9 L99.0,8.3 L98.0,8.7 L97.0,8.9 L96.0,9.2 L95.0,8.6 L94.0,6.6 L93.0,7.7 L92.0,8.5 L91.0,9.2 L90.0,9.7 L89.0,9.5 L88.0,8.7 L87.0,8.0 L86.0,6.1 L85.0,5.4 L84.0,2.6 L83.0,0.9 L82.0,0.9 L81.0,0.8 L80.0,0.9 L79.0,0.9 L78.0,0.8 L77.0,4.4 L76.0,7.5 L75.0,8.6 L74.0,6.8 L73.0,7.4 L72.0,7.0 L71.0,8.7 L70.0,9.9 L69.0,11.2 L68.0,11.0 L67.0,8.6 L66.0,3.7 L65.0,4.7 L64.0,6.1 L63.0,8.1 L62.0,7.9 L61.0,7.8 L60.0,7.4 L59.0,6.9 L58.0,7.2 L57.0,7.7 L56.0,8.9 L55.0,9.6 L54.0,8.7 L53.0,3.4 L52.0,0.9 L51.0,1.2 L50.0,2.8 L49.0,4.4 L48.0,5.2 L47.0,5.3 L46.0,5.2 L45.0,4.8 L44.0,5.7 L43.0,6.3 L42.0,7.9 L41.0,8.0 L40.0,7.1 L39.0,6.3 L38.0,5.7 L37.0,6.0 L36.0,8.1 L35.0,8.7 L34.0,8.8 L33.0,9.0 L32.0,7.1 L31.0,6.3 L30.0,7.6 L29.0,8.8 L28.0,9.3 L27.0,10.0 L26.0,9.8 L25.0,7.9 L24.0,5.5 L23.0,3.7 L22.0,1.9 L21.0,4.0 L20.0,4.9 L19.0,5.8 L18.0,5.2 L17.0,4.8 L16.0,5.9 L15.0,6.4 L14.0,7.8 L13.0,7.8 L12.0,7.9 L11.0,6.8 L10.0,5.9 L9.0,6.6 L8.0,7.4 L7.0,8.4 L6.0,9.6 L5.0,7.8 L4.0,3.7 L3.0,0.9 L2.0,0.9 L1.0,0.9 L0.0,0.8Z" fill="#1b2a18"/><rect x="0" y="-1" width="367" height="2" fill="#1b2a18"/></g></svg>
<div style="left:1043px;top:960px;width:369px;height:32px;overflow:hidden;"><div class="t" style="left:7px;top:8px;font-size:19.5px;letter-spacing:0.9px;color:#1b3514;-webkit-text-stroke:0.25px #1b3514;">H</div></div>
<div style="left:1064px;top:960px;width:1.5px;height:104px;background:#3f9a2e;"></div>
<div style="left:1087px;top:960px;width:1.5px;height:104px;background:#3f9a2e;"></div>
<div style="left:1064px;top:960px;width:23px;height:32px;overflow:hidden;"><div class="t" style="left:4px;top:8px;font-size:19.5px;letter-spacing:0.9px;color:#1b3514;-webkit-text-stroke:0.25px #1b3514;">H</div></div>
<div style="left:1087px;top:960px;width:320px;height:32px;overflow:hidden;"><div class="t" style="left:5px;top:8px;font-size:19.5px;letter-spacing:0.9px;color:#1b3514;-webkit-text-stroke:0.25px #1b3514;">HS1_120_Ebm_Lifting_Lead</div></div>
<div style="left:1476px;top:960px;width:54px;height:33px;background:#656565;"></div>
<svg style="position:absolute;left:1476px;top:996.5px;overflow:visible" width="54" height="28"><g transform="translate(0,14)"><path d="M0.0,-0.9 L1.0,-0.9 L2.0,-0.8 L3.0,-0.8 L4.0,-0.8 L5.0,-0.9 L6.0,-0.8 L7.0,-0.8 L8.0,-0.9 L9.0,-0.9 L10.0,-0.9 L11.0,-0.8 L12.0,-0.9 L13.0,-0.8 L14.0,-0.8 L15.0,-0.8 L16.0,-0.9 L17.0,-8.5 L18.0,-11.5 L19.0,-9.2 L20.0,-8.1 L21.0,-9.0 L22.0,-9.6 L23.0,-9.1 L24.0,-7.8 L25.0,-6.6 L26.0,-7.7 L27.0,-6.8 L28.0,-7.5 L29.0,-7.5 L30.0,-8.0 L31.0,-7.5 L32.0,-5.5 L33.0,-2.9 L34.0,-0.9 L35.0,-0.8 L36.0,-0.8 L37.0,-0.8 L38.0,-0.9 L39.0,-0.8 L40.0,-0.8 L41.0,-0.8 L42.0,-0.8 L43.0,-0.8 L44.0,-0.8 L45.0,-0.8 L46.0,-0.8 L47.0,-0.9 L48.0,-0.8 L49.0,-0.9 L50.0,-0.9 L51.0,-0.8 L52.0,-0.8 L53.0,-0.9 L54.0,-0.8 L54.0,0.8 L53.0,0.8 L52.0,0.8 L51.0,0.8 L50.0,0.8 L49.0,0.8 L48.0,0.8 L47.0,0.8 L46.0,0.9 L45.0,0.9 L44.0,0.8 L43.0,0.8 L42.0,0.9 L41.0,0.9 L40.0,0.9 L39.0,0.9 L38.0,0.8 L37.0,0.8 L36.0,0.8 L35.0,0.8 L34.0,0.9 L33.0,2.5 L32.0,5.9 L31.0,8.0 L30.0,8.4 L29.0,8.3 L28.0,7.7 L27.0,6.6 L26.0,8.2 L25.0,6.3 L24.0,8.9 L23.0,10.0 L22.0,9.6 L21.0,7.9 L20.0,8.1 L19.0,9.3 L18.0,11.4 L17.0,9.4 L16.0,0.8 L15.0,0.9 L14.0,0.8 L13.0,0.8 L12.0,0.9 L11.0,0.8 L10.0,0.8 L9.0,0.8 L8.0,0.8 L7.0,0.9 L6.0,0.8 L5.0,0.8 L4.0,0.8 L3.0,0.8 L2.0,0.8 L1.0,0.8 L0.0,0.8Z" fill="#6a6a6a"/><rect x="0" y="-1" width="54" height="2" fill="#6a6a6a"/></g></svg>
<svg style="position:absolute;left:1476px;top:1032.8px;overflow:visible" width="54" height="28"><g transform="translate(0,14)"><path d="M0.0,-0.9 L1.0,-0.9 L2.0,-0.8 L3.0,-0.8 L4.0,-0.8 L5.0,-0.9 L6.0,-0.8 L7.0,-0.8 L8.0,-0.9 L9.0,-0.9 L10.0,-0.9 L11.0,-0.8 L12.0,-0.9 L13.0,-0.8 L14.0,-0.8 L15.0,-0.8 L16.0,-0.9 L17.0,-8.5 L18.0,-11.5 L19.0,-9.2 L20.0,-8.1 L21.0,-9.0 L22.0,-9.6 L23.0,-9.1 L24.0,-7.8 L25.0,-6.6 L26.0,-7.7 L27.0,-6.8 L28.0,-7.5 L29.0,-7.5 L30.0,-8.0 L31.0,-7.5 L32.0,-5.5 L33.0,-2.9 L34.0,-0.9 L35.0,-0.8 L36.0,-0.8 L37.0,-0.8 L38.0,-0.9 L39.0,-0.8 L40.0,-0.8 L41.0,-0.8 L42.0,-0.8 L43.0,-0.8 L44.0,-0.8 L45.0,-0.8 L46.0,-0.8 L47.0,-0.9 L48.0,-0.8 L49.0,-0.9 L50.0,-0.9 L51.0,-0.8 L52.0,-0.8 L53.0,-0.9 L54.0,-0.8 L54.0,0.8 L53.0,0.8 L52.0,0.8 L51.0,0.8 L50.0,0.8 L49.0,0.8 L48.0,0.8 L47.0,0.8 L46.0,0.9 L45.0,0.9 L44.0,0.8 L43.0,0.8 L42.0,0.9 L41.0,0.9 L40.0,0.9 L39.0,0.9 L38.0,0.8 L37.0,0.8 L36.0,0.8 L35.0,0.8 L34.0,0.9 L33.0,2.5 L32.0,5.9 L31.0,8.0 L30.0,8.4 L29.0,8.3 L28.0,7.7 L27.0,6.6 L26.0,8.2 L25.0,6.3 L24.0,8.9 L23.0,10.0 L22.0,9.6 L21.0,7.9 L20.0,8.1 L19.0,9.3 L18.0,11.4 L17.0,9.4 L16.0,0.8 L15.0,0.9 L14.0,0.8 L13.0,0.8 L12.0,0.9 L11.0,0.8 L10.0,0.8 L9.0,0.8 L8.0,0.8 L7.0,0.9 L6.0,0.8 L5.0,0.8 L4.0,0.8 L3.0,0.8 L2.0,0.8 L1.0,0.8 L0.0,0.8Z" fill="#6a6a6a"/><rect x="0" y="-1" width="54" height="2" fill="#6a6a6a"/></g></svg>
<div style="left:1485.8px;top:1005px;width:2px;height:11px;background:#6a6a6a;"></div>
<div style="left:1485.8px;top:1041px;width:2px;height:11px;background:#6a6a6a;"></div>
<div style="left:1476px;top:960px;width:54px;height:32px;overflow:hidden;"><div class="t" style="left:6px;top:8px;font-size:19.5px;letter-spacing:0.9px;color:#262626;-webkit-text-stroke:0.25px #262626;">I HS1</div></div>
<div style="left:1564px;top:960px;width:254px;height:33px;background:#656565;"></div>
<svg style="position:absolute;left:1564px;top:996.5px;overflow:visible" width="254" height="28"><g transform="translate(0,14)"><path d="M0.0,-0.8 L1.0,-0.8 L2.0,-0.9 L3.0,-0.8 L4.0,-1.4 L5.0,-4.5 L6.0,-7.0 L7.0,-9.5 L8.0,-12.0 L9.0,-10.7 L10.0,-9.6 L11.0,-7.5 L12.0,-7.4 L13.0,-8.9 L14.0,-10.1 L15.0,-9.4 L16.0,-9.9 L17.0,-7.7 L18.0,-7.4 L19.0,-6.9 L20.0,-7.5 L21.0,-8.7 L22.0,-8.5 L23.0,-8.6 L24.0,-7.0 L25.0,-6.3 L26.0,-5.3 L27.0,-5.9 L28.0,-6.1 L29.0,-5.6 L30.0,-4.4 L31.0,-2.4 L32.0,-3.8 L33.0,-6.6 L34.0,-8.4 L35.0,-9.9 L36.0,-11.1 L37.0,-10.1 L38.0,-9.0 L39.0,-6.9 L40.0,-7.2 L41.0,-7.4 L42.0,-8.6 L43.0,-9.9 L44.0,-8.6 L45.0,-7.8 L46.0,-6.9 L47.0,-6.2 L48.0,-7.1 L49.0,-7.5 L50.0,-7.7 L51.0,-6.7 L52.0,-4.9 L53.0,-3.2 L54.0,-2.1 L55.0,-3.9 L56.0,-7.3 L57.0,-9.0 L58.0,-9.0 L59.0,-7.1 L60.0,-6.3 L61.0,-5.7 L62.0,-6.7 L63.0,-7.8 L64.0,-7.4 L65.0,-7.5 L66.0,-6.7 L67.0,-5.2 L68.0,-5.5 L69.0,-5.8 L70.0,-6.1 L71.0,-6.4 L72.0,-6.3 L73.0,-5.1 L74.0,-3.6 L75.0,-3.3 L76.0,-2.7 L77.0,-6.1 L78.0,-8.9 L79.0,-8.9 L80.0,-7.7 L81.0,-6.1 L82.0,-6.5 L83.0,-6.7 L84.0,-7.2 L85.0,-8.6 L86.0,-7.9 L87.0,-5.9 L88.0,-5.7 L89.0,-5.7 L90.0,-5.4 L91.0,-6.6 L92.0,-6.1 L93.0,-5.2 L94.0,-4.3 L95.0,-3.0 L96.0,-1.9 L97.0,-0.8 L98.0,-0.8 L99.0,-0.9 L100.0,-0.9 L101.0,-0.8 L102.0,-0.8 L103.0,-3.1 L104.0,-6.1 L105.0,-9.4 L106.0,-10.8 L107.0,-10.6 L108.0,-7.9 L109.0,-7.5 L110.0,-7.8 L111.0,-8.7 L112.0,-8.9 L113.0,-9.7 L114.0,-8.3 L115.0,-7.9 L116.0,-6.8 L117.0,-6.0 L118.0,-7.1 L119.0,-8.0 L120.0,-7.7 L121.0,-8.0 L122.0,-6.9 L123.0,-5.5 L124.0,-5.4 L125.0,-5.6 L126.0,-5.4 L127.0,-4.7 L128.0,-3.3 L129.0,-5.9 L130.0,-7.5 L131.0,-8.0 L132.0,-9.8 L133.0,-10.0 L134.0,-10.7 L135.0,-10.6 L136.0,-9.2 L137.0,-7.5 L138.0,-7.7 L139.0,-9.0 L140.0,-10.4 L141.0,-10.2 L142.0,-8.8 L143.0,-7.4 L144.0,-6.5 L145.0,-7.3 L146.0,-8.3 L147.0,-8.4 L148.0,-9.2 L149.0,-8.6 L150.0,-6.6 L151.0,-6.0 L152.0,-5.3 L153.0,-5.6 L154.0,-5.1 L155.0,-4.7 L156.0,-3.0 L157.0,-0.8 L158.0,-0.9 L159.0,-0.9 L160.0,-0.9 L161.0,-0.8 L162.0,-0.8 L163.0,-0.9 L164.0,-0.9 L165.0,-0.9 L166.0,-0.9 L167.0,-3.5 L168.0,-7.5 L169.0,-10.0 L170.0,-11.0 L171.0,-9.5 L172.0,-8.4 L173.0,-7.8 L174.0,-8.8 L175.0,-10.5 L176.0,-10.3 L177.0,-9.7 L178.0,-7.6 L179.0,-6.8 L180.0,-6.7 L181.0,-8.4 L182.0,-8.2 L183.0,-9.1 L184.0,-8.0 L185.0,-7.0 L186.0,-6.3 L187.0,-5.6 L188.0,-6.2 L189.0,-6.6 L190.0,-5.4 L191.0,-4.3 L192.0,-2.6 L193.0,-2.8 L194.0,-5.2 L195.0,-7.2 L196.0,-8.6 L197.0,-8.9 L198.0,-8.5 L199.0,-7.3 L200.0,-6.2 L201.0,-5.9 L202.0,-7.6 L203.0,-8.0 L204.0,-7.9 L205.0,-7.6 L206.0,-6.7 L207.0,-5.6 L208.0,-6.1 L209.0,-5.9 L210.0,-7.3 L211.0,-6.5 L212.0,-6.2 L213.0,-4.6 L214.0,-4.1 L215.0,-3.9 L216.0,-3.4 L217.0,-3.0 L218.0,-4.3 L219.0,-8.4 L220.0,-8.4 L221.0,-7.8 L222.0,-8.3 L223.0,-9.4 L224.0,-9.8 L225.0,-10.5 L226.0,-9.5 L227.0,-7.8 L228.0,-7.0 L229.0,-6.9 L230.0,-8.1 L231.0,-8.9 L232.0,-9.2 L233.0,-7.9 L234.0,-5.4 L235.0,-4.8 L236.0,-3.9 L237.0,-3.2 L238.0,-0.8 L239.0,-0.9 L240.0,-0.8 L241.0,-0.8 L242.0,-0.8 L243.0,-0.9 L244.0,-0.9 L245.0,-0.8 L246.0,-0.8 L247.0,-0.8 L248.0,-0.9 L249.0,-0.8 L250.0,-0.8 L251.0,-0.8 L252.0,-6.5 L253.0,-8.6 L254.0,-9.5 L254.0,8.9 L253.0,9.6 L252.0,5.8 L251.0,0.9 L250.0,0.8 L249.0,0.9 L248.0,0.8 L247.0,0.9 L246.0,0.8 L245.0,0.9 L244.0,0.9 L243.0,0.8 L242.0,0.8 L241.0,0.8 L240.0,0.8 L239.0,0.8 L238.0,0.8 L237.0,3.2 L236.0,4.1 L235.0,4.5 L234.0,5.9 L233.0,7.4 L232.0,8.7 L231.0,9.1 L230.0,7.4 L229.0,7.2 L228.0,6.8 L227.0,7.9 L226.0,9.6 L225.0,10.1 L224.0,9.8 L223.0,9.3 L222.0,7.8 L221.0,7.4 L220.0,8.6 L219.0,8.4 L218.0,4.5 L217.0,3.0 L216.0,3.4 L215.0,3.7 L214.0,4.1 L213.0,5.1 L212.0,6.4 L211.0,7.1 L210.0,7.2 L209.0,6.4 L208.0,5.2 L207.0,5.6 L206.0,6.6 L205.0,7.8 L204.0,7.5 L203.0,7.9 L202.0,6.9 L201.0,6.4 L200.0,6.6 L199.0,7.5 L198.0,8.4 L197.0,9.6 L196.0,8.6 L195.0,8.1 L194.0,4.9 L193.0,3.1 L192.0,2.5 L191.0,4.2 L190.0,5.4 L189.0,6.6 L188.0,6.4 L187.0,5.8 L186.0,5.7 L185.0,7.4 L184.0,7.9 L183.0,8.3 L182.0,8.5 L181.0,8.5 L180.0,6.8 L179.0,6.4 L178.0,7.8 L177.0,9.7 L176.0,10.2 L175.0,10.1 L174.0,8.9 L173.0,7.5 L172.0,7.4 L171.0,9.0 L170.0,10.6 L169.0,9.8 L168.0,7.1 L167.0,3.7 L166.0,0.8 L165.0,0.8 L164.0,0.9 L163.0,0.8 L162.0,0.8 L161.0,0.8 L160.0,0.8 L159.0,0.8 L158.0,0.8 L157.0,0.8 L156.0,3.0 L155.0,4.7 L154.0,5.2 L153.0,5.4 L152.0,5.4 L151.0,5.9 L150.0,6.3 L149.0,8.6 L148.0,8.9 L147.0,8.4 L146.0,8.1 L145.0,7.3 L144.0,6.7 L143.0,8.1 L142.0,9.1 L141.0,9.5 L140.0,9.5 L139.0,8.5 L138.0,8.0 L137.0,8.3 L136.0,9.0 L135.0,10.9 L134.0,10.2 L133.0,11.5 L132.0,9.6 L131.0,8.6 L130.0,7.6 L129.0,5.5 L128.0,3.2 L127.0,4.4 L126.0,5.1 L125.0,5.0 L124.0,5.3 L123.0,5.5 L122.0,6.4 L121.0,7.8 L120.0,7.7 L119.0,8.3 L118.0,7.7 L117.0,6.6 L116.0,6.2 L115.0,8.1 L114.0,8.1 L113.0,9.3 L112.0,8.7 L111.0,8.6 L110.0,7.4 L109.0,7.4 L108.0,8.0 L107.0,9.5 L106.0,10.8 L105.0,9.3 L104.0,6.3 L103.0,3.1 L102.0,0.8 L101.0,0.8 L100.0,0.8 L99.0,0.9 L98.0,0.9 L97.0,0.8 L96.0,1.8 L95.0,3.1 L94.0,4.4 L93.0,5.8 L92.0,6.4 L91.0,7.0 L90.0,6.2 L89.0,5.7 L88.0,5.8 L87.0,6.9 L86.0,7.0 L85.0,8.6 L84.0,7.3 L83.0,6.5 L82.0,6.7 L81.0,6.1 L80.0,6.9 L79.0,8.5 L78.0,8.7 L77.0,6.2 L76.0,3.1 L75.0,2.9 L74.0,3.9 L73.0,4.7 L72.0,6.2 L71.0,6.9 L70.0,7.0 L69.0,6.2 L68.0,5.3 L67.0,5.3 L66.0,6.9 L65.0,8.0 L64.0,7.4 L63.0,7.3 L62.0,6.8 L61.0,6.1 L60.0,6.2 L59.0,7.5 L58.0,8.2 L57.0,8.7 L56.0,7.2 L55.0,4.3 L54.0,2.0 L53.0,3.3 L52.0,5.0 L51.0,6.6 L50.0,7.5 L49.0,7.1 L48.0,7.1 L47.0,6.1 L46.0,6.8 L45.0,7.2 L44.0,9.3 L43.0,9.0 L42.0,8.1 L41.0,7.5 L40.0,7.4 L39.0,7.2 L38.0,8.5 L37.0,10.4 L36.0,9.8 L35.0,10.2 L34.0,8.3 L33.0,6.1 L32.0,3.8 L31.0,2.6 L30.0,4.1 L29.0,5.6 L28.0,5.6 L27.0,5.9 L26.0,5.9 L25.0,5.9 L24.0,7.2 L23.0,9.0 L22.0,8.6 L21.0,9.1 L20.0,7.0 L19.0,6.5 L18.0,7.1 L17.0,8.8 L16.0,9.6 L15.0,9.7 L14.0,10.0 L13.0,8.5 L12.0,7.9 L11.0,8.3 L10.0,9.0 L9.0,10.5 L8.0,10.6 L7.0,10.1 L6.0,6.9 L5.0,4.3 L4.0,1.4 L3.0,0.8 L2.0,0.9 L1.0,0.9 L0.0,0.9Z" fill="#6a6a6a"/><rect x="0" y="-1" width="254" height="2" fill="#6a6a6a"/></g></svg>
<svg style="position:absolute;left:1564px;top:1032.8px;overflow:visible" width="254" height="28"><g transform="translate(0,14)"><path d="M0.0,-0.8 L1.0,-0.8 L2.0,-0.9 L3.0,-0.8 L4.0,-1.4 L5.0,-4.5 L6.0,-7.0 L7.0,-9.5 L8.0,-12.0 L9.0,-10.7 L10.0,-9.6 L11.0,-7.5 L12.0,-7.4 L13.0,-8.9 L14.0,-10.1 L15.0,-9.4 L16.0,-9.9 L17.0,-7.7 L18.0,-7.4 L19.0,-6.9 L20.0,-7.5 L21.0,-8.7 L22.0,-8.5 L23.0,-8.6 L24.0,-7.0 L25.0,-6.3 L26.0,-5.3 L27.0,-5.9 L28.0,-6.1 L29.0,-5.6 L30.0,-4.4 L31.0,-2.4 L32.0,-3.8 L33.0,-6.6 L34.0,-8.4 L35.0,-9.9 L36.0,-11.1 L37.0,-10.1 L38.0,-9.0 L39.0,-6.9 L40.0,-7.2 L41.0,-7.4 L42.0,-8.6 L43.0,-9.9 L44.0,-8.6 L45.0,-7.8 L46.0,-6.9 L47.0,-6.2 L48.0,-7.1 L49.0,-7.5 L50.0,-7.7 L51.0,-6.7 L52.0,-4.9 L53.0,-3.2 L54.0,-2.1 L55.0,-3.9 L56.0,-7.3 L57.0,-9.0 L58.0,-9.0 L59.0,-7.1 L60.0,-6.3 L61.0,-5.7 L62.0,-6.7 L63.0,-7.8 L64.0,-7.4 L65.0,-7.5 L66.0,-6.7 L67.0,-5.2 L68.0,-5.5 L69.0,-5.8 L70.0,-6.1 L71.0,-6.4 L72.0,-6.3 L73.0,-5.1 L74.0,-3.6 L75.0,-3.3 L76.0,-2.7 L77.0,-6.1 L78.0,-8.9 L79.0,-8.9 L80.0,-7.7 L81.0,-6.1 L82.0,-6.5 L83.0,-6.7 L84.0,-7.2 L85.0,-8.6 L86.0,-7.9 L87.0,-5.9 L88.0,-5.7 L89.0,-5.7 L90.0,-5.4 L91.0,-6.6 L92.0,-6.1 L93.0,-5.2 L94.0,-4.3 L95.0,-3.0 L96.0,-1.9 L97.0,-0.8 L98.0,-0.8 L99.0,-0.9 L100.0,-0.9 L101.0,-0.8 L102.0,-0.8 L103.0,-3.1 L104.0,-6.1 L105.0,-9.4 L106.0,-10.8 L107.0,-10.6 L108.0,-7.9 L109.0,-7.5 L110.0,-7.8 L111.0,-8.7 L112.0,-8.9 L113.0,-9.7 L114.0,-8.3 L115.0,-7.9 L116.0,-6.8 L117.0,-6.0 L118.0,-7.1 L119.0,-8.0 L120.0,-7.7 L121.0,-8.0 L122.0,-6.9 L123.0,-5.5 L124.0,-5.4 L125.0,-5.6 L126.0,-5.4 L127.0,-4.7 L128.0,-3.3 L129.0,-5.9 L130.0,-7.5 L131.0,-8.0 L132.0,-9.8 L133.0,-10.0 L134.0,-10.7 L135.0,-10.6 L136.0,-9.2 L137.0,-7.5 L138.0,-7.7 L139.0,-9.0 L140.0,-10.4 L141.0,-10.2 L142.0,-8.8 L143.0,-7.4 L144.0,-6.5 L145.0,-7.3 L146.0,-8.3 L147.0,-8.4 L148.0,-9.2 L149.0,-8.6 L150.0,-6.6 L151.0,-6.0 L152.0,-5.3 L153.0,-5.6 L154.0,-5.1 L155.0,-4.7 L156.0,-3.0 L157.0,-0.8 L158.0,-0.9 L159.0,-0.9 L160.0,-0.9 L161.0,-0.8 L162.0,-0.8 L163.0,-0.9 L164.0,-0.9 L165.0,-0.9 L166.0,-0.9 L167.0,-3.5 L168.0,-7.5 L169.0,-10.0 L170.0,-11.0 L171.0,-9.5 L172.0,-8.4 L173.0,-7.8 L174.0,-8.8 L175.0,-10.5 L176.0,-10.3 L177.0,-9.7 L178.0,-7.6 L179.0,-6.8 L180.0,-6.7 L181.0,-8.4 L182.0,-8.2 L183.0,-9.1 L184.0,-8.0 L185.0,-7.0 L186.0,-6.3 L187.0,-5.6 L188.0,-6.2 L189.0,-6.6 L190.0,-5.4 L191.0,-4.3 L192.0,-2.6 L193.0,-2.8 L194.0,-5.2 L195.0,-7.2 L196.0,-8.6 L197.0,-8.9 L198.0,-8.5 L199.0,-7.3 L200.0,-6.2 L201.0,-5.9 L202.0,-7.6 L203.0,-8.0 L204.0,-7.9 L205.0,-7.6 L206.0,-6.7 L207.0,-5.6 L208.0,-6.1 L209.0,-5.9 L210.0,-7.3 L211.0,-6.5 L212.0,-6.2 L213.0,-4.6 L214.0,-4.1 L215.0,-3.9 L216.0,-3.4 L217.0,-3.0 L218.0,-4.3 L219.0,-8.4 L220.0,-8.4 L221.0,-7.8 L222.0,-8.3 L223.0,-9.4 L224.0,-9.8 L225.0,-10.5 L226.0,-9.5 L227.0,-7.8 L228.0,-7.0 L229.0,-6.9 L230.0,-8.1 L231.0,-8.9 L232.0,-9.2 L233.0,-7.9 L234.0,-5.4 L235.0,-4.8 L236.0,-3.9 L237.0,-3.2 L238.0,-0.8 L239.0,-0.9 L240.0,-0.8 L241.0,-0.8 L242.0,-0.8 L243.0,-0.9 L244.0,-0.9 L245.0,-0.8 L246.0,-0.8 L247.0,-0.8 L248.0,-0.9 L249.0,-0.8 L250.0,-0.8 L251.0,-0.8 L252.0,-6.5 L253.0,-8.6 L254.0,-9.5 L254.0,8.9 L253.0,9.6 L252.0,5.8 L251.0,0.9 L250.0,0.8 L249.0,0.9 L248.0,0.8 L247.0,0.9 L246.0,0.8 L245.0,0.9 L244.0,0.9 L243.0,0.8 L242.0,0.8 L241.0,0.8 L240.0,0.8 L239.0,0.8 L238.0,0.8 L237.0,3.2 L236.0,4.1 L235.0,4.5 L234.0,5.9 L233.0,7.4 L232.0,8.7 L231.0,9.1 L230.0,7.4 L229.0,7.2 L228.0,6.8 L227.0,7.9 L226.0,9.6 L225.0,10.1 L224.0,9.8 L223.0,9.3 L222.0,7.8 L221.0,7.4 L220.0,8.6 L219.0,8.4 L218.0,4.5 L217.0,3.0 L216.0,3.4 L215.0,3.7 L214.0,4.1 L213.0,5.1 L212.0,6.4 L211.0,7.1 L210.0,7.2 L209.0,6.4 L208.0,5.2 L207.0,5.6 L206.0,6.6 L205.0,7.8 L204.0,7.5 L203.0,7.9 L202.0,6.9 L201.0,6.4 L200.0,6.6 L199.0,7.5 L198.0,8.4 L197.0,9.6 L196.0,8.6 L195.0,8.1 L194.0,4.9 L193.0,3.1 L192.0,2.5 L191.0,4.2 L190.0,5.4 L189.0,6.6 L188.0,6.4 L187.0,5.8 L186.0,5.7 L185.0,7.4 L184.0,7.9 L183.0,8.3 L182.0,8.5 L181.0,8.5 L180.0,6.8 L179.0,6.4 L178.0,7.8 L177.0,9.7 L176.0,10.2 L175.0,10.1 L174.0,8.9 L173.0,7.5 L172.0,7.4 L171.0,9.0 L170.0,10.6 L169.0,9.8 L168.0,7.1 L167.0,3.7 L166.0,0.8 L165.0,0.8 L164.0,0.9 L163.0,0.8 L162.0,0.8 L161.0,0.8 L160.0,0.8 L159.0,0.8 L158.0,0.8 L157.0,0.8 L156.0,3.0 L155.0,4.7 L154.0,5.2 L153.0,5.4 L152.0,5.4 L151.0,5.9 L150.0,6.3 L149.0,8.6 L148.0,8.9 L147.0,8.4 L146.0,8.1 L145.0,7.3 L144.0,6.7 L143.0,8.1 L142.0,9.1 L141.0,9.5 L140.0,9.5 L139.0,8.5 L138.0,8.0 L137.0,8.3 L136.0,9.0 L135.0,10.9 L134.0,10.2 L133.0,11.5 L132.0,9.6 L131.0,8.6 L130.0,7.6 L129.0,5.5 L128.0,3.2 L127.0,4.4 L126.0,5.1 L125.0,5.0 L124.0,5.3 L123.0,5.5 L122.0,6.4 L121.0,7.8 L120.0,7.7 L119.0,8.3 L118.0,7.7 L117.0,6.6 L116.0,6.2 L115.0,8.1 L114.0,8.1 L113.0,9.3 L112.0,8.7 L111.0,8.6 L110.0,7.4 L109.0,7.4 L108.0,8.0 L107.0,9.5 L106.0,10.8 L105.0,9.3 L104.0,6.3 L103.0,3.1 L102.0,0.8 L101.0,0.8 L100.0,0.8 L99.0,0.9 L98.0,0.9 L97.0,0.8 L96.0,1.8 L95.0,3.1 L94.0,4.4 L93.0,5.8 L92.0,6.4 L91.0,7.0 L90.0,6.2 L89.0,5.7 L88.0,5.8 L87.0,6.9 L86.0,7.0 L85.0,8.6 L84.0,7.3 L83.0,6.5 L82.0,6.7 L81.0,6.1 L80.0,6.9 L79.0,8.5 L78.0,8.7 L77.0,6.2 L76.0,3.1 L75.0,2.9 L74.0,3.9 L73.0,4.7 L72.0,6.2 L71.0,6.9 L70.0,7.0 L69.0,6.2 L68.0,5.3 L67.0,5.3 L66.0,6.9 L65.0,8.0 L64.0,7.4 L63.0,7.3 L62.0,6.8 L61.0,6.1 L60.0,6.2 L59.0,7.5 L58.0,8.2 L57.0,8.7 L56.0,7.2 L55.0,4.3 L54.0,2.0 L53.0,3.3 L52.0,5.0 L51.0,6.6 L50.0,7.5 L49.0,7.1 L48.0,7.1 L47.0,6.1 L46.0,6.8 L45.0,7.2 L44.0,9.3 L43.0,9.0 L42.0,8.1 L41.0,7.5 L40.0,7.4 L39.0,7.2 L38.0,8.5 L37.0,10.4 L36.0,9.8 L35.0,10.2 L34.0,8.3 L33.0,6.1 L32.0,3.8 L31.0,2.6 L30.0,4.1 L29.0,5.6 L28.0,5.6 L27.0,5.9 L26.0,5.9 L25.0,5.9 L24.0,7.2 L23.0,9.0 L22.0,8.6 L21.0,9.1 L20.0,7.0 L19.0,6.5 L18.0,7.1 L17.0,8.8 L16.0,9.6 L15.0,9.7 L14.0,10.0 L13.0,8.5 L12.0,7.9 L11.0,8.3 L10.0,9.0 L9.0,10.5 L8.0,10.6 L7.0,10.1 L6.0,6.9 L5.0,4.3 L4.0,1.4 L3.0,0.8 L2.0,0.9 L1.0,0.9 L0.0,0.9Z" fill="#6a6a6a"/><rect x="0" y="-1" width="254" height="2" fill="#6a6a6a"/></g></svg>
<div style="left:1564px;top:960px;width:254px;height:32px;overflow:hidden;"><div class="t" style="left:6px;top:8px;font-size:19.5px;letter-spacing:0.9px;color:#262626;-webkit-text-stroke:0.25px #262626;">H&nbsp;HS1_120_Ebm_Li&nbsp;H&nbsp;HS1</div></div>
<div style="left:2057px;top:960px;width:397px;height:104px;background:#7dfb5b;"></div>
<div style="left:2057px;top:960px;width:2px;height:104px;background:#3f9a2e;"></div>
<div style="left:2057px;top:992px;width:397px;height:2px;background:#3f9a2e;"></div>
<svg style="position:absolute;left:2059px;top:996.5px;overflow:visible" width="395" height="28"><g transform="translate(0,14)"><path d="M0.0,-0.8 L1.0,-0.8 L2.0,-0.8 L3.0,-0.9 L4.0,-0.9 L5.0,-0.9 L6.0,-0.9 L7.0,-0.9 L8.0,-1.3 L9.0,-5.7 L10.0,-8.1 L11.0,-9.5 L12.0,-10.8 L13.0,-9.6 L14.0,-7.9 L15.0,-6.6 L16.0,-6.4 L17.0,-7.5 L18.0,-7.4 L19.0,-7.6 L20.0,-7.7 L21.0,-5.7 L22.0,-4.5 L23.0,-3.2 L24.0,-1.1 L25.0,-4.7 L26.0,-8.0 L27.0,-7.9 L28.0,-7.5 L29.0,-5.9 L30.0,-6.0 L31.0,-6.5 L32.0,-7.3 L33.0,-7.3 L34.0,-6.6 L35.0,-5.7 L36.0,-4.6 L37.0,-4.2 L38.0,-3.2 L39.0,-2.2 L40.0,-0.9 L41.0,-0.9 L42.0,-0.9 L43.0,-0.8 L44.0,-0.8 L45.0,-0.8 L46.0,-0.8 L47.0,-0.8 L48.0,-0.8 L49.0,-0.9 L50.0,-0.9 L51.0,-5.5 L52.0,-9.8 L53.0,-10.2 L54.0,-10.9 L55.0,-10.0 L56.0,-9.4 L57.0,-8.0 L58.0,-7.7 L59.0,-8.3 L60.0,-9.5 L61.0,-8.7 L62.0,-8.4 L63.0,-7.0 L64.0,-4.8 L65.0,-3.3 L66.0,-1.5 L67.0,-2.5 L68.0,-5.7 L69.0,-7.1 L70.0,-6.9 L71.0,-6.6 L72.0,-6.3 L73.0,-6.6 L74.0,-7.4 L75.0,-8.7 L76.0,-7.5 L77.0,-6.4 L78.0,-6.2 L79.0,-5.8 L80.0,-6.4 L81.0,-7.8 L82.0,-8.1 L83.0,-7.0 L84.0,-6.0 L85.0,-5.4 L86.0,-5.6 L87.0,-5.9 L88.0,-6.9 L89.0,-6.1 L90.0,-5.9 L91.0,-4.7 L92.0,-3.7 L93.0,-3.0 L94.0,-2.8 L95.0,-2.1 L96.0,-0.8 L97.0,-0.8 L98.0,-0.9 L99.0,-0.8 L100.0,-0.9 L101.0,-0.8 L102.0,-0.8 L103.0,-0.8 L104.0,-0.9 L105.0,-0.8 L106.0,-0.9 L107.0,-1.4 L108.0,-4.1 L109.0,-7.3 L110.0,-8.1 L111.0,-7.8 L112.0,-6.7 L113.0,-5.9 L114.0,-5.8 L115.0,-6.9 L116.0,-7.2 L117.0,-7.3 L118.0,-6.4 L119.0,-6.4 L120.0,-5.6 L121.0,-5.3 L122.0,-5.5 L123.0,-6.6 L124.0,-7.0 L125.0,-6.3 L126.0,-5.1 L127.0,-3.8 L128.0,-3.3 L129.0,-3.4 L130.0,-3.2 L131.0,-6.7 L132.0,-8.6 L133.0,-8.1 L134.0,-6.2 L135.0,-6.8 L136.0,-7.3 L137.0,-9.0 L138.0,-8.3 L139.0,-7.9 L140.0,-6.9 L141.0,-6.2 L142.0,-5.6 L143.0,-6.9 L144.0,-7.5 L145.0,-7.6 L146.0,-6.8 L147.0,-5.8 L148.0,-4.5 L149.0,-3.6 L150.0,-3.8 L151.0,-2.7 L152.0,-5.6 L153.0,-7.9 L154.0,-7.1 L155.0,-5.6 L156.0,-5.7 L157.0,-6.9 L158.0,-7.8 L159.0,-7.3 L160.0,-6.6 L161.0,-5.7 L162.0,-5.0 L163.0,-4.7 L164.0,-4.1 L165.0,-3.6 L166.0,-1.3 L167.0,-0.9 L168.0,-0.8 L169.0,-0.8 L170.0,-0.9 L171.0,-0.8 L172.0,-0.9 L173.0,-0.9 L174.0,-0.9 L175.0,-0.8 L176.0,-0.8 L177.0,-0.9 L178.0,-0.8 L179.0,-2.1 L180.0,-7.7 L181.0,-8.9 L182.0,-7.3 L183.0,-6.0 L184.0,-6.7 L185.0,-7.6 L186.0,-8.2 L187.0,-7.5 L188.0,-7.1 L189.0,-5.2 L190.0,-3.7 L191.0,-2.5 L192.0,-1.3 L193.0,-7.7 L194.0,-12.5 L195.0,-11.0 L196.0,-9.5 L197.0,-7.6 L198.0,-8.2 L199.0,-8.6 L200.0,-9.3 L201.0,-10.4 L202.0,-9.1 L203.0,-7.3 L204.0,-6.6 L205.0,-6.6 L206.0,-6.4 L207.0,-5.1 L208.0,-3.0 L209.0,-2.3 L210.0,-4.6 L211.0,-6.8 L212.0,-8.8 L213.0,-10.6 L214.0,-11.3 L215.0,-11.3 L216.0,-9.7 L217.0,-9.1 L218.0,-8.3 L219.0,-7.4 L220.0,-9.2 L221.0,-10.0 L222.0,-10.3 L223.0,-9.0 L224.0,-8.0 L225.0,-6.9 L226.0,-6.8 L227.0,-7.8 L228.0,-8.5 L229.0,-9.1 L230.0,-7.6 L231.0,-6.2 L232.0,-5.3 L233.0,-4.7 L234.0,-5.1 L235.0,-4.4 L236.0,-2.6 L237.0,-0.9 L238.0,-2.1 L239.0,-6.8 L240.0,-8.5 L241.0,-10.0 L242.0,-10.0 L243.0,-10.1 L244.0,-9.6 L245.0,-8.1 L246.0,-6.7 L247.0,-6.9 L248.0,-7.3 L249.0,-7.9 L250.0,-6.3 L251.0,-4.3 L252.0,-1.7 L253.0,-0.8 L254.0,-0.8 L255.0,-0.9 L256.0,-0.8 L257.0,-0.8 L258.0,-0.8 L259.0,-0.8 L260.0,-2.2 L261.0,-5.0 L262.0,-7.7 L263.0,-8.2 L264.0,-8.1 L265.0,-7.3 L266.0,-5.9 L267.0,-5.8 L268.0,-5.7 L269.0,-6.6 L270.0,-6.7 L271.0,-6.5 L272.0,-6.3 L273.0,-5.1 L274.0,-4.8 L275.0,-4.6 L276.0,-5.5 L277.0,-5.4 L278.0,-4.7 L279.0,-3.4 L280.0,-1.8 L281.0,-0.9 L282.0,-4.3 L283.0,-7.6 L284.0,-10.9 L285.0,-10.2 L286.0,-8.9 L287.0,-7.1 L288.0,-6.6 L289.0,-7.6 L290.0,-7.8 L291.0,-8.4 L292.0,-7.9 L293.0,-7.0 L294.0,-6.2 L295.0,-5.4 L296.0,-6.6 L297.0,-6.6 L298.0,-6.9 L299.0,-5.5 L300.0,-4.1 L301.0,-2.6 L302.0,-0.9 L303.0,-5.2 L304.0,-8.9 L305.0,-12.3 L306.0,-11.5 L307.0,-10.6 L308.0,-8.0 L309.0,-8.3 L310.0,-7.7 L311.0,-9.1 L312.0,-9.4 L313.0,-9.0 L314.0,-7.8 L315.0,-6.5 L316.0,-6.1 L317.0,-6.2 L318.0,-6.8 L319.0,-6.0 L320.0,-4.1 L321.0,-1.0 L322.0,-0.8 L323.0,-0.9 L324.0,-0.9 L325.0,-0.8 L326.0,-0.8 L327.0,-0.9 L328.0,-3.2 L329.0,-5.0 L330.0,-5.8 L331.0,-6.5 L332.0,-7.1 L333.0,-7.6 L334.0,-7.1 L335.0,-7.0 L336.0,-5.7 L337.0,-5.2 L338.0,-5.3 L339.0,-6.1 L340.0,-6.2 L341.0,-6.4 L342.0,-5.5 L343.0,-3.8 L344.0,-3.1 L345.0,-2.6 L346.0,-1.6 L347.0,-0.8 L348.0,-2.9 L349.0,-6.3 L350.0,-7.7 L351.0,-7.9 L352.0,-8.4 L353.0,-8.9 L354.0,-9.9 L355.0,-8.9 L356.0,-7.5 L357.0,-6.8 L358.0,-6.1 L359.0,-6.8 L360.0,-7.8 L361.0,-8.3 L362.0,-7.5 L363.0,-7.0 L364.0,-5.7 L365.0,-5.1 L366.0,-4.9 L367.0,-5.7 L368.0,-4.4 L369.0,-3.6 L370.0,-0.8 L371.0,-3.1 L372.0,-6.0 L373.0,-8.4 L374.0,-10.6 L375.0,-12.3 L376.0,-10.9 L377.0,-10.1 L378.0,-8.2 L379.0,-7.2 L380.0,-8.6 L381.0,-8.9 L382.0,-9.7 L383.0,-9.8 L384.0,-7.7 L385.0,-6.7 L386.0,-6.7 L387.0,-7.2 L388.0,-8.3 L389.0,-8.4 L390.0,-7.4 L391.0,-6.9 L392.0,-5.3 L393.0,-4.0 L394.0,-3.9 L395.0,-3.0 L395.0,2.8 L394.0,3.6 L393.0,4.6 L392.0,5.5 L391.0,6.5 L390.0,8.1 L389.0,8.5 L388.0,8.1 L387.0,7.7 L386.0,7.1 L385.0,7.3 L384.0,8.7 L383.0,9.5 L382.0,10.0 L381.0,9.7 L380.0,7.8 L379.0,7.2 L378.0,7.9 L377.0,8.9 L376.0,11.6 L375.0,11.1 L374.0,10.8 L373.0,8.3 L372.0,6.2 L371.0,3.0 L370.0,0.9 L369.0,3.4 L368.0,5.1 L367.0,5.2 L366.0,5.6 L365.0,5.0 L364.0,5.8 L363.0,6.8 L362.0,8.5 L361.0,8.8 L360.0,8.4 L359.0,6.7 L358.0,6.4 L357.0,6.7 L356.0,7.7 L355.0,9.3 L354.0,9.3 L353.0,9.7 L352.0,7.8 L351.0,7.6 L350.0,7.2 L349.0,6.5 L348.0,2.7 L347.0,0.8 L346.0,1.7 L345.0,2.6 L344.0,3.5 L343.0,4.0 L342.0,5.3 L341.0,6.5 L340.0,6.5 L339.0,6.1 L338.0,5.9 L337.0,4.9 L336.0,5.2 L335.0,6.1 L334.0,8.0 L333.0,7.9 L332.0,7.0 L331.0,6.0 L330.0,6.5 L329.0,5.2 L328.0,2.9 L327.0,0.9 L326.0,0.8 L325.0,0.8 L324.0,0.9 L323.0,0.8 L322.0,0.8 L321.0,0.9 L320.0,4.2 L319.0,6.3 L318.0,6.2 L317.0,6.6 L316.0,6.4 L315.0,6.9 L314.0,8.5 L313.0,9.0 L312.0,10.6 L311.0,9.8 L310.0,8.2 L309.0,8.2 L308.0,7.8 L307.0,9.6 L306.0,12.1 L305.0,10.8 L304.0,10.2 L303.0,5.3 L302.0,0.8 L301.0,2.3 L300.0,4.2 L299.0,5.6 L298.0,6.6 L297.0,6.8 L296.0,5.6 L295.0,5.7 L294.0,5.9 L293.0,7.5 L292.0,8.2 L291.0,9.0 L290.0,7.8 L289.0,6.7 L288.0,6.8 L287.0,7.6 L286.0,8.7 L285.0,9.1 L284.0,10.4 L283.0,8.1 L282.0,4.4 L281.0,0.8 L280.0,1.9 L279.0,3.6 L278.0,4.7 L277.0,4.9 L276.0,5.1 L275.0,5.1 L274.0,4.5 L273.0,5.4 L272.0,6.5 L271.0,6.4 L270.0,7.7 L269.0,6.8 L268.0,6.1 L267.0,5.2 L266.0,6.5 L265.0,7.7 L264.0,7.9 L263.0,8.0 L262.0,7.7 L261.0,4.9 L260.0,2.2 L259.0,0.8 L258.0,0.8 L257.0,0.8 L256.0,0.8 L255.0,0.8 L254.0,0.8 L253.0,0.9 L252.0,1.6 L251.0,4.5 L250.0,7.0 L249.0,7.4 L248.0,7.7 L247.0,7.1 L246.0,6.6 L245.0,7.2 L244.0,9.5 L243.0,10.1 L242.0,10.8 L241.0,10.4 L240.0,8.3 L239.0,6.6 L238.0,2.1 L237.0,0.9 L236.0,2.5 L235.0,4.0 L234.0,4.5 L233.0,5.0 L232.0,5.2 L231.0,6.7 L230.0,8.0 L229.0,8.6 L228.0,8.7 L227.0,8.0 L226.0,7.6 L225.0,6.5 L224.0,7.2 L223.0,9.0 L222.0,10.7 L221.0,9.9 L220.0,9.0 L219.0,8.6 L218.0,7.8 L217.0,9.2 L216.0,10.1 L215.0,10.5 L214.0,11.1 L213.0,9.7 L212.0,9.1 L211.0,6.9 L210.0,4.7 L209.0,2.3 L208.0,2.8 L207.0,5.6 L206.0,6.2 L205.0,5.8 L204.0,6.1 L203.0,7.5 L202.0,8.7 L201.0,9.3 L200.0,9.3 L199.0,9.4 L198.0,8.0 L197.0,8.5 L196.0,9.1 L195.0,10.2 L194.0,12.1 L193.0,8.5 L192.0,1.3 L191.0,2.7 L190.0,3.8 L189.0,5.0 L188.0,7.2 L187.0,8.2 L186.0,7.1 L185.0,7.6 L184.0,6.9 L183.0,6.0 L182.0,7.2 L181.0,8.2 L180.0,7.6 L179.0,2.4 L178.0,0.9 L177.0,0.9 L176.0,0.8 L175.0,0.8 L174.0,0.8 L173.0,0.9 L172.0,0.8 L171.0,0.8 L170.0,0.8 L169.0,0.8 L168.0,0.8 L167.0,0.8 L166.0,1.1 L165.0,3.4 L164.0,4.5 L163.0,4.4 L162.0,5.0 L161.0,5.9 L160.0,6.9 L159.0,6.9 L158.0,7.9 L157.0,6.2 L156.0,6.0 L155.0,6.2 L154.0,6.8 L153.0,7.9 L152.0,6.0 L151.0,2.7 L150.0,3.3 L149.0,4.1 L148.0,4.1 L147.0,5.0 L146.0,6.2 L145.0,6.9 L144.0,7.1 L143.0,6.4 L142.0,5.6 L141.0,5.8 L140.0,6.4 L139.0,7.3 L138.0,8.0 L137.0,7.9 L136.0,8.1 L135.0,7.2 L134.0,7.2 L133.0,7.1 L132.0,7.9 L131.0,6.8 L130.0,2.8 L129.0,3.5 L128.0,3.7 L127.0,4.2 L126.0,4.8 L125.0,5.9 L124.0,6.7 L123.0,5.9 L122.0,5.3 L121.0,4.9 L120.0,5.5 L119.0,6.0 L118.0,7.4 L117.0,7.0 L116.0,7.3 L115.0,6.2 L114.0,5.5 L113.0,5.8 L112.0,7.2 L111.0,7.3 L110.0,8.8 L109.0,6.7 L108.0,4.4 L107.0,1.2 L106.0,0.8 L105.0,0.8 L104.0,0.8 L103.0,0.8 L102.0,0.9 L101.0,0.8 L100.0,0.9 L99.0,0.8 L98.0,0.8 L97.0,0.9 L96.0,0.8 L95.0,2.0 L94.0,2.6 L93.0,2.9 L92.0,3.8 L91.0,4.9 L90.0,5.6 L89.0,6.2 L88.0,6.1 L87.0,5.6 L86.0,4.8 L85.0,5.0 L84.0,6.5 L83.0,7.6 L82.0,7.3 L81.0,6.7 L80.0,6.5 L79.0,6.2 L78.0,6.4 L77.0,6.9 L76.0,7.3 L75.0,7.8 L74.0,7.9 L73.0,7.6 L72.0,6.5 L71.0,6.4 L70.0,7.2 L69.0,6.8 L68.0,5.2 L67.0,2.5 L66.0,1.3 L65.0,3.3 L64.0,4.8 L63.0,6.8 L62.0,8.0 L61.0,8.6 L60.0,8.6 L59.0,8.2 L58.0,6.8 L57.0,8.1 L56.0,9.2 L55.0,10.7 L54.0,11.8 L53.0,10.1 L52.0,9.4 L51.0,5.7 L50.0,0.8 L49.0,0.9 L48.0,0.9 L47.0,0.9 L46.0,0.9 L45.0,0.8 L44.0,0.8 L43.0,0.8 L42.0,0.8 L41.0,0.8 L40.0,0.8 L39.0,1.9 L38.0,3.3 L37.0,4.1 L36.0,4.6 L35.0,5.2 L34.0,6.6 L33.0,6.9 L32.0,6.7 L31.0,6.3 L30.0,6.1 L29.0,6.3 L28.0,7.5 L27.0,7.9 L26.0,8.0 L25.0,4.9 L24.0,1.1 L23.0,3.0 L22.0,4.0 L21.0,6.3 L20.0,7.6 L19.0,7.9 L18.0,8.4 L17.0,6.5 L16.0,6.8 L15.0,6.8 L14.0,8.1 L13.0,9.0 L12.0,10.3 L11.0,9.0 L10.0,8.2 L9.0,5.5 L8.0,1.3 L7.0,0.8 L6.0,0.8 L5.0,0.9 L4.0,0.8 L3.0,0.8 L2.0,0.8 L1.0,0.9 L0.0,0.8Z" fill="#1b2a18"/><rect x="0" y="-1" width="395" height="2" fill="#1b2a18"/></g></svg>
<svg style="position:absolute;left:2059px;top:1032.8px;overflow:visible" width="395" height="28"><g transform="translate(0,14)"><path d="M0.0,-0.8 L1.0,-0.8 L2.0,-0.8 L3.0,-0.9 L4.0,-0.9 L5.0,-0.9 L6.0,-0.9 L7.0,-0.9 L8.0,-1.3 L9.0,-5.7 L10.0,-8.1 L11.0,-9.5 L12.0,-10.8 L13.0,-9.6 L14.0,-7.9 L15.0,-6.6 L16.0,-6.4 L17.0,-7.5 L18.0,-7.4 L19.0,-7.6 L20.0,-7.7 L21.0,-5.7 L22.0,-4.5 L23.0,-3.2 L24.0,-1.1 L25.0,-4.7 L26.0,-8.0 L27.0,-7.9 L28.0,-7.5 L29.0,-5.9 L30.0,-6.0 L31.0,-6.5 L32.0,-7.3 L33.0,-7.3 L34.0,-6.6 L35.0,-5.7 L36.0,-4.6 L37.0,-4.2 L38.0,-3.2 L39.0,-2.2 L40.0,-0.9 L41.0,-0.9 L42.0,-0.9 L43.0,-0.8 L44.0,-0.8 L45.0,-0.8 L46.0,-0.8 L47.0,-0.8 L48.0,-0.8 L49.0,-0.9 L50.0,-0.9 L51.0,-5.5 L52.0,-9.8 L53.0,-10.2 L54.0,-10.9 L55.0,-10.0 L56.0,-9.4 L57.0,-8.0 L58.0,-7.7 L59.0,-8.3 L60.0,-9.5 L61.0,-8.7 L62.0,-8.4 L63.0,-7.0 L64.0,-4.8 L65.0,-3.3 L66.0,-1.5 L67.0,-2.5 L68.0,-5.7 L69.0,-7.1 L70.0,-6.9 L71.0,-6.6 L72.0,-6.3 L73.0,-6.6 L74.0,-7.4 L75.0,-8.7 L76.0,-7.5 L77.0,-6.4 L78.0,-6.2 L79.0,-5.8 L80.0,-6.4 L81.0,-7.8 L82.0,-8.1 L83.0,-7.0 L84.0,-6.0 L85.0,-5.4 L86.0,-5.6 L87.0,-5.9 L88.0,-6.9 L89.0,-6.1 L90.0,-5.9 L91.0,-4.7 L92.0,-3.7 L93.0,-3.0 L94.0,-2.8 L95.0,-2.1 L96.0,-0.8 L97.0,-0.8 L98.0,-0.9 L99.0,-0.8 L100.0,-0.9 L101.0,-0.8 L102.0,-0.8 L103.0,-0.8 L104.0,-0.9 L105.0,-0.8 L106.0,-0.9 L107.0,-1.4 L108.0,-4.1 L109.0,-7.3 L110.0,-8.1 L111.0,-7.8 L112.0,-6.7 L113.0,-5.9 L114.0,-5.8 L115.0,-6.9 L116.0,-7.2 L117.0,-7.3 L118.0,-6.4 L119.0,-6.4 L120.0,-5.6 L121.0,-5.3 L122.0,-5.5 L123.0,-6.6 L124.0,-7.0 L125.0,-6.3 L126.0,-5.1 L127.0,-3.8 L128.0,-3.3 L129.0,-3.4 L130.0,-3.2 L131.0,-6.7 L132.0,-8.6 L133.0,-8.1 L134.0,-6.2 L135.0,-6.8 L136.0,-7.3 L137.0,-9.0 L138.0,-8.3 L139.0,-7.9 L140.0,-6.9 L141.0,-6.2 L142.0,-5.6 L143.0,-6.9 L144.0,-7.5 L145.0,-7.6 L146.0,-6.8 L147.0,-5.8 L148.0,-4.5 L149.0,-3.6 L150.0,-3.8 L151.0,-2.7 L152.0,-5.6 L153.0,-7.9 L154.0,-7.1 L155.0,-5.6 L156.0,-5.7 L157.0,-6.9 L158.0,-7.8 L159.0,-7.3 L160.0,-6.6 L161.0,-5.7 L162.0,-5.0 L163.0,-4.7 L164.0,-4.1 L165.0,-3.6 L166.0,-1.3 L167.0,-0.9 L168.0,-0.8 L169.0,-0.8 L170.0,-0.9 L171.0,-0.8 L172.0,-0.9 L173.0,-0.9 L174.0,-0.9 L175.0,-0.8 L176.0,-0.8 L177.0,-0.9 L178.0,-0.8 L179.0,-2.1 L180.0,-7.7 L181.0,-8.9 L182.0,-7.3 L183.0,-6.0 L184.0,-6.7 L185.0,-7.6 L186.0,-8.2 L187.0,-7.5 L188.0,-7.1 L189.0,-5.2 L190.0,-3.7 L191.0,-2.5 L192.0,-1.3 L193.0,-7.7 L194.0,-12.5 L195.0,-11.0 L196.0,-9.5 L197.0,-7.6 L198.0,-8.2 L199.0,-8.6 L200.0,-9.3 L201.0,-10.4 L202.0,-9.1 L203.0,-7.3 L204.0,-6.6 L205.0,-6.6 L206.0,-6.4 L207.0,-5.1 L208.0,-3.0 L209.0,-2.3 L210.0,-4.6 L211.0,-6.8 L212.0,-8.8 L213.0,-10.6 L214.0,-11.3 L215.0,-11.3 L216.0,-9.7 L217.0,-9.1 L218.0,-8.3 L219.0,-7.4 L220.0,-9.2 L221.0,-10.0 L222.0,-10.3 L223.0,-9.0 L224.0,-8.0 L225.0,-6.9 L226.0,-6.8 L227.0,-7.8 L228.0,-8.5 L229.0,-9.1 L230.0,-7.6 L231.0,-6.2 L232.0,-5.3 L233.0,-4.7 L234.0,-5.1 L235.0,-4.4 L236.0,-2.6 L237.0,-0.9 L238.0,-2.1 L239.0,-6.8 L240.0,-8.5 L241.0,-10.0 L242.0,-10.0 L243.0,-10.1 L244.0,-9.6 L245.0,-8.1 L246.0,-6.7 L247.0,-6.9 L248.0,-7.3 L249.0,-7.9 L250.0,-6.3 L251.0,-4.3 L252.0,-1.7 L253.0,-0.8 L254.0,-0.8 L255.0,-0.9 L256.0,-0.8 L257.0,-0.8 L258.0,-0.8 L259.0,-0.8 L260.0,-2.2 L261.0,-5.0 L262.0,-7.7 L263.0,-8.2 L264.0,-8.1 L265.0,-7.3 L266.0,-5.9 L267.0,-5.8 L268.0,-5.7 L269.0,-6.6 L270.0,-6.7 L271.0,-6.5 L272.0,-6.3 L273.0,-5.1 L274.0,-4.8 L275.0,-4.6 L276.0,-5.5 L277.0,-5.4 L278.0,-4.7 L279.0,-3.4 L280.0,-1.8 L281.0,-0.9 L282.0,-4.3 L283.0,-7.6 L284.0,-10.9 L285.0,-10.2 L286.0,-8.9 L287.0,-7.1 L288.0,-6.6 L289.0,-7.6 L290.0,-7.8 L291.0,-8.4 L292.0,-7.9 L293.0,-7.0 L294.0,-6.2 L295.0,-5.4 L296.0,-6.6 L297.0,-6.6 L298.0,-6.9 L299.0,-5.5 L300.0,-4.1 L301.0,-2.6 L302.0,-0.9 L303.0,-5.2 L304.0,-8.9 L305.0,-12.3 L306.0,-11.5 L307.0,-10.6 L308.0,-8.0 L309.0,-8.3 L310.0,-7.7 L311.0,-9.1 L312.0,-9.4 L313.0,-9.0 L314.0,-7.8 L315.0,-6.5 L316.0,-6.1 L317.0,-6.2 L318.0,-6.8 L319.0,-6.0 L320.0,-4.1 L321.0,-1.0 L322.0,-0.8 L323.0,-0.9 L324.0,-0.9 L325.0,-0.8 L326.0,-0.8 L327.0,-0.9 L328.0,-3.2 L329.0,-5.0 L330.0,-5.8 L331.0,-6.5 L332.0,-7.1 L333.0,-7.6 L334.0,-7.1 L335.0,-7.0 L336.0,-5.7 L337.0,-5.2 L338.0,-5.3 L339.0,-6.1 L340.0,-6.2 L341.0,-6.4 L342.0,-5.5 L343.0,-3.8 L344.0,-3.1 L345.0,-2.6 L346.0,-1.6 L347.0,-0.8 L348.0,-2.9 L349.0,-6.3 L350.0,-7.7 L351.0,-7.9 L352.0,-8.4 L353.0,-8.9 L354.0,-9.9 L355.0,-8.9 L356.0,-7.5 L357.0,-6.8 L358.0,-6.1 L359.0,-6.8 L360.0,-7.8 L361.0,-8.3 L362.0,-7.5 L363.0,-7.0 L364.0,-5.7 L365.0,-5.1 L366.0,-4.9 L367.0,-5.7 L368.0,-4.4 L369.0,-3.6 L370.0,-0.8 L371.0,-3.1 L372.0,-6.0 L373.0,-8.4 L374.0,-10.6 L375.0,-12.3 L376.0,-10.9 L377.0,-10.1 L378.0,-8.2 L379.0,-7.2 L380.0,-8.6 L381.0,-8.9 L382.0,-9.7 L383.0,-9.8 L384.0,-7.7 L385.0,-6.7 L386.0,-6.7 L387.0,-7.2 L388.0,-8.3 L389.0,-8.4 L390.0,-7.4 L391.0,-6.9 L392.0,-5.3 L393.0,-4.0 L394.0,-3.9 L395.0,-3.0 L395.0,2.8 L394.0,3.6 L393.0,4.6 L392.0,5.5 L391.0,6.5 L390.0,8.1 L389.0,8.5 L388.0,8.1 L387.0,7.7 L386.0,7.1 L385.0,7.3 L384.0,8.7 L383.0,9.5 L382.0,10.0 L381.0,9.7 L380.0,7.8 L379.0,7.2 L378.0,7.9 L377.0,8.9 L376.0,11.6 L375.0,11.1 L374.0,10.8 L373.0,8.3 L372.0,6.2 L371.0,3.0 L370.0,0.9 L369.0,3.4 L368.0,5.1 L367.0,5.2 L366.0,5.6 L365.0,5.0 L364.0,5.8 L363.0,6.8 L362.0,8.5 L361.0,8.8 L360.0,8.4 L359.0,6.7 L358.0,6.4 L357.0,6.7 L356.0,7.7 L355.0,9.3 L354.0,9.3 L353.0,9.7 L352.0,7.8 L351.0,7.6 L350.0,7.2 L349.0,6.5 L348.0,2.7 L347.0,0.8 L346.0,1.7 L345.0,2.6 L344.0,3.5 L343.0,4.0 L342.0,5.3 L341.0,6.5 L340.0,6.5 L339.0,6.1 L338.0,5.9 L337.0,4.9 L336.0,5.2 L335.0,6.1 L334.0,8.0 L333.0,7.9 L332.0,7.0 L331.0,6.0 L330.0,6.5 L329.0,5.2 L328.0,2.9 L327.0,0.9 L326.0,0.8 L325.0,0.8 L324.0,0.9 L323.0,0.8 L322.0,0.8 L321.0,0.9 L320.0,4.2 L319.0,6.3 L318.0,6.2 L317.0,6.6 L316.0,6.4 L315.0,6.9 L314.0,8.5 L313.0,9.0 L312.0,10.6 L311.0,9.8 L310.0,8.2 L309.0,8.2 L308.0,7.8 L307.0,9.6 L306.0,12.1 L305.0,10.8 L304.0,10.2 L303.0,5.3 L302.0,0.8 L301.0,2.3 L300.0,4.2 L299.0,5.6 L298.0,6.6 L297.0,6.8 L296.0,5.6 L295.0,5.7 L294.0,5.9 L293.0,7.5 L292.0,8.2 L291.0,9.0 L290.0,7.8 L289.0,6.7 L288.0,6.8 L287.0,7.6 L286.0,8.7 L285.0,9.1 L284.0,10.4 L283.0,8.1 L282.0,4.4 L281.0,0.8 L280.0,1.9 L279.0,3.6 L278.0,4.7 L277.0,4.9 L276.0,5.1 L275.0,5.1 L274.0,4.5 L273.0,5.4 L272.0,6.5 L271.0,6.4 L270.0,7.7 L269.0,6.8 L268.0,6.1 L267.0,5.2 L266.0,6.5 L265.0,7.7 L264.0,7.9 L263.0,8.0 L262.0,7.7 L261.0,4.9 L260.0,2.2 L259.0,0.8 L258.0,0.8 L257.0,0.8 L256.0,0.8 L255.0,0.8 L254.0,0.8 L253.0,0.9 L252.0,1.6 L251.0,4.5 L250.0,7.0 L249.0,7.4 L248.0,7.7 L247.0,7.1 L246.0,6.6 L245.0,7.2 L244.0,9.5 L243.0,10.1 L242.0,10.8 L241.0,10.4 L240.0,8.3 L239.0,6.6 L238.0,2.1 L237.0,0.9 L236.0,2.5 L235.0,4.0 L234.0,4.5 L233.0,5.0 L232.0,5.2 L231.0,6.7 L230.0,8.0 L229.0,8.6 L228.0,8.7 L227.0,8.0 L226.0,7.6 L225.0,6.5 L224.0,7.2 L223.0,9.0 L222.0,10.7 L221.0,9.9 L220.0,9.0 L219.0,8.6 L218.0,7.8 L217.0,9.2 L216.0,10.1 L215.0,10.5 L214.0,11.1 L213.0,9.7 L212.0,9.1 L211.0,6.9 L210.0,4.7 L209.0,2.3 L208.0,2.8 L207.0,5.6 L206.0,6.2 L205.0,5.8 L204.0,6.1 L203.0,7.5 L202.0,8.7 L201.0,9.3 L200.0,9.3 L199.0,9.4 L198.0,8.0 L197.0,8.5 L196.0,9.1 L195.0,10.2 L194.0,12.1 L193.0,8.5 L192.0,1.3 L191.0,2.7 L190.0,3.8 L189.0,5.0 L188.0,7.2 L187.0,8.2 L186.0,7.1 L185.0,7.6 L184.0,6.9 L183.0,6.0 L182.0,7.2 L181.0,8.2 L180.0,7.6 L179.0,2.4 L178.0,0.9 L177.0,0.9 L176.0,0.8 L175.0,0.8 L174.0,0.8 L173.0,0.9 L172.0,0.8 L171.0,0.8 L170.0,0.8 L169.0,0.8 L168.0,0.8 L167.0,0.8 L166.0,1.1 L165.0,3.4 L164.0,4.5 L163.0,4.4 L162.0,5.0 L161.0,5.9 L160.0,6.9 L159.0,6.9 L158.0,7.9 L157.0,6.2 L156.0,6.0 L155.0,6.2 L154.0,6.8 L153.0,7.9 L152.0,6.0 L151.0,2.7 L150.0,3.3 L149.0,4.1 L148.0,4.1 L147.0,5.0 L146.0,6.2 L145.0,6.9 L144.0,7.1 L143.0,6.4 L142.0,5.6 L141.0,5.8 L140.0,6.4 L139.0,7.3 L138.0,8.0 L137.0,7.9 L136.0,8.1 L135.0,7.2 L134.0,7.2 L133.0,7.1 L132.0,7.9 L131.0,6.8 L130.0,2.8 L129.0,3.5 L128.0,3.7 L127.0,4.2 L126.0,4.8 L125.0,5.9 L124.0,6.7 L123.0,5.9 L122.0,5.3 L121.0,4.9 L120.0,5.5 L119.0,6.0 L118.0,7.4 L117.0,7.0 L116.0,7.3 L115.0,6.2 L114.0,5.5 L113.0,5.8 L112.0,7.2 L111.0,7.3 L110.0,8.8 L109.0,6.7 L108.0,4.4 L107.0,1.2 L106.0,0.8 L105.0,0.8 L104.0,0.8 L103.0,0.8 L102.0,0.9 L101.0,0.8 L100.0,0.9 L99.0,0.8 L98.0,0.8 L97.0,0.9 L96.0,0.8 L95.0,2.0 L94.0,2.6 L93.0,2.9 L92.0,3.8 L91.0,4.9 L90.0,5.6 L89.0,6.2 L88.0,6.1 L87.0,5.6 L86.0,4.8 L85.0,5.0 L84.0,6.5 L83.0,7.6 L82.0,7.3 L81.0,6.7 L80.0,6.5 L79.0,6.2 L78.0,6.4 L77.0,6.9 L76.0,7.3 L75.0,7.8 L74.0,7.9 L73.0,7.6 L72.0,6.5 L71.0,6.4 L70.0,7.2 L69.0,6.8 L68.0,5.2 L67.0,2.5 L66.0,1.3 L65.0,3.3 L64.0,4.8 L63.0,6.8 L62.0,8.0 L61.0,8.6 L60.0,8.6 L59.0,8.2 L58.0,6.8 L57.0,8.1 L56.0,9.2 L55.0,10.7 L54.0,11.8 L53.0,10.1 L52.0,9.4 L51.0,5.7 L50.0,0.8 L49.0,0.9 L48.0,0.9 L47.0,0.9 L46.0,0.9 L45.0,0.8 L44.0,0.8 L43.0,0.8 L42.0,0.8 L41.0,0.8 L40.0,0.8 L39.0,1.9 L38.0,3.3 L37.0,4.1 L36.0,4.6 L35.0,5.2 L34.0,6.6 L33.0,6.9 L32.0,6.7 L31.0,6.3 L30.0,6.1 L29.0,6.3 L28.0,7.5 L27.0,7.9 L26.0,8.0 L25.0,4.9 L24.0,1.1 L23.0,3.0 L22.0,4.0 L21.0,6.3 L20.0,7.6 L19.0,7.9 L18.0,8.4 L17.0,6.5 L16.0,6.8 L15.0,6.8 L14.0,8.1 L13.0,9.0 L12.0,10.3 L11.0,9.0 L10.0,8.2 L9.0,5.5 L8.0,1.3 L7.0,0.8 L6.0,0.8 L5.0,0.9 L4.0,0.8 L3.0,0.8 L2.0,0.8 L1.0,0.9 L0.0,0.8Z" fill="#1b2a18"/><rect x="0" y="-1" width="395" height="2" fill="#1b2a18"/></g></svg>
<div style="left:2057px;top:960px;width:397px;height:32px;overflow:hidden;"><div class="t" style="left:7px;top:8px;font-size:19.5px;letter-spacing:0.9px;color:#1b3514;-webkit-text-stroke:0.25px #1b3514;">HS</div></div>
<div style="left:2091px;top:960px;width:1.5px;height:104px;background:#3f9a2e;"></div>
<div style="left:2097px;top:960px;width:1.5px;height:104px;background:#3f9a2e;"></div>
<div style="left:2097px;top:960px;width:350px;height:32px;overflow:hidden;"><div class="t" style="left:5px;top:8px;font-size:19.5px;letter-spacing:0.9px;color:#1b3514;-webkit-text-stroke:0.25px #1b3514;">HS1_120_Ebm_Lifting_Lead</div></div>
<div style="left:2692px;top:960px;width:54px;height:33px;background:#656565;"></div>
<svg style="position:absolute;left:2692px;top:996.5px;overflow:visible" width="54" height="28"><g transform="translate(0,14)"><path d="M0.0,-0.8 L1.0,-0.9 L2.0,-0.8 L3.0,-0.9 L4.0,-0.8 L5.0,-0.8 L6.0,-0.8 L7.0,-0.8 L8.0,-0.9 L9.0,-0.8 L10.0,-0.9 L11.0,-0.9 L12.0,-0.8 L13.0,-0.8 L14.0,-0.9 L15.0,-0.8 L16.0,-0.9 L17.0,-7.4 L18.0,-8.5 L19.0,-9.1 L20.0,-9.8 L21.0,-11.0 L22.0,-9.1 L23.0,-8.3 L24.0,-5.9 L25.0,-5.0 L26.0,-8.4 L27.0,-9.6 L28.0,-8.7 L29.0,-8.8 L30.0,-7.2 L31.0,-5.6 L32.0,-4.7 L33.0,-3.0 L34.0,-0.9 L35.0,-0.8 L36.0,-0.9 L37.0,-0.8 L38.0,-0.8 L39.0,-0.8 L40.0,-0.8 L41.0,-0.9 L42.0,-0.8 L43.0,-0.9 L44.0,-0.8 L45.0,-0.8 L46.0,-0.8 L47.0,-0.9 L48.0,-0.8 L49.0,-0.8 L50.0,-0.9 L51.0,-0.9 L52.0,-0.9 L53.0,-0.9 L54.0,-0.8 L54.0,0.8 L53.0,0.8 L52.0,0.8 L51.0,0.8 L50.0,0.8 L49.0,0.8 L48.0,0.9 L47.0,0.8 L46.0,0.8 L45.0,0.9 L44.0,0.8 L43.0,0.9 L42.0,0.8 L41.0,0.8 L40.0,0.8 L39.0,0.9 L38.0,0.8 L37.0,0.8 L36.0,0.8 L35.0,0.9 L34.0,0.8 L33.0,2.9 L32.0,4.9 L31.0,5.9 L30.0,7.0 L29.0,8.8 L28.0,9.3 L27.0,8.6 L26.0,8.4 L25.0,5.7 L24.0,6.5 L23.0,8.2 L22.0,9.5 L21.0,11.3 L20.0,9.8 L19.0,9.6 L18.0,9.6 L17.0,7.4 L16.0,0.8 L15.0,0.9 L14.0,0.8 L13.0,0.8 L12.0,0.8 L11.0,0.9 L10.0,0.8 L9.0,0.9 L8.0,0.8 L7.0,0.9 L6.0,0.8 L5.0,0.8 L4.0,0.8 L3.0,0.9 L2.0,0.8 L1.0,0.8 L0.0,0.9Z" fill="#6a6a6a"/><rect x="0" y="-1" width="54" height="2" fill="#6a6a6a"/></g></svg>
<svg style="position:absolute;left:2692px;top:1032.8px;overflow:visible" width="54" height="28"><g transform="translate(0,14)"><path d="M0.0,-0.8 L1.0,-0.9 L2.0,-0.8 L3.0,-0.9 L4.0,-0.8 L5.0,-0.8 L6.0,-0.8 L7.0,-0.8 L8.0,-0.9 L9.0,-0.8 L10.0,-0.9 L11.0,-0.9 L12.0,-0.8 L13.0,-0.8 L14.0,-0.9 L15.0,-0.8 L16.0,-0.9 L17.0,-7.4 L18.0,-8.5 L19.0,-9.1 L20.0,-9.8 L21.0,-11.0 L22.0,-9.1 L23.0,-8.3 L24.0,-5.9 L25.0,-5.0 L26.0,-8.4 L27.0,-9.6 L28.0,-8.7 L29.0,-8.8 L30.0,-7.2 L31.0,-5.6 L32.0,-4.7 L33.0,-3.0 L34.0,-0.9 L35.0,-0.8 L36.0,-0.9 L37.0,-0.8 L38.0,-0.8 L39.0,-0.8 L40.0,-0.8 L41.0,-0.9 L42.0,-0.8 L43.0,-0.9 L44.0,-0.8 L45.0,-0.8 L46.0,-0.8 L47.0,-0.9 L48.0,-0.8 L49.0,-0.8 L50.0,-0.9 L51.0,-0.9 L52.0,-0.9 L53.0,-0.9 L54.0,-0.8 L54.0,0.8 L53.0,0.8 L52.0,0.8 L51.0,0.8 L50.0,0.8 L49.0,0.8 L48.0,0.9 L47.0,0.8 L46.0,0.8 L45.0,0.9 L44.0,0.8 L43.0,0.9 L42.0,0.8 L41.0,0.8 L40.0,0.8 L39.0,0.9 L38.0,0.8 L37.0,0.8 L36.0,0.8 L35.0,0.9 L34.0,0.8 L33.0,2.9 L32.0,4.9 L31.0,5.9 L30.0,7.0 L29.0,8.8 L28.0,9.3 L27.0,8.6 L26.0,8.4 L25.0,5.7 L24.0,6.5 L23.0,8.2 L22.0,9.5 L21.0,11.3 L20.0,9.8 L19.0,9.6 L18.0,9.6 L17.0,7.4 L16.0,0.8 L15.0,0.9 L14.0,0.8 L13.0,0.8 L12.0,0.8 L11.0,0.9 L10.0,0.8 L9.0,0.9 L8.0,0.8 L7.0,0.9 L6.0,0.8 L5.0,0.8 L4.0,0.8 L3.0,0.9 L2.0,0.8 L1.0,0.8 L0.0,0.9Z" fill="#6a6a6a"/><rect x="0" y="-1" width="54" height="2" fill="#6a6a6a"/></g></svg>
<div style="left:2701.8px;top:1005px;width:2px;height:11px;background:#6a6a6a;"></div>
<div style="left:2701.8px;top:1041px;width:2px;height:11px;background:#6a6a6a;"></div>
<div style="left:2692px;top:960px;width:54px;height:32px;overflow:hidden;"><div class="t" style="left:6px;top:8px;font-size:19.5px;letter-spacing:0.9px;color:#262626;-webkit-text-stroke:0.25px #262626;">I HS1</div></div>
<div style="left:1575px;top:1068px;width:53px;height:34px;background:#7dfb5b;border:1.5px solid #3f9a2e;"></div>
<div style="left:1596px;top:1068px;width:1.5px;height:34px;background:#3f9a2e;"></div>
<div style="left:1607px;top:1068px;width:1.5px;height:34px;background:#3f9a2e;"></div>
<div style="left:1575px;top:1068px;width:53px;height:34px;overflow:hidden;"><div class="t" style="left:6px;top:8px;font-size:19.5px;letter-spacing:0.9px;color:#1b3514;-webkit-text-stroke:0.25px #1b3514;">(|&nbsp;&nbsp;(</div></div>
<div style="left:1667px;top:1068px;width:49px;height:34px;background:#7dfb5b;border:1.5px solid #3f9a2e;"></div>
<div style="left:1683px;top:1068px;width:1.5px;height:34px;background:#3f9a2e;"></div>
<div style="left:1700px;top:1068px;width:1.5px;height:34px;background:#3f9a2e;"></div>
<div style="left:1667px;top:1068px;width:49px;height:34px;overflow:hidden;"><div class="t" style="left:6px;top:8px;font-size:19.5px;letter-spacing:0.9px;color:#1b3514;-webkit-text-stroke:0.25px #1b3514;">(&nbsp;(&nbsp;(</div></div>
<div style="left:1754px;top:1068px;width:178px;height:34px;background:#7dfb5b;border:1.5px solid #3f9a2e;"></div>
<div style="left:1754px;top:1068px;width:178px;height:34px;overflow:hidden;"><div class="t" style="left:6px;top:8px;font-size:19.5px;letter-spacing:0.9px;color:#1b3514;-webkit-text-stroke:0.25px #1b3514;">HS1_120_Ebm_Lif</div></div>
<div style="left:2052px;top:1068px;width:42px;height:34px;background:#656565;border:1.5px solid #5a5a5a;"></div>
<div style="left:2052px;top:1068px;width:42px;height:34px;overflow:hidden;"><div class="t" style="left:6px;top:8px;font-size:19.5px;letter-spacing:0.9px;color:#262626;-webkit-text-stroke:0.25px #262626;">HS1</div></div>
<div style="left:728px;top:1106px;width:11px;height:34px;background:#656565;border:1.5px solid #5a5a5a;"></div>
<div style="left:814px;top:1106px;width:18px;height:34px;background:#656565;border:1.5px solid #5a5a5a;"></div>
<div style="left:814px;top:1106px;width:18px;height:34px;overflow:hidden;"><div class="t" style="left:6px;top:8px;font-size:19.5px;letter-spacing:0.9px;color:#262626;-webkit-text-stroke:0.25px #262626;">(</div></div>
<div style="left:1596px;top:1106px;width:11px;height:34px;background:#7dfb5b;border:1.5px solid #3f9a2e;"></div>
<div style="left:1683px;top:1106px;width:17px;height:34px;background:#7dfb5b;border:1.5px solid #3f9a2e;"></div>
<div style="left:1683px;top:1106px;width:17px;height:34px;overflow:hidden;"><div class="t" style="left:6px;top:8px;font-size:19.5px;letter-spacing:0.9px;color:#1b3514;-webkit-text-stroke:0.25px #1b3514;">(</div></div>
<div style="left:891px;top:1144px;width:173px;height:34px;background:#7dfb5b;border:1.5px solid #3f9a2e;"></div>
<div style="left:892px;top:1144px;width:8.8px;height:34px;overflow:hidden;"><div class="t" style="left:5px;top:8px;font-size:19.5px;color:#1b3514;-webkit-text-stroke:0.4px #1b3514;">I</div></div>
<div style="left:900.8px;top:1144px;width:2px;height:34px;background:#3f9a2e;"></div>
<div style="left:902.8px;top:1144px;width:8.8px;height:34px;overflow:hidden;"><div class="t" style="left:5px;top:8px;font-size:19.5px;color:#1b3514;-webkit-text-stroke:0.4px #1b3514;">H</div></div>
<div style="left:911.6px;top:1144px;width:2px;height:34px;background:#3f9a2e;"></div>
<div style="left:913.6px;top:1144px;width:8.8px;height:34px;overflow:hidden;"><div class="t" style="left:5px;top:8px;font-size:19.5px;color:#1b3514;-webkit-text-stroke:0.4px #1b3514;">I</div></div>
<div style="left:922.4px;top:1144px;width:2px;height:34px;background:#3f9a2e;"></div>
<div style="left:924.4px;top:1144px;width:8.8px;height:34px;overflow:hidden;"><div class="t" style="left:5px;top:8px;font-size:19.5px;color:#1b3514;-webkit-text-stroke:0.4px #1b3514;">H</div></div>
<div style="left:933.2px;top:1144px;width:2px;height:34px;background:#3f9a2e;"></div>
<div style="left:935.2px;top:1144px;width:8.8px;height:34px;overflow:hidden;"><div class="t" style="left:5px;top:8px;font-size:19.5px;color:#1b3514;-webkit-text-stroke:0.4px #1b3514;">I</div></div>
<div style="left:944.1px;top:1144px;width:2px;height:34px;background:#3f9a2e;"></div>
<div style="left:946.1px;top:1144px;width:8.8px;height:34px;overflow:hidden;"><div class="t" style="left:5px;top:8px;font-size:19.5px;color:#1b3514;-webkit-text-stroke:0.4px #1b3514;">H</div></div>
<div style="left:954.9px;top:1144px;width:2px;height:34px;background:#3f9a2e;"></div>
<div style="left:956.9px;top:1144px;width:8.8px;height:34px;overflow:hidden;"><div class="t" style="left:5px;top:8px;font-size:19.5px;color:#1b3514;-webkit-text-stroke:0.4px #1b3514;">I</div></div>
<div style="left:965.7px;top:1144px;width:2px;height:34px;background:#3f9a2e;"></div>
<div style="left:967.7px;top:1144px;width:8.8px;height:34px;overflow:hidden;"><div class="t" style="left:5px;top:8px;font-size:19.5px;color:#1b3514;-webkit-text-stroke:0.4px #1b3514;">H</div></div>
<div style="left:976.5px;top:1144px;width:2px;height:34px;background:#3f9a2e;"></div>
<div style="left:978.5px;top:1144px;width:8.8px;height:34px;overflow:hidden;"><div class="t" style="left:5px;top:8px;font-size:19.5px;color:#1b3514;-webkit-text-stroke:0.4px #1b3514;">I</div></div>
<div style="left:987.3px;top:1144px;width:2px;height:34px;background:#3f9a2e;"></div>
<div style="left:989.3px;top:1144px;width:8.8px;height:34px;overflow:hidden;"><div class="t" style="left:5px;top:8px;font-size:19.5px;color:#1b3514;-webkit-text-stroke:0.4px #1b3514;">H</div></div>
<div style="left:998.1px;top:1144px;width:2px;height:34px;background:#3f9a2e;"></div>
<div style="left:1000.1px;top:1144px;width:8.8px;height:34px;overflow:hidden;"><div class="t" style="left:5px;top:8px;font-size:19.5px;color:#1b3514;-webkit-text-stroke:0.4px #1b3514;">I</div></div>
<div style="left:1008.9px;top:1144px;width:2px;height:34px;background:#3f9a2e;"></div>
<div style="left:1010.9px;top:1144px;width:8.8px;height:34px;overflow:hidden;"><div class="t" style="left:5px;top:8px;font-size:19.5px;color:#1b3514;-webkit-text-stroke:0.4px #1b3514;">H</div></div>
<div style="left:1019.8px;top:1144px;width:2px;height:34px;background:#3f9a2e;"></div>
<div style="left:1021.8px;top:1144px;width:8.8px;height:34px;overflow:hidden;"><div class="t" style="left:5px;top:8px;font-size:19.5px;color:#1b3514;-webkit-text-stroke:0.4px #1b3514;">I</div></div>
<div style="left:1030.6px;top:1144px;width:2px;height:34px;background:#3f9a2e;"></div>
<div style="left:1032.6px;top:1144px;width:8.8px;height:34px;overflow:hidden;"><div class="t" style="left:5px;top:8px;font-size:19.5px;color:#1b3514;-webkit-text-stroke:0.4px #1b3514;">H</div></div>
<div style="left:1041.4px;top:1144px;width:2px;height:34px;background:#3f9a2e;"></div>
<div style="left:1043.4px;top:1144px;width:8.8px;height:34px;overflow:hidden;"><div class="t" style="left:5px;top:8px;font-size:19.5px;color:#1b3514;-webkit-text-stroke:0.4px #1b3514;">I</div></div>
<div style="left:1052.2px;top:1144px;width:2px;height:34px;background:#3f9a2e;"></div>
<div style="left:1054.2px;top:1144px;width:8.8px;height:34px;overflow:hidden;"><div class="t" style="left:5px;top:8px;font-size:19.5px;color:#1b3514;-webkit-text-stroke:0.4px #1b3514;">H</div></div>
<div style="left:1934px;top:1144px;width:172px;height:34px;background:#7dfb5b;border:1.5px solid #3f9a2e;"></div>
<div style="left:1935px;top:1144px;width:8.8px;height:34px;overflow:hidden;"><div class="t" style="left:5px;top:8px;font-size:19.5px;color:#1b3514;-webkit-text-stroke:0.4px #1b3514;">I</div></div>
<div style="left:1943.8px;top:1144px;width:2px;height:34px;background:#3f9a2e;"></div>
<div style="left:1945.8px;top:1144px;width:8.8px;height:34px;overflow:hidden;"><div class="t" style="left:5px;top:8px;font-size:19.5px;color:#1b3514;-webkit-text-stroke:0.4px #1b3514;">H</div></div>
<div style="left:1954.5px;top:1144px;width:2px;height:34px;background:#3f9a2e;"></div>
<div style="left:1956.5px;top:1144px;width:8.8px;height:34px;overflow:hidden;"><div class="t" style="left:5px;top:8px;font-size:19.5px;color:#1b3514;-webkit-text-stroke:0.4px #1b3514;">I</div></div>
<div style="left:1965.2px;top:1144px;width:2px;height:34px;background:#3f9a2e;"></div>
<div style="left:1967.2px;top:1144px;width:8.8px;height:34px;overflow:hidden;"><div class="t" style="left:5px;top:8px;font-size:19.5px;color:#1b3514;-webkit-text-stroke:0.4px #1b3514;">H</div></div>
<div style="left:1976px;top:1144px;width:2px;height:34px;background:#3f9a2e;"></div>
<div style="left:1978px;top:1144px;width:8.8px;height:34px;overflow:hidden;"><div class="t" style="left:5px;top:8px;font-size:19.5px;color:#1b3514;-webkit-text-stroke:0.4px #1b3514;">I</div></div>
<div style="left:1986.8px;top:1144px;width:2px;height:34px;background:#3f9a2e;"></div>
<div style="left:1988.8px;top:1144px;width:8.8px;height:34px;overflow:hidden;"><div class="t" style="left:5px;top:8px;font-size:19.5px;color:#1b3514;-webkit-text-stroke:0.4px #1b3514;">H</div></div>
<div style="left:1997.5px;top:1144px;width:2px;height:34px;background:#3f9a2e;"></div>
<div style="left:1999.5px;top:1144px;width:8.8px;height:34px;overflow:hidden;"><div class="t" style="left:5px;top:8px;font-size:19.5px;color:#1b3514;-webkit-text-stroke:0.4px #1b3514;">I</div></div>
<div style="left:2008.2px;top:1144px;width:2px;height:34px;background:#3f9a2e;"></div>
<div style="left:2010.2px;top:1144px;width:8.8px;height:34px;overflow:hidden;"><div class="t" style="left:5px;top:8px;font-size:19.5px;color:#1b3514;-webkit-text-stroke:0.4px #1b3514;">H</div></div>
<div style="left:2019px;top:1144px;width:2px;height:34px;background:#3f9a2e;"></div>
<div style="left:2021px;top:1144px;width:8.8px;height:34px;overflow:hidden;"><div class="t" style="left:5px;top:8px;font-size:19.5px;color:#1b3514;-webkit-text-stroke:0.4px #1b3514;">I</div></div>
<div style="left:2029.8px;top:1144px;width:2px;height:34px;background:#3f9a2e;"></div>
<div style="left:2031.8px;top:1144px;width:8.8px;height:34px;overflow:hidden;"><div class="t" style="left:5px;top:8px;font-size:19.5px;color:#1b3514;-webkit-text-stroke:0.4px #1b3514;">H</div></div>
<div style="left:2040.5px;top:1144px;width:2px;height:34px;background:#3f9a2e;"></div>
<div style="left:2042.5px;top:1144px;width:8.8px;height:34px;overflow:hidden;"><div class="t" style="left:5px;top:8px;font-size:19.5px;color:#1b3514;-webkit-text-stroke:0.4px #1b3514;">I</div></div>
<div style="left:2051.2px;top:1144px;width:2px;height:34px;background:#3f9a2e;"></div>
<div style="left:2053.2px;top:1144px;width:8.8px;height:34px;overflow:hidden;"><div class="t" style="left:5px;top:8px;font-size:19.5px;color:#1b3514;-webkit-text-stroke:0.4px #1b3514;">H</div></div>
<div style="left:2062px;top:1144px;width:2px;height:34px;background:#3f9a2e;"></div>
<div style="left:2064px;top:1144px;width:8.8px;height:34px;overflow:hidden;"><div class="t" style="left:5px;top:8px;font-size:19.5px;color:#1b3514;-webkit-text-stroke:0.4px #1b3514;">I</div></div>
<div style="left:2072.8px;top:1144px;width:2px;height:34px;background:#3f9a2e;"></div>
<div style="left:2074.8px;top:1144px;width:8.8px;height:34px;overflow:hidden;"><div class="t" style="left:5px;top:8px;font-size:19.5px;color:#1b3514;-webkit-text-stroke:0.4px #1b3514;">H</div></div>
<div style="left:2083.5px;top:1144px;width:2px;height:34px;background:#3f9a2e;"></div>
<div style="left:2085.5px;top:1144px;width:8.8px;height:34px;overflow:hidden;"><div class="t" style="left:5px;top:8px;font-size:19.5px;color:#1b3514;-webkit-text-stroke:0.4px #1b3514;">I</div></div>
<div style="left:2094.2px;top:1144px;width:2px;height:34px;background:#3f9a2e;"></div>
<div style="left:2096.2px;top:1144px;width:8.8px;height:34px;overflow:hidden;"><div class="t" style="left:5px;top:8px;font-size:19.5px;color:#1b3514;-webkit-text-stroke:0.4px #1b3514;">H</div></div>
<div style="left:348px;top:1182px;width:54px;height:34px;background:#7dfb5b;border:1.5px solid #3f9a2e;"></div>
<div style="left:359px;top:1182px;width:1.5px;height:34px;background:#3f9a2e;"></div>
<div style="left:348px;top:1182px;width:54px;height:34px;overflow:hidden;"><div class="t" style="left:6px;top:8px;font-size:19.5px;letter-spacing:0.9px;color:#1b3514;-webkit-text-stroke:0.25px #1b3514;">I&nbsp;HS1</div></div>
<div style="left:858px;top:1182px;width:32px;height:34px;background:#7dfb5b;border:1.5px solid #3f9a2e;"></div>
<div style="left:858px;top:1182px;width:32px;height:34px;overflow:hidden;"><div class="t" style="left:6px;top:8px;font-size:19.5px;letter-spacing:0.9px;color:#1b3514;-webkit-text-stroke:0.25px #1b3514;">HS</div></div>
<div style="left:945px;top:1182px;width:31px;height:34px;background:#7dfb5b;border:1.5px solid #3f9a2e;"></div>
<div style="left:945px;top:1182px;width:31px;height:34px;overflow:hidden;"><div class="t" style="left:6px;top:8px;font-size:19.5px;letter-spacing:0.9px;color:#1b3514;-webkit-text-stroke:0.25px #1b3514;">HS</div></div>
<div style="left:1477px;top:1182px;width:53px;height:34px;background:#7dfb5b;border:1.5px solid #3f9a2e;"></div>
<div style="left:1488px;top:1182px;width:1.5px;height:34px;background:#3f9a2e;"></div>
<div style="left:1477px;top:1182px;width:53px;height:34px;overflow:hidden;"><div class="t" style="left:6px;top:8px;font-size:19.5px;letter-spacing:0.9px;color:#1b3514;-webkit-text-stroke:0.25px #1b3514;">I&nbsp;HS1</div></div>
<div style="left:1900px;top:1182px;width:32px;height:34px;background:#7dfb5b;border:1.5px solid #3f9a2e;"></div>
<div style="left:1900px;top:1182px;width:32px;height:34px;overflow:hidden;"><div class="t" style="left:6px;top:8px;font-size:19.5px;letter-spacing:0.9px;color:#1b3514;-webkit-text-stroke:0.25px #1b3514;">HS</div></div>
<div style="left:1986px;top:1182px;width:31px;height:34px;background:#7dfb5b;border:1.5px solid #3f9a2e;"></div>
<div style="left:1986px;top:1182px;width:31px;height:34px;overflow:hidden;"><div class="t" style="left:6px;top:8px;font-size:19.5px;letter-spacing:0.9px;color:#1b3514;-webkit-text-stroke:0.25px #1b3514;">HS</div></div>
<div style="left:2519px;top:1182px;width:53px;height:34px;background:#7dfb5b;border:1.5px solid #3f9a2e;"></div>
<div style="left:2530px;top:1182px;width:1.5px;height:34px;background:#3f9a2e;"></div>
<div style="left:2519px;top:1182px;width:53px;height:34px;overflow:hidden;"><div class="t" style="left:6px;top:8px;font-size:19.5px;letter-spacing:0.9px;color:#1b3514;-webkit-text-stroke:0.25px #1b3514;">I&nbsp;HS1</div></div>
<div style="left:2692px;top:1182px;width:54px;height:34px;background:#7dfb5b;border:1.5px solid #3f9a2e;"></div>
<div style="left:2703px;top:1182px;width:1.5px;height:34px;background:#3f9a2e;"></div>
<div style="left:2692px;top:1182px;width:54px;height:34px;overflow:hidden;"><div class="t" style="left:6px;top:8px;font-size:19.5px;letter-spacing:0.9px;color:#1b3514;-webkit-text-stroke:0.25px #1b3514;">I&nbsp;HS1</div></div>
<div style="left:23px;top:1220px;width:173px;height:34px;background:#64d84a;"></div>
<svg style="position:absolute;left:23px;top:1220px" width="173" height="34"><path d="M103.8,32 C138.4,32 155.7,12 166.9,2 L173,2 L173,32 Z" fill="#7dfb5b"/></svg>
<div style="left:23px;top:1220px;width:173px;height:2px;background:#3f8a2e;"></div>
<div style="left:23px;top:1252px;width:173px;height:2px;background:#3f8a2e;"></div>
<div style="left:23px;top:1220px;width:173px;height:34px;overflow:hidden;"><div class="t" style="left:5px;top:9px;font-size:19.5px;letter-spacing:0.9px;color:#1b3514;-webkit-text-stroke:0.25px #1b3514;">59-Audio 1</div></div>
<div style="left:372px;top:1220px;width:170px;height:34px;background:#64d84a;"></div>
<svg style="position:absolute;left:372px;top:1220px" width="170" height="34"><path d="M102,32 C136,32 153,12 164,2 L170,2 L170,32 Z" fill="#7dfb5b"/></svg>
<div style="left:372px;top:1220px;width:170px;height:2px;background:#3f8a2e;"></div>
<div style="left:372px;top:1252px;width:170px;height:2px;background:#3f8a2e;"></div>
<div style="left:372px;top:1220px;width:170px;height:34px;overflow:hidden;"><div class="t" style="left:5px;top:9px;font-size:19.5px;letter-spacing:0.9px;color:#1b3514;-webkit-text-stroke:0.25px #1b3514;">59-Audio 1</div></div>
<div style="left:891px;top:1220px;width:173px;height:34px;background:#64d84a;"></div>
<svg style="position:absolute;left:891px;top:1220px" width="173" height="34"><path d="M103.8,32 C138.4,32 155.7,12 166.9,2 L173,2 L173,32 Z" fill="#7dfb5b"/></svg>
<div style="left:891px;top:1220px;width:173px;height:2px;background:#3f8a2e;"></div>
<div style="left:891px;top:1252px;width:173px;height:2px;background:#3f8a2e;"></div>
<div style="left:891px;top:1220px;width:173px;height:34px;overflow:hidden;"><div class="t" style="left:5px;top:9px;font-size:19.5px;letter-spacing:0.9px;color:#1b3514;-webkit-text-stroke:0.25px #1b3514;">59-Audio 1</div></div>
<div style="left:1412px;top:1220px;width:172px;height:34px;background:#64d84a;"></div>
<svg style="position:absolute;left:1412px;top:1220px" width="172" height="34"><path d="M103.2,32 C137.6,32 154.8,12 166,2 L172,2 L172,32 Z" fill="#7dfb5b"/></svg>
<div style="left:1412px;top:1220px;width:172px;height:2px;background:#3f8a2e;"></div>
<div style="left:1412px;top:1252px;width:172px;height:2px;background:#3f8a2e;"></div>
<div style="left:1412px;top:1220px;width:172px;height:34px;overflow:hidden;"><div class="t" style="left:5px;top:9px;font-size:19.5px;letter-spacing:0.9px;color:#1b3514;-webkit-text-stroke:0.25px #1b3514;">59-Audio 1</div></div>
<div style="left:1934px;top:1220px;width:172px;height:34px;background:#64d84a;"></div>
<svg style="position:absolute;left:1934px;top:1220px" width="172" height="34"><path d="M103.2,32 C137.6,32 154.8,12 166,2 L172,2 L172,32 Z" fill="#7dfb5b"/></svg>
<div style="left:1934px;top:1220px;width:172px;height:2px;background:#3f8a2e;"></div>
<div style="left:1934px;top:1252px;width:172px;height:2px;background:#3f8a2e;"></div>
<div style="left:1934px;top:1220px;width:172px;height:34px;overflow:hidden;"><div class="t" style="left:5px;top:9px;font-size:19.5px;letter-spacing:0.9px;color:#1b3514;-webkit-text-stroke:0.25px #1b3514;">59-Audio 1</div></div>
<div style="left:2455px;top:1220px;width:171px;height:34px;background:#64d84a;"></div>
<svg style="position:absolute;left:2455px;top:1220px" width="171" height="34"><path d="M102.6,32 C136.8,32 153.9,12 165,2 L171,2 L171,32 Z" fill="#7dfb5b"/></svg>
<div style="left:2455px;top:1220px;width:171px;height:2px;background:#3f8a2e;"></div>
<div style="left:2455px;top:1252px;width:171px;height:2px;background:#3f8a2e;"></div>
<div style="left:2455px;top:1220px;width:171px;height:34px;overflow:hidden;"><div class="t" style="left:5px;top:9px;font-size:19.5px;letter-spacing:0.9px;color:#1b3514;-webkit-text-stroke:0.25px #1b3514;">59-Audio 1</div></div>
<div style="left:2800px;top:1220px;width:174px;height:34px;background:#64d84a;"></div>
<svg style="position:absolute;left:2800px;top:1220px" width="174" height="34"><path d="M104.4,32 C139.2,32 156.6,12 167.9,2 L174,2 L174,32 Z" fill="#7dfb5b"/></svg>
<div style="left:2800px;top:1220px;width:174px;height:2px;background:#3f8a2e;"></div>
<div style="left:2800px;top:1252px;width:174px;height:2px;background:#3f8a2e;"></div>
<div style="left:2800px;top:1220px;width:174px;height:34px;overflow:hidden;"><div class="t" style="left:5px;top:9px;font-size:19.5px;letter-spacing:0.9px;color:#1b3514;-webkit-text-stroke:0.25px #1b3514;">59-Audio 1</div></div>
<div style="left:2626px;top:1220px;width:174px;height:34px;background:#545454;"></div>
<svg style="position:absolute;left:2626px;top:1220px" width="174" height="34"><path d="M104.4,32 C139.2,32 156.6,12 167.9,2 L174,2 L174,32 Z" fill="#5e5e5e"/></svg>
<div style="left:2626px;top:1220px;width:174px;height:2px;background:#4a4a4a;"></div>
<div style="left:2626px;top:1252px;width:174px;height:2px;background:#4a4a4a;"></div>
<div style="left:2626px;top:1220px;width:174px;height:34px;overflow:hidden;"><div class="t" style="left:5px;top:9px;font-size:19.5px;letter-spacing:0.9px;color:#2e2e2e;-webkit-text-stroke:0.25px #2e2e2e;">59-Audio 1</div></div>
<div style="left:23px;top:1259px;width:3125px;height:12px;background:#2e2e2e;"></div>
<div style="left:197px;top:1274px;width:345px;height:12px;background:#2e2e2e;"></div>
<div style="left:1064px;top:1274px;width:520px;height:12px;background:#2e2e2e;"></div>
<div style="left:2107px;top:1274px;width:693px;height:12px;background:#2e2e2e;"></div>
<div style="left:23px;top:1288px;width:3125px;height:12px;background:#2e2e2e;"></div>
<div style="left:23px;top:1302px;width:3125px;height:12px;background:#2e2e2e;"></div>
<div style="left:1240px;top:1316px;width:84px;height:12px;background:#2e2e2e;"></div>
<div style="left:1412px;top:1316px;width:86px;height:12px;background:#2e2e2e;"></div>
<div style="left:2282px;top:1316px;width:84px;height:12px;background:#2e2e2e;"></div>
<div style="left:2455px;top:1316px;width:85px;height:12px;background:#2e2e2e;"></div>
<div style="left:2627px;top:1316px;width:87px;height:12px;background:#2e2e2e;"></div>
<div style="left:2802px;top:1316px;width:86px;height:12px;background:#2e2e2e;"></div>
<div style="left:2975px;top:1316px;width:87px;height:12px;background:#2e2e2e;"></div>
<div style="left:23px;top:1366px;width:3125px;height:104px;background:#ea4bcf;"></div>
<div style="left:23px;top:1398px;width:3125px;height:2px;background:#7a2470;"></div>
<div style="left:23px;top:1366px;width:3125px;height:1.5px;background:#7a2470;"></div>
<div style="left:2626px;top:1400px;width:2px;height:70px;background:#7a2470;"></div>
<div style="left:372px;top:1424px;width:344px;height:20px;background:#231a21;"></div>
<div style="left:891px;top:1424px;width:149px;height:20px;background:#231a21;"></div>
<div style="left:1412px;top:1424px;width:148px;height:20px;background:#231a21;"></div>
<div style="left:1586px;top:1424px;width:172px;height:20px;background:#231a21;"></div>
<div style="left:1934px;top:1424px;width:148px;height:20px;background:#231a21;"></div>
<div style="left:2455px;top:1424px;width:345px;height:20px;background:#231a21;"></div>
<div style="left:197px;top:1474px;width:345px;height:104px;background:#ea4bcf;"></div>
<div style="left:197px;top:1506px;width:345px;height:2px;background:#7a2470;"></div>
<div style="left:197px;top:1474px;width:345px;height:1.5px;background:#7a2470;"></div>
<div style="left:281.6px;top:1474px;width:2px;height:104px;background:#7a2470;"></div>
<div style="left:369px;top:1474px;width:2px;height:104px;background:#7a2470;"></div>
<div style="left:455.7px;top:1474px;width:2px;height:104px;background:#7a2470;"></div>
<div style="left:238.5px;top:1532px;width:2px;height:20px;background:#111;"></div>
<div style="left:325.3px;top:1532px;width:2px;height:20px;background:#111;"></div>
<div style="left:412.2px;top:1532px;width:2px;height:20px;background:#111;"></div>
<div style="left:499px;top:1532px;width:2px;height:20px;background:#111;"></div>
<div style="left:1064.7px;top:1474px;width:519.7px;height:104px;background:#ea4bcf;"></div>
<div style="left:1064.7px;top:1506px;width:519.7px;height:2px;background:#7a2470;"></div>
<div style="left:1064.7px;top:1474px;width:519.7px;height:1.5px;background:#7a2470;"></div>
<div style="left:1237.4px;top:1474px;width:2px;height:104px;background:#7a2470;"></div>
<div style="left:1411.5px;top:1474px;width:2px;height:104px;background:#7a2470;"></div>
<div style="left:1106.2px;top:1532px;width:2px;height:20px;background:#111;"></div>
<div style="left:1193px;top:1532px;width:2px;height:20px;background:#111;"></div>
<div style="left:1279.9px;top:1532px;width:2px;height:20px;background:#111;"></div>
<div style="left:1366.7px;top:1532px;width:2px;height:20px;background:#111;"></div>
<div style="left:1453.5px;top:1532px;width:2px;height:20px;background:#111;"></div>
<div style="left:1540.3px;top:1532px;width:2px;height:20px;background:#111;"></div>
<div style="left:2107px;top:1474px;width:693px;height:104px;background:#ea4bcf;"></div>
<div style="left:2107px;top:1506px;width:693px;height:2px;background:#7a2470;"></div>
<div style="left:2107px;top:1474px;width:693px;height:1.5px;background:#7a2470;"></div>
<div style="left:2279px;top:1474px;width:2px;height:104px;background:#7a2470;"></div>
<div style="left:2454px;top:1474px;width:2px;height:104px;background:#7a2470;"></div>
<div style="left:2626px;top:1474px;width:2px;height:104px;background:#7a2470;"></div>
<div style="left:2148.5px;top:1532px;width:2px;height:20px;background:#111;"></div>
<div style="left:2235.3px;top:1532px;width:2px;height:20px;background:#111;"></div>
<div style="left:2322.2px;top:1532px;width:2px;height:20px;background:#111;"></div>
<div style="left:2409px;top:1532px;width:2px;height:20px;background:#111;"></div>
<div style="left:2495.8px;top:1532px;width:2px;height:20px;background:#111;"></div>
<div style="left:2582.6px;top:1532px;width:2px;height:20px;background:#111;"></div>
<div style="left:2669.5px;top:1532px;width:2px;height:20px;background:#111;"></div>
<div style="left:2756.3px;top:1532px;width:2px;height:20px;background:#111;"></div>
<div style="left:23px;top:1582px;width:3125px;height:138px;background:#ea4bcf;"></div>
<div style="left:23px;top:1614px;width:3125px;height:2px;background:#7a2470;"></div>
<div style="left:23px;top:1582px;width:3125px;height:1.5px;background:#7a2470;"></div>
<div style="left:2626px;top:1616px;width:2px;height:104px;background:#7a2470;"></div>
<div style="left:199px;top:1666px;width:513px;height:4px;background:repeating-linear-gradient(90deg,#1a1018 0px,#1a1018 2px,transparent 2px,transparent 6px,#1a1018 6px,#1a1018 8px,transparent 8px,transparent 12px,#1a1018 12px,#1a1018 14px,transparent 14px,transparent 16.1px);"></div>
<div style="left:199px;top:1686px;width:515px;height:4px;background:repeating-linear-gradient(90deg,#1a1018 0px,#1a1018 6px,transparent 6px,transparent 8.05px);"></div>
<div style="left:197px;top:1702px;width:515px;height:4px;background:repeating-linear-gradient(90deg,#1a1018 0px,#1a1018 2px,transparent 2px,transparent 6px,#1a1018 6px,#1a1018 8px,transparent 8px,transparent 12px,#1a1018 12px,#1a1018 14px,transparent 14px,transparent 16.1px);"></div>
<div style="left:1066px;top:1666px;width:688px;height:4px;background:repeating-linear-gradient(90deg,#1a1018 0px,#1a1018 2px,transparent 2px,transparent 6px,#1a1018 6px,#1a1018 8px,transparent 8px,transparent 12px,#1a1018 12px,#1a1018 14px,transparent 14px,transparent 16.1px);"></div>
<div style="left:1066px;top:1686px;width:690px;height:4px;background:repeating-linear-gradient(90deg,#1a1018 0px,#1a1018 6px,transparent 6px,transparent 8.05px);"></div>
<div style="left:1064px;top:1702px;width:690px;height:4px;background:repeating-linear-gradient(90deg,#1a1018 0px,#1a1018 2px,transparent 2px,transparent 6px,#1a1018 6px,#1a1018 8px,transparent 8px,transparent 12px,#1a1018 12px,#1a1018 14px,transparent 14px,transparent 16.1px);"></div>
<div style="left:2109px;top:1666px;width:861px;height:4px;background:repeating-linear-gradient(90deg,#1a1018 0px,#1a1018 2px,transparent 2px,transparent 6px,#1a1018 6px,#1a1018 8px,transparent 8px,transparent 12px,#1a1018 12px,#1a1018 14px,transparent 14px,transparent 16.1px);"></div>
<div style="left:2109px;top:1686px;width:863px;height:4px;background:repeating-linear-gradient(90deg,#1a1018 0px,#1a1018 6px,transparent 6px,transparent 8.05px);"></div>
<div style="left:2107px;top:1702px;width:863px;height:4px;background:repeating-linear-gradient(90deg,#1a1018 0px,#1a1018 2px,transparent 2px,transparent 6px,#1a1018 6px,#1a1018 8px,transparent 8px,transparent 12px,#1a1018 12px,#1a1018 14px,transparent 14px,transparent 16.1px);"></div>
<div style="left:23px;top:1724px;width:3125px;height:138px;background:#ea4bcf;"></div>
<div style="left:23px;top:1756px;width:3125px;height:2px;background:#7a2470;"></div>
<div style="left:23px;top:1724px;width:3125px;height:1.5px;background:#7a2470;"></div>
<div style="left:2626px;top:1758px;width:2px;height:104px;background:#7a2470;"></div>
<div style="left:198px;top:1758px;width:689px;height:6px;background:repeating-linear-gradient(90deg,#1a1018 0px,#1a1018 2px,transparent 2px,transparent 6px,#1a1018 6px,#1a1018 8px,transparent 8px,transparent 12px,#1a1018 12px,#1a1018 14px,transparent 14px,transparent 16.1px);"></div>
<div style="left:198px;top:1854px;width:689px;height:6px;background:repeating-linear-gradient(90deg,#1a1018 0px,#1a1018 2px,transparent 2px,transparent 6px,#1a1018 6px,#1a1018 8px,transparent 8px,transparent 12px,#1a1018 12px,#1a1018 14px,transparent 14px,transparent 16.1px);"></div>
<div style="left:1413px;top:1758px;width:515px;height:6px;background:repeating-linear-gradient(90deg,#1a1018 0px,#1a1018 2px,transparent 2px,transparent 6px,#1a1018 6px,#1a1018 8px,transparent 8px,transparent 12px,#1a1018 12px,#1a1018 14px,transparent 14px,transparent 16.1px);"></div>
<div style="left:1413px;top:1854px;width:515px;height:6px;background:repeating-linear-gradient(90deg,#1a1018 0px,#1a1018 2px,transparent 2px,transparent 6px,#1a1018 6px,#1a1018 8px,transparent 8px,transparent 12px,#1a1018 12px,#1a1018 14px,transparent 14px,transparent 16.1px);"></div>
<div style="left:2456px;top:1758px;width:340px;height:6px;background:repeating-linear-gradient(90deg,#1a1018 0px,#1a1018 2px,transparent 2px,transparent 6px,#1a1018 6px,#1a1018 8px,transparent 8px,transparent 12px,#1a1018 12px,#1a1018 14px,transparent 14px,transparent 16.1px);"></div>
<div style="left:2456px;top:1854px;width:340px;height:6px;background:repeating-linear-gradient(90deg,#1a1018 0px,#1a1018 2px,transparent 2px,transparent 6px,#1a1018 6px,#1a1018 8px,transparent 8px,transparent 12px,#1a1018 12px,#1a1018 14px,transparent 14px,transparent 16.1px);"></div>
<div style="left:191.4px;top:1666px;width:8px;height:4px;background:#ea4bcf;"></div>
<div style="left:191.4px;top:1854px;width:8px;height:6px;background:#ea4bcf;"></div>
<div style="left:365px;top:1666px;width:8px;height:4px;background:#ea4bcf;"></div>
<div style="left:365px;top:1854px;width:8px;height:6px;background:#ea4bcf;"></div>
<div style="left:538.7px;top:1666px;width:8px;height:4px;background:#ea4bcf;"></div>
<div style="left:538.7px;top:1854px;width:8px;height:6px;background:#ea4bcf;"></div>
<div style="left:712.4px;top:1666px;width:8px;height:4px;background:#ea4bcf;"></div>
<div style="left:712.4px;top:1854px;width:8px;height:6px;background:#ea4bcf;"></div>
<div style="left:799.2px;top:1666px;width:8px;height:4px;background:#ea4bcf;"></div>
<div style="left:799.2px;top:1854px;width:8px;height:6px;background:#ea4bcf;"></div>
<div style="left:886px;top:1666px;width:8px;height:4px;background:#ea4bcf;"></div>
<div style="left:886px;top:1854px;width:8px;height:6px;background:#ea4bcf;"></div>
<div style="left:972.9px;top:1666px;width:8px;height:4px;background:#ea4bcf;"></div>
<div style="left:972.9px;top:1854px;width:8px;height:6px;background:#ea4bcf;"></div>
<div style="left:1038px;top:1666px;width:8px;height:4px;background:#ea4bcf;"></div>
<div style="left:1038px;top:1854px;width:8px;height:6px;background:#ea4bcf;"></div>
<div style="left:1059.7px;top:1666px;width:8px;height:4px;background:#ea4bcf;"></div>
<div style="left:1059.7px;top:1854px;width:8px;height:6px;background:#ea4bcf;"></div>
<div style="left:1233.3px;top:1666px;width:8px;height:4px;background:#ea4bcf;"></div>
<div style="left:1233.3px;top:1854px;width:8px;height:6px;background:#ea4bcf;"></div>
<div style="left:1580.7px;top:1666px;width:8px;height:4px;background:#ea4bcf;"></div>
<div style="left:1580.7px;top:1854px;width:8px;height:6px;background:#ea4bcf;"></div>
<div style="left:1667.5px;top:1666px;width:8px;height:4px;background:#ea4bcf;"></div>
<div style="left:1667.5px;top:1854px;width:8px;height:6px;background:#ea4bcf;"></div>
<div style="left:1754.3px;top:1666px;width:8px;height:4px;background:#ea4bcf;"></div>
<div style="left:1754.3px;top:1854px;width:8px;height:6px;background:#ea4bcf;"></div>
<div style="left:1841.2px;top:1666px;width:8px;height:4px;background:#ea4bcf;"></div>
<div style="left:1841.2px;top:1854px;width:8px;height:6px;background:#ea4bcf;"></div>
<div style="left:1928px;top:1666px;width:8px;height:4px;background:#ea4bcf;"></div>
<div style="left:1928px;top:1854px;width:8px;height:6px;background:#ea4bcf;"></div>
<div style="left:2101.7px;top:1666px;width:8px;height:4px;background:#ea4bcf;"></div>
<div style="left:2101.7px;top:1854px;width:8px;height:6px;background:#ea4bcf;"></div>
<div style="left:2275.3px;top:1666px;width:8px;height:4px;background:#ea4bcf;"></div>
<div style="left:2275.3px;top:1854px;width:8px;height:6px;background:#ea4bcf;"></div>
<div style="left:2796.3px;top:1666px;width:8px;height:4px;background:#ea4bcf;"></div>
<div style="left:2796.3px;top:1854px;width:8px;height:6px;background:#ea4bcf;"></div>
<div style="left:2970px;top:1666px;width:8px;height:4px;background:#ea4bcf;"></div>
<div style="left:2970px;top:1854px;width:8px;height:6px;background:#ea4bcf;"></div>
<div style="left:1240px;top:1866px;width:84px;height:34px;background:#ea4bcf;"></div>
<div style="left:1240px;top:1866px;width:84px;height:1.5px;background:#7a2470;"></div>
<div style="left:1412px;top:1866px;width:86px;height:34px;background:#ea4bcf;"></div>
<div style="left:1412px;top:1866px;width:86px;height:1.5px;background:#7a2470;"></div>
<div style="left:2282px;top:1866px;width:84px;height:34px;background:#ea4bcf;"></div>
<div style="left:2282px;top:1866px;width:84px;height:1.5px;background:#7a2470;"></div>
<div style="left:2455px;top:1866px;width:85px;height:34px;background:#ea4bcf;"></div>
<div style="left:2455px;top:1866px;width:85px;height:1.5px;background:#7a2470;"></div>
<div style="left:2627px;top:1866px;width:87px;height:34px;background:#ea4bcf;"></div>
<div style="left:2627px;top:1866px;width:87px;height:1.5px;background:#7a2470;"></div>
<div style="left:2802px;top:1866px;width:86px;height:34px;background:#ea4bcf;"></div>
<div style="left:2802px;top:1866px;width:86px;height:1.5px;background:#7a2470;"></div>
<div style="left:2975px;top:1866px;width:87px;height:34px;background:#ea4bcf;"></div>
<div style="left:2975px;top:1866px;width:87px;height:1.5px;background:#7a2470;"></div>
<div style="left:543px;top:1924px;width:521px;height:4px;background:#f0f0f0;"></div>
<div style="left:672px;top:1936px;width:45px;height:4px;background:#f0f0f0;"></div>
<div style="left:717px;top:1965.5px;width:88px;height:4px;background:#f0f0f0;"></div>
<div style="left:891px;top:1918px;width:325px;height:4px;background:#f0f0f0;"></div>
<div style="left:891px;top:1924px;width:173px;height:4px;background:#f0f0f0;"></div>
<div style="left:891px;top:1942px;width:25px;height:4px;background:#f0f0f0;"></div>
<div style="left:880px;top:1947.5px;width:11px;height:4px;background:#f0f0f0;"></div>
<div style="left:880px;top:1953.5px;width:86px;height:4px;background:#f0f0f0;"></div>
<div style="left:891px;top:1960px;width:173px;height:4px;background:#f0f0f0;"></div>
<div style="left:1065px;top:1935.5px;width:519px;height:4px;background:#f0f0f0;"></div>
<div style="left:1564px;top:1918px;width:152px;height:4px;background:#f0f0f0;"></div>
<div style="left:1736px;top:1930px;width:196px;height:4px;background:#f0f0f0;"></div>
<div style="left:1760px;top:1924px;width:172px;height:4px;background:#f0f0f0;"></div>
<div style="left:1760px;top:1965.5px;width:86px;height:4px;background:#f0f0f0;"></div>
<div style="left:1934px;top:1912px;width:150px;height:4px;background:#f0f0f0;"></div>
<div style="left:1934px;top:1918px;width:172px;height:4px;background:#f0f0f0;"></div>
<div style="left:1946px;top:1924px;width:160px;height:4px;background:#f0f0f0;"></div>
<div style="left:1934px;top:1930px;width:150px;height:4px;background:#f0f0f0;"></div>
<div style="left:1934px;top:1942px;width:24px;height:4px;background:#f0f0f0;"></div>
<div style="left:2100px;top:1906px;width:7px;height:4px;background:#f0f0f0;"></div>
<div style="left:2106px;top:1918px;width:154px;height:4px;background:#f0f0f0;"></div>
<div style="left:2281px;top:1935.5px;width:519px;height:4px;background:#f0f0f0;"></div>
<div style="left:2626px;top:208px;width:2px;height:1806px;background:rgba(0,0,0,0.28);"></div>
<div style="left:20.3px;top:2019px;width:2px;height:16px;background:#8a8a8a;"></div>
<div style="left:20.3px;top:2033px;width:5px;height:2px;background:#8a8a8a;"></div>
<div class="t" style="left:27.3px;top:2023px;font-size:20px;color:#a3a3a3;font-weight:normal;font-family:"Liberation Sans", sans-serif;letter-spacing:0.7px;">0:15</div>
<div style="left:77.8px;top:2019px;width:2px;height:5px;background:#777;"></div>
<div style="left:135.2px;top:2019px;width:2px;height:5px;background:#777;"></div>
<div style="left:192.7px;top:2019px;width:2px;height:16px;background:#8a8a8a;"></div>
<div style="left:192.7px;top:2033px;width:5px;height:2px;background:#8a8a8a;"></div>
<div class="t" style="left:199.7px;top:2023px;font-size:20px;color:#a3a3a3;font-weight:normal;font-family:"Liberation Sans", sans-serif;letter-spacing:0.7px;">0:30</div>
<div style="left:250.1px;top:2019px;width:2px;height:5px;background:#777;"></div>
<div style="left:307.5px;top:2019px;width:2px;height:5px;background:#777;"></div>
<div style="left:365px;top:2019px;width:2px;height:16px;background:#8a8a8a;"></div>
<div style="left:365px;top:2033px;width:5px;height:2px;background:#8a8a8a;"></div>
<div class="t" style="left:372px;top:2023px;font-size:20px;color:#a3a3a3;font-weight:normal;font-family:"Liberation Sans", sans-serif;letter-spacing:0.7px;">0:45</div>
<div style="left:422.4px;top:2019px;width:2px;height:5px;background:#777;"></div>
<div style="left:479.8px;top:2019px;width:2px;height:5px;background:#777;"></div>
<div style="left:537.3px;top:2019px;width:2px;height:16px;background:#8a8a8a;"></div>
<div style="left:537.3px;top:2033px;width:5px;height:2px;background:#8a8a8a;"></div>
<div class="t" style="left:544.3px;top:2023px;font-size:20px;color:#a3a3a3;font-weight:normal;font-family:"Liberation Sans", sans-serif;letter-spacing:0.7px;">1:00</div>
<div style="left:594.7px;top:2019px;width:2px;height:5px;background:#777;"></div>
<div style="left:652.1px;top:2019px;width:2px;height:5px;background:#777;"></div>
<div style="left:709.6px;top:2019px;width:2px;height:16px;background:#8a8a8a;"></div>
<div style="left:709.6px;top:2033px;width:5px;height:2px;background:#8a8a8a;"></div>
<div class="t" style="left:716.6px;top:2023px;font-size:20px;color:#a3a3a3;font-weight:normal;font-family:"Liberation Sans", sans-serif;letter-spacing:0.7px;">1:15</div>
<div style="left:767px;top:2019px;width:2px;height:5px;background:#777;"></div>
<div style="left:824.4px;top:2019px;width:2px;height:5px;background:#777;"></div>
<div style="left:881.9px;top:2019px;width:2px;height:16px;background:#8a8a8a;"></div>
<div style="left:881.9px;top:2033px;width:5px;height:2px;background:#8a8a8a;"></div>
<div class="t" style="left:888.9px;top:2023px;font-size:20px;color:#a3a3a3;font-weight:normal;font-family:"Liberation Sans", sans-serif;letter-spacing:0.7px;">1:30</div>
<div style="left:939.3px;top:2019px;width:2px;height:5px;background:#777;"></div>
<div style="left:996.8px;top:2019px;width:2px;height:5px;background:#777;"></div>
<div style="left:1054.2px;top:2019px;width:2px;height:16px;background:#8a8a8a;"></div>
<div style="left:1054.2px;top:2033px;width:5px;height:2px;background:#8a8a8a;"></div>
<div class="t" style="left:1061.2px;top:2023px;font-size:20px;color:#a3a3a3;font-weight:normal;font-family:"Liberation Sans", sans-serif;letter-spacing:0.7px;">1:45</div>
<div style="left:1111.6px;top:2019px;width:2px;height:5px;background:#777;"></div>
<div style="left:1169.1px;top:2019px;width:2px;height:5px;background:#777;"></div>
<div style="left:1226.5px;top:2019px;width:2px;height:16px;background:#8a8a8a;"></div>
<div style="left:1226.5px;top:2033px;width:5px;height:2px;background:#8a8a8a;"></div>
<div class="t" style="left:1233.5px;top:2023px;font-size:20px;color:#a3a3a3;font-weight:normal;font-family:"Liberation Sans", sans-serif;letter-spacing:0.7px;">2:00</div>
<div style="left:1283.9px;top:2019px;width:2px;height:5px;background:#777;"></div>
<div style="left:1341.4px;top:2019px;width:2px;height:5px;background:#777;"></div>
<div style="left:1398.8px;top:2019px;width:2px;height:16px;background:#8a8a8a;"></div>
<div style="left:1398.8px;top:2033px;width:5px;height:2px;background:#8a8a8a;"></div>
<div class="t" style="left:1405.8px;top:2023px;font-size:20px;color:#a3a3a3;font-weight:normal;font-family:"Liberation Sans", sans-serif;letter-spacing:0.7px;">2:15</div>
<div style="left:1456.2px;top:2019px;width:2px;height:5px;background:#777;"></div>
<div style="left:1513.7px;top:2019px;width:2px;height:5px;background:#777;"></div>
<div style="left:1571.1px;top:2019px;width:2px;height:16px;background:#8a8a8a;"></div>
<div style="left:1571.1px;top:2033px;width:5px;height:2px;background:#8a8a8a;"></div>
<div class="t" style="left:1578.1px;top:2023px;font-size:20px;color:#a3a3a3;font-weight:normal;font-family:"Liberation Sans", sans-serif;letter-spacing:0.7px;">2:30</div>
<div style="left:1628.5px;top:2019px;width:2px;height:5px;background:#777;"></div>
<div style="left:1686px;top:2019px;width:2px;height:5px;background:#777;"></div>
<div style="left:1743.4px;top:2019px;width:2px;height:16px;background:#8a8a8a;"></div>
<div style="left:1743.4px;top:2033px;width:5px;height:2px;background:#8a8a8a;"></div>
<div class="t" style="left:1750.4px;top:2023px;font-size:20px;color:#a3a3a3;font-weight:normal;font-family:"Liberation Sans", sans-serif;letter-spacing:0.7px;">2:45</div>
<div style="left:1800.9px;top:2019px;width:2px;height:5px;background:#777;"></div>
<div style="left:1858.3px;top:2019px;width:2px;height:5px;background:#777;"></div>
<div style="left:1915.7px;top:2019px;width:2px;height:16px;background:#8a8a8a;"></div>
<div style="left:1915.7px;top:2033px;width:5px;height:2px;background:#8a8a8a;"></div>
<div class="t" style="left:1922.7px;top:2023px;font-size:20px;color:#a3a3a3;font-weight:normal;font-family:"Liberation Sans", sans-serif;letter-spacing:0.7px;">3:00</div>
<div style="left:1973.2px;top:2019px;width:2px;height:5px;background:#777;"></div>
<div style="left:2030.6px;top:2019px;width:2px;height:5px;background:#777;"></div>
<div style="left:2088px;top:2019px;width:2px;height:16px;background:#8a8a8a;"></div>
<div style="left:2088px;top:2033px;width:5px;height:2px;background:#8a8a8a;"></div>
<div class="t" style="left:2095px;top:2023px;font-size:20px;color:#a3a3a3;font-weight:normal;font-family:"Liberation Sans", sans-serif;letter-spacing:0.7px;">3:15</div>
<div style="left:2145.5px;top:2019px;width:2px;height:5px;background:#777;"></div>
<div style="left:2202.9px;top:2019px;width:2px;height:5px;background:#777;"></div>
<div style="left:2260.3px;top:2019px;width:2px;height:16px;background:#8a8a8a;"></div>
<div style="left:2260.3px;top:2033px;width:5px;height:2px;background:#8a8a8a;"></div>
<div class="t" style="left:2267.3px;top:2023px;font-size:20px;color:#a3a3a3;font-weight:normal;font-family:"Liberation Sans", sans-serif;letter-spacing:0.7px;">3:30</div>
<div style="left:2317.8px;top:2019px;width:2px;height:5px;background:#777;"></div>
<div style="left:2375.2px;top:2019px;width:2px;height:5px;background:#777;"></div>
<div style="left:2432.6px;top:2019px;width:2px;height:16px;background:#8a8a8a;"></div>
<div style="left:2432.6px;top:2033px;width:5px;height:2px;background:#8a8a8a;"></div>
<div class="t" style="left:2439.6px;top:2023px;font-size:20px;color:#a3a3a3;font-weight:normal;font-family:"Liberation Sans", sans-serif;letter-spacing:0.7px;">3:45</div>
<div style="left:2490.1px;top:2019px;width:2px;height:5px;background:#777;"></div>
<div style="left:2547.5px;top:2019px;width:2px;height:5px;background:#777;"></div>
<div style="left:2605px;top:2019px;width:2px;height:16px;background:#8a8a8a;"></div>
<div style="left:2605px;top:2033px;width:5px;height:2px;background:#8a8a8a;"></div>
<div class="t" style="left:2612px;top:2023px;font-size:20px;color:#a3a3a3;font-weight:normal;font-family:"Liberation Sans", sans-serif;letter-spacing:0.7px;">4:00</div>
<div style="left:2662.4px;top:2019px;width:2px;height:5px;background:#777;"></div>
<div style="left:2719.8px;top:2019px;width:2px;height:5px;background:#777;"></div>
<div style="left:2777.3px;top:2019px;width:2px;height:16px;background:#8a8a8a;"></div>
<div style="left:2777.3px;top:2033px;width:5px;height:2px;background:#8a8a8a;"></div>
<div class="t" style="left:2784.3px;top:2023px;font-size:20px;color:#a3a3a3;font-weight:normal;font-family:"Liberation Sans", sans-serif;letter-spacing:0.7px;">4:15</div>
<div style="left:2834.7px;top:2019px;width:2px;height:5px;background:#777;"></div>
<div style="left:2892.1px;top:2019px;width:2px;height:5px;background:#777;"></div>
<div style="left:2949.6px;top:2019px;width:2px;height:16px;background:#8a8a8a;"></div>
<div style="left:2949.6px;top:2033px;width:5px;height:2px;background:#8a8a8a;"></div>
<div class="t" style="left:2956.6px;top:2023px;font-size:20px;color:#a3a3a3;font-weight:normal;font-family:"Liberation Sans", sans-serif;letter-spacing:0.7px;">4:30</div>
<div style="left:3007px;top:2019px;width:2px;height:5px;background:#777;"></div>
<div style="left:3064.4px;top:2019px;width:2px;height:5px;background:#777;"></div>
<div style="left:3040px;top:1975px;width:111px;height:40px;overflow:hidden;"><div class="t" style="right:-5px;top:1.5px;font-size:35px;letter-spacing:2px;color:#777;font-weight:bold;">16/1</div></div>
<div style="left:21.7px;top:182px;width:2.2px;height:1834px;background:#9a9a9a;"></div>
<div style="left:195.4px;top:182px;width:2.2px;height:1834px;background:#9a9a9a;"></div>
<div style="left:369px;top:182px;width:2.2px;height:1834px;background:#9a9a9a;"></div>
<div style="left:542.7px;top:182px;width:2.2px;height:1834px;background:#9a9a9a;"></div>
<div style="left:716.4px;top:182px;width:2.2px;height:1834px;background:#9a9a9a;"></div>
<div style="left:803.2px;top:182px;width:2.2px;height:1834px;background:#9a9a9a;"></div>
<div style="left:890px;top:182px;width:2.2px;height:1834px;background:#9a9a9a;"></div>
<div style="left:976.9px;top:182px;width:2.2px;height:1834px;background:#9a9a9a;"></div>
<div style="left:1042px;top:182px;width:2.2px;height:1834px;background:#9a9a9a;"></div>
<div style="left:1063.7px;top:182px;width:2.2px;height:1834px;background:#9a9a9a;"></div>
<div style="left:1237.3px;top:182px;width:2.2px;height:1834px;background:#9a9a9a;"></div>
<div style="left:1584.7px;top:182px;width:2.2px;height:1834px;background:#9a9a9a;"></div>
<div style="left:1671.5px;top:182px;width:2.2px;height:1834px;background:#9a9a9a;"></div>
<div style="left:1758.3px;top:182px;width:2.2px;height:1834px;background:#9a9a9a;"></div>
<div style="left:1845.2px;top:182px;width:2.2px;height:1834px;background:#9a9a9a;"></div>
<div style="left:1932px;top:182px;width:2.2px;height:1834px;background:#9a9a9a;"></div>
<div style="left:2105.7px;top:182px;width:2.2px;height:1834px;background:#9a9a9a;"></div>
<div style="left:2279.3px;top:182px;width:2.2px;height:1834px;background:#9a9a9a;"></div>
<div style="left:2800.3px;top:182px;width:2.2px;height:1834px;background:#9a9a9a;"></div>
<div style="left:2974px;top:182px;width:2.2px;height:1834px;background:#9a9a9a;"></div>
<div style="left:3147.7px;top:182px;width:2.2px;height:1834px;background:#9a9a9a;"></div>
<svg style="position:absolute;left:21.7px;top:182px" width="20" height="22"><polygon points="1.5,1.5 17,11 1.5,20.5" fill="#575757" stroke="#9a9a9a" stroke-width="2"/></svg>
<div style="left:42.7px;top:182px;height:22px;padding:0 2px;background:#2f2f2f;font-size:20px;line-height:22px;color:#cfcfcf;white-space:nowrap;-webkit-text-stroke:0.5px #cfcfcf;">7</div>
<svg style="position:absolute;left:195.4px;top:182px" width="20" height="22"><polygon points="1.5,1.5 17,11 1.5,20.5" fill="#575757" stroke="#9a9a9a" stroke-width="2"/></svg>
<div style="left:216.4px;top:182px;height:22px;padding:0 2px;background:#2f2f2f;font-size:20px;line-height:22px;color:#cfcfcf;white-space:nowrap;-webkit-text-stroke:0.5px #cfcfcf;">12</div>
<svg style="position:absolute;left:369px;top:182px" width="20" height="22"><polygon points="1.5,1.5 17,11 1.5,20.5" fill="#575757" stroke="#9a9a9a" stroke-width="2"/></svg>
<div style="left:390px;top:182px;height:22px;padding:0 2px;background:#2f2f2f;font-size:20px;line-height:22px;color:#cfcfcf;white-space:nowrap;-webkit-text-stroke:0.5px #cfcfcf;">13</div>
<svg style="position:absolute;left:542.7px;top:182px" width="20" height="22"><polygon points="1.5,1.5 17,11 1.5,20.5" fill="#575757" stroke="#9a9a9a" stroke-width="2"/></svg>
<div style="left:563.7px;top:182px;height:22px;padding:0 2px;background:#2f2f2f;font-size:20px;line-height:22px;color:#cfcfcf;white-space:nowrap;-webkit-text-stroke:0.5px #cfcfcf;">E</div>
<svg style="position:absolute;left:716.4px;top:182px" width="20" height="22"><polygon points="1.5,1.5 17,11 1.5,20.5" fill="#575757" stroke="#9a9a9a" stroke-width="2"/></svg>
<div style="left:737.4px;top:182px;height:22px;padding:0 2px;background:#2f2f2f;font-size:20px;line-height:22px;color:#cfcfcf;white-space:nowrap;-webkit-text-stroke:0.5px #cfcfcf;">FILL</div>
<svg style="position:absolute;left:803.2px;top:182px" width="20" height="22"><polygon points="1.5,1.5 17,11 1.5,20.5" fill="#575757" stroke="#9a9a9a" stroke-width="2"/></svg>
<div style="left:824.2px;top:182px;height:22px;padding:0 2px;background:#2f2f2f;font-size:20px;line-height:22px;color:#cfcfcf;white-space:nowrap;-webkit-text-stroke:0.5px #cfcfcf;">17</div>
<svg style="position:absolute;left:890px;top:182px" width="20" height="22"><polygon points="1.5,1.5 17,11 1.5,20.5" fill="#575757" stroke="#9a9a9a" stroke-width="2"/></svg>
<div style="left:911px;top:182px;height:22px;padding:0 2px;background:#2f2f2f;font-size:20px;line-height:22px;color:#cfcfcf;white-space:nowrap;-webkit-text-stroke:0.5px #cfcfcf;">16</div>
<svg style="position:absolute;left:976.9px;top:182px" width="20" height="22"><polygon points="1.5,1.5 17,11 1.5,20.5" fill="#575757" stroke="#9a9a9a" stroke-width="2"/></svg>
<div style="left:997.9px;top:182px;height:22px;padding:0 2px;background:#2f2f2f;font-size:20px;line-height:22px;color:#cfcfcf;white-space:nowrap;-webkit-text-stroke:0.5px #cfcfcf;">18</div>
<svg style="position:absolute;left:1042px;top:182px" width="20" height="22"><polygon points="1.5,1.5 17,11 1.5,20.5" fill="#575757" stroke="#9a9a9a" stroke-width="2"/></svg>
<svg style="position:absolute;left:1063.7px;top:182px" width="20" height="22"><polygon points="1.5,1.5 17,11 1.5,20.5" fill="#575757" stroke="#9a9a9a" stroke-width="2"/></svg>
<div style="left:1084.7px;top:182px;height:22px;padding:0 2px;background:#2f2f2f;font-size:20px;line-height:22px;color:#cfcfcf;white-space:nowrap;-webkit-text-stroke:0.5px #cfcfcf;">DROP1</div>
<svg style="position:absolute;left:1237.3px;top:182px" width="20" height="22"><polygon points="1.5,1.5 17,11 1.5,20.5" fill="#575757" stroke="#9a9a9a" stroke-width="2"/></svg>
<div style="left:1258.3px;top:182px;height:22px;padding:0 2px;background:#2f2f2f;font-size:20px;line-height:22px;color:#cfcfcf;white-space:nowrap;-webkit-text-stroke:0.5px #cfcfcf;">11</div>
<svg style="position:absolute;left:1584.7px;top:182px" width="20" height="22"><polygon points="1.5,1.5 17,11 1.5,20.5" fill="#575757" stroke="#9a9a9a" stroke-width="2"/></svg>
<div style="left:1605.7px;top:182px;height:22px;padding:0 2px;background:#2f2f2f;font-size:20px;line-height:22px;color:#cfcfcf;white-space:nowrap;-webkit-text-stroke:0.5px #cfcfcf;">5</div>
<svg style="position:absolute;left:1671.5px;top:182px" width="20" height="22"><polygon points="1.5,1.5 17,11 1.5,20.5" fill="#575757" stroke="#9a9a9a" stroke-width="2"/></svg>
<div style="left:1692.5px;top:182px;height:22px;padding:0 2px;background:#2f2f2f;font-size:20px;line-height:22px;color:#cfcfcf;white-space:nowrap;-webkit-text-stroke:0.5px #cfcfcf;">FILL</div>
<svg style="position:absolute;left:1758.3px;top:182px" width="20" height="22"><polygon points="1.5,1.5 17,11 1.5,20.5" fill="#575757" stroke="#9a9a9a" stroke-width="2"/></svg>
<div style="left:1779.3px;top:182px;height:22px;padding:0 2px;background:#2f2f2f;font-size:20px;line-height:22px;color:#cfcfcf;white-space:nowrap;-webkit-text-stroke:0.5px #cfcfcf;">9</div>
<svg style="position:absolute;left:1845.2px;top:182px" width="20" height="22"><polygon points="1.5,1.5 17,11 1.5,20.5" fill="#575757" stroke="#9a9a9a" stroke-width="2"/></svg>
<div style="left:1866.2px;top:182px;height:22px;padding:0 2px;background:#2f2f2f;font-size:20px;line-height:22px;color:#cfcfcf;white-space:nowrap;-webkit-text-stroke:0.5px #cfcfcf;">20</div>
<svg style="position:absolute;left:1932px;top:182px" width="20" height="22"><polygon points="1.5,1.5 17,11 1.5,20.5" fill="#575757" stroke="#9a9a9a" stroke-width="2"/></svg>
<div style="left:1953px;top:182px;height:22px;padding:0 2px;background:#2f2f2f;font-size:20px;line-height:22px;color:#cfcfcf;white-space:nowrap;-webkit-text-stroke:0.5px #cfcfcf;">21</div>
<svg style="position:absolute;left:2105.7px;top:182px" width="20" height="22"><polygon points="1.5,1.5 17,11 1.5,20.5" fill="#575757" stroke="#9a9a9a" stroke-width="2"/></svg>
<div style="left:2126.7px;top:182px;height:22px;padding:0 2px;background:#2f2f2f;font-size:20px;line-height:22px;color:#cfcfcf;white-space:nowrap;-webkit-text-stroke:0.5px #cfcfcf;">D2</div>
<svg style="position:absolute;left:2279.3px;top:182px" width="20" height="22"><polygon points="1.5,1.5 17,11 1.5,20.5" fill="#575757" stroke="#9a9a9a" stroke-width="2"/></svg>
<div style="left:2300.3px;top:182px;height:22px;padding:0 2px;background:#2f2f2f;font-size:20px;line-height:22px;color:#cfcfcf;white-space:nowrap;-webkit-text-stroke:0.5px #cfcfcf;">8</div>
<svg style="position:absolute;left:2800.3px;top:182px" width="20" height="22"><polygon points="1.5,1.5 17,11 1.5,20.5" fill="#575757" stroke="#9a9a9a" stroke-width="2"/></svg>
<div style="left:2821.3px;top:182px;height:22px;padding:0 2px;background:#2f2f2f;font-size:20px;line-height:22px;color:#cfcfcf;white-space:nowrap;-webkit-text-stroke:0.5px #cfcfcf;">10</div>
<svg style="position:absolute;left:2974px;top:182px" width="20" height="22"><polygon points="1.5,1.5 17,11 1.5,20.5" fill="#575757" stroke="#9a9a9a" stroke-width="2"/></svg>
<div style="left:2995px;top:182px;height:22px;padding:0 2px;background:#2f2f2f;font-size:20px;line-height:22px;color:#cfcfcf;white-space:nowrap;-webkit-text-stroke:0.5px #cfcfcf;">22</div>
<svg style="position:absolute;left:3147.7px;top:182px" width="8" height="22"><polygon points="1.5,1.5 17,11 1.5,20.5" fill="#575757" stroke="#9a9a9a" stroke-width="2"/></svg>
<div style="left:3156px;top:204px;width:246px;height:1814px;background:#232323;"></div>
<div style="left:3160px;top:352px;width:8px;height:496px;background:#1f2b8f;"></div>
<div style="left:3160px;top:852px;width:8px;height:402px;background:#7dfb5b;"></div>
<div style="left:3160px;top:1258px;width:8px;height:642px;background:#ea4bcf;"></div>
<div style="left:3160px;top:208px;width:196px;height:68px;background:#e94b42;"></div>
<svg style="position:absolute;left:3163px;top:211px" width="28" height="28"><circle cx="14" cy="14" r="12.2" fill="none" stroke="#3d1210" stroke-width="2.1"/><line x1="8.5" y1="10" x2="19.5" y2="10" stroke="#3d1210" stroke-width="2"/><line x1="8.5" y1="14" x2="19.5" y2="14" stroke="#3d1210" stroke-width="2"/><line x1="8.5" y1="18" x2="19.5" y2="18" stroke="#3d1210" stroke-width="2"/></svg>
<div class="t" style="left:3197px;top:216px;font-size:19.5px;color:#3d1210;font-weight:bold;font-family:"Liberation Sans", sans-serif;">1KICK</div>
<div style="left:3360px;top:208px;width:42px;height:68px;background:#363636;"></div>
<div style="left:3368px;top:212px;width:6px;height:5.7px;background:#1a1a1a;"></div>
<div style="left:3376px;top:212px;width:6px;height:5.7px;background:#1a1a1a;"></div>
<div style="left:3368px;top:220px;width:6px;height:52px;background:#1a1a1a;"></div>
<div style="left:3376px;top:220px;width:6px;height:52px;background:#1a1a1a;"></div>
<div style="left:3160px;top:280px;width:196px;height:68px;background:#fdf05e;"></div>
<svg style="position:absolute;left:3163px;top:283px" width="28" height="28"><circle cx="14" cy="14" r="12.2" fill="none" stroke="#3a3410" stroke-width="2.1"/><line x1="8.5" y1="10" x2="19.5" y2="10" stroke="#3a3410" stroke-width="2"/><line x1="8.5" y1="14" x2="19.5" y2="14" stroke="#3a3410" stroke-width="2"/><line x1="8.5" y1="18" x2="19.5" y2="18" stroke="#3a3410" stroke-width="2"/></svg>
<div class="t" style="left:3197px;top:288px;font-size:19.5px;color:#3a3410;font-weight:bold;font-family:"Liberation Sans", sans-serif;">1DRUMZ</div>
<div style="left:3360px;top:280px;width:42px;height:68px;background:#363636;"></div>
<div style="left:3368px;top:284px;width:6px;height:5.7px;background:#1a1a1a;"></div>
<div style="left:3376px;top:284px;width:6px;height:5.7px;background:#1a1a1a;"></div>
<div style="left:3368px;top:292px;width:6px;height:52px;background:#1a1a1a;"></div>
<div style="left:3376px;top:292px;width:6px;height:52px;background:#1a1a1a;"></div>
<div style="left:3160px;top:352px;width:196px;height:104px;background:#1f2b8f;"></div>
<svg style="position:absolute;left:3163px;top:355px" width="28" height="28"><circle cx="14" cy="14" r="12.2" fill="none" stroke="#c9ccf2" stroke-width="2.1"/><line x1="8.5" y1="10" x2="19.5" y2="10" stroke="#c9ccf2" stroke-width="2"/><line x1="12.5" y1="14" x2="19.5" y2="14" stroke="#c9ccf2" stroke-width="2"/><line x1="12.5" y1="18" x2="19.5" y2="18" stroke="#c9ccf2" stroke-width="2"/></svg>
<div class="t" style="left:3197px;top:360px;font-size:19.5px;color:#c9ccf2;font-weight:bold;font-family:"Liberation Sans", sans-serif;">1BASS</div>
<div style="left:3360px;top:352px;width:42px;height:104px;background:#363636;"></div>
<div style="left:3368px;top:356px;width:6px;height:5.7px;background:#1a1a1a;"></div>
<div style="left:3376px;top:356px;width:6px;height:5.7px;background:#1a1a1a;"></div>
<div style="left:3368px;top:364px;width:6px;height:88px;background:#1a1a1a;"></div>
<div style="left:3376px;top:364px;width:6px;height:88px;background:#1a1a1a;"></div>
<div style="left:3168px;top:460px;width:2px;height:104px;background:#1e1e1e;"></div>
<div style="left:3170px;top:460px;width:186px;height:104px;background:#1f2b8f;"></div>
<svg style="position:absolute;left:3172px;top:463px" width="28" height="28"><circle cx="14" cy="14" r="12.2" fill="none" stroke="#c9ccf2" stroke-width="2.1"/><polygon points="8,11 20,11 14,19" fill="#c9ccf2"/></svg>
<div class="t" style="left:3207px;top:468px;font-size:19.5px;color:#c9ccf2;font-weight:bold;font-family:"Liberation Sans", sans-serif;letter-spacing:-0.2px;">ORGAN BASS d</div>
<div style="left:3360px;top:460px;width:42px;height:104px;background:#363636;"></div>
<div style="left:3368px;top:464px;width:6px;height:5.7px;background:#1a1a1a;"></div>
<div style="left:3376px;top:464px;width:6px;height:5.7px;background:#1a1a1a;"></div>
<div style="left:3368px;top:472px;width:6px;height:88px;background:#1a1a1a;"></div>
<div style="left:3376px;top:472px;width:6px;height:88px;background:#1a1a1a;"></div>
<div style="left:3168px;top:568px;width:2px;height:104px;background:#1e1e1e;"></div>
<div style="left:3170px;top:568px;width:186px;height:104px;background:#1f2b8f;"></div>
<svg style="position:absolute;left:3172px;top:571px" width="28" height="28"><circle cx="14" cy="14" r="12.2" fill="none" stroke="#c9ccf2" stroke-width="2.1"/><polygon points="8,11 20,11 14,19" fill="#c9ccf2"/></svg>
<div class="t" style="left:3207px;top:576px;font-size:19.5px;color:#c9ccf2;font-weight:bold;font-family:"Liberation Sans", sans-serif;letter-spacing:-0.2px;">ORGAN BASS d</div>
<div style="left:3360px;top:568px;width:42px;height:104px;background:#363636;"></div>
<div style="left:3368px;top:572px;width:6px;height:5.7px;background:#1a1a1a;"></div>
<div style="left:3376px;top:572px;width:6px;height:5.7px;background:#1a1a1a;"></div>
<div style="left:3368px;top:580px;width:6px;height:88px;background:#1a1a1a;"></div>
<div style="left:3376px;top:580px;width:6px;height:88px;background:#1a1a1a;"></div>
<div style="left:3168px;top:676px;width:2px;height:172px;background:#1e1e1e;"></div>
<div style="left:3170px;top:676px;width:186px;height:172px;background:#1f2b8f;"></div>
<svg style="position:absolute;left:3172px;top:679px" width="28" height="28"><circle cx="14" cy="14" r="12.2" fill="none" stroke="#c9ccf2" stroke-width="2.1"/><polygon points="8,11 20,11 14,19" fill="#c9ccf2"/></svg>
<div class="t" style="left:3207px;top:684px;font-size:19.5px;color:#c9ccf2;font-weight:bold;font-family:"Liberation Sans", sans-serif;letter-spacing:-0.2px;">ORGAN BASS</div>
<div style="left:3360px;top:676px;width:42px;height:172px;background:#363636;"></div>
<div style="left:3368px;top:680px;width:6px;height:5.7px;background:#1a1a1a;"></div>
<div style="left:3376px;top:680px;width:6px;height:5.7px;background:#1a1a1a;"></div>
<div style="left:3368px;top:688px;width:6px;height:156px;background:#1a1a1a;"></div>
<div style="left:3376px;top:688px;width:6px;height:156px;background:#1a1a1a;"></div>
<div style="left:3160px;top:852px;width:196px;height:104px;background:#7dfb5b;"></div>
<svg style="position:absolute;left:3163px;top:855px" width="28" height="28"><circle cx="14" cy="14" r="12.2" fill="none" stroke="#17330f" stroke-width="2.1"/><line x1="8.5" y1="10" x2="19.5" y2="10" stroke="#17330f" stroke-width="2"/><line x1="12.5" y1="14" x2="19.5" y2="14" stroke="#17330f" stroke-width="2"/><line x1="12.5" y1="18" x2="19.5" y2="18" stroke="#17330f" stroke-width="2"/></svg>
<div class="t" style="left:3197px;top:860px;font-size:19.5px;color:#17330f;font-weight:bold;font-family:"Liberation Sans", sans-serif;">1VXZ</div>
<div style="left:3360px;top:852px;width:42px;height:104px;background:#363636;"></div>
<div style="left:3368px;top:856px;width:6px;height:5.7px;background:#1a1a1a;"></div>
<div style="left:3376px;top:856px;width:6px;height:5.7px;background:#1a1a1a;"></div>
<div style="left:3368px;top:864px;width:6px;height:88px;background:#1a1a1a;"></div>
<div style="left:3376px;top:864px;width:6px;height:88px;background:#1a1a1a;"></div>
<div style="left:3168px;top:960px;width:2px;height:104px;background:#1e1e1e;"></div>
<div style="left:3170px;top:960px;width:186px;height:104px;background:#7dfb5b;"></div>
<svg style="position:absolute;left:3172px;top:963px" width="28" height="28"><circle cx="14" cy="14" r="12.2" fill="none" stroke="#17330f" stroke-width="2.1"/><polygon points="8,11 20,11 14,19" fill="#17330f"/></svg>
<div class="t" style="left:3207px;top:968px;font-size:19.5px;color:#17330f;font-weight:bold;font-family:"Liberation Sans", sans-serif;letter-spacing:-0.2px;">MAIN VOCAL</div>
<div style="left:3360px;top:960px;width:42px;height:104px;background:#363636;"></div>
<div style="left:3368px;top:964px;width:6px;height:5.7px;background:#1a1a1a;"></div>
<div style="left:3376px;top:964px;width:6px;height:5.7px;background:#1a1a1a;"></div>
<div style="left:3368px;top:972px;width:6px;height:88px;background:#1a1a1a;"></div>
<div style="left:3376px;top:972px;width:6px;height:88px;background:#1a1a1a;"></div>
<div style="left:3168px;top:1068px;width:2px;height:34px;background:#1e1e1e;"></div>
<div style="left:3170px;top:1068px;width:186px;height:34px;background:#7dfb5b;"></div>
<svg style="position:absolute;left:3172px;top:1071px" width="28" height="28"><circle cx="14" cy="14" r="12.2" fill="none" stroke="#17330f" stroke-width="2.1"/><polygon points="11,8 19.5,14 11,20" fill="#17330f"/></svg>
<div class="t" style="left:3207px;top:1076px;font-size:19.5px;color:#17330f;font-weight:bold;font-family:"Liberation Sans", sans-serif;letter-spacing:-0.2px;">VOX MAIN DEL</div>
<div style="left:3360px;top:1068px;width:42px;height:34px;background:#363636;"></div>
<div style="left:3368px;top:1071.5px;width:6px;height:3px;background:#1a1a1a;"></div>
<div style="left:3376px;top:1071.5px;width:6px;height:3px;background:#1a1a1a;"></div>
<div style="left:3368px;top:1076px;width:6px;height:22px;background:#1a1a1a;"></div>
<div style="left:3376px;top:1076px;width:6px;height:22px;background:#1a1a1a;"></div>
<div style="left:3168px;top:1106px;width:2px;height:34px;background:#1e1e1e;"></div>
<div style="left:3170px;top:1106px;width:186px;height:34px;background:#7dfb5b;"></div>
<svg style="position:absolute;left:3172px;top:1109px" width="28" height="28"><circle cx="14" cy="14" r="12.2" fill="none" stroke="#17330f" stroke-width="2.1"/><polygon points="11,8 19.5,14 11,20" fill="#17330f"/></svg>
<div class="t" style="left:3207px;top:1114px;font-size:19.5px;color:#17330f;font-weight:bold;font-family:"Liberation Sans", sans-serif;letter-spacing:-0.2px;">VOX DELAY 2 F</div>
<div style="left:3360px;top:1106px;width:42px;height:34px;background:#363636;"></div>
<div style="left:3368px;top:1109.5px;width:6px;height:3px;background:#1a1a1a;"></div>
<div style="left:3376px;top:1109.5px;width:6px;height:3px;background:#1a1a1a;"></div>
<div style="left:3368px;top:1114px;width:6px;height:22px;background:#1a1a1a;"></div>
<div style="left:3376px;top:1114px;width:6px;height:22px;background:#1a1a1a;"></div>
<div style="left:3168px;top:1144px;width:2px;height:34px;background:#1e1e1e;"></div>
<div style="left:3170px;top:1144px;width:186px;height:34px;background:#7dfb5b;"></div>
<svg style="position:absolute;left:3172px;top:1147px" width="28" height="28"><circle cx="14" cy="14" r="12.2" fill="none" stroke="#17330f" stroke-width="2.1"/><polygon points="11,8 19.5,14 11,20" fill="#17330f"/></svg>
<div class="t" style="left:3207px;top:1152px;font-size:19.5px;color:#17330f;font-weight:bold;font-family:"Liberation Sans", sans-serif;letter-spacing:-0.2px;">LIFTING LOOP</div>
<div style="left:3360px;top:1144px;width:42px;height:34px;background:#363636;"></div>
<div style="left:3368px;top:1147.5px;width:6px;height:3px;background:#1a1a1a;"></div>
<div style="left:3376px;top:1147.5px;width:6px;height:3px;background:#1a1a1a;"></div>
<div style="left:3368px;top:1152px;width:6px;height:22px;background:#1a1a1a;"></div>
<div style="left:3376px;top:1152px;width:6px;height:22px;background:#1a1a1a;"></div>
<div style="left:3168px;top:1182px;width:2px;height:34px;background:#1e1e1e;"></div>
<div style="left:3170px;top:1182px;width:186px;height:34px;background:#7dfb5b;"></div>
<svg style="position:absolute;left:3172px;top:1185px" width="28" height="28"><circle cx="14" cy="14" r="12.2" fill="none" stroke="#17330f" stroke-width="2.1"/><polygon points="11,8 19.5,14 11,20" fill="#17330f"/></svg>
<div class="t" style="left:3207px;top:1190px;font-size:19.5px;color:#17330f;font-weight:bold;font-family:"Liberation Sans", sans-serif;letter-spacing:-0.2px;">VX 1 HIGHER D</div>
<div style="left:3360px;top:1182px;width:42px;height:34px;background:#363636;"></div>
<div style="left:3368px;top:1185.5px;width:6px;height:3px;background:#1a1a1a;"></div>
<div style="left:3376px;top:1185.5px;width:6px;height:3px;background:#1a1a1a;"></div>
<div style="left:3368px;top:1190px;width:6px;height:22px;background:#1a1a1a;"></div>
<div style="left:3376px;top:1190px;width:6px;height:22px;background:#1a1a1a;"></div>
<div style="left:3168px;top:1220px;width:2px;height:34px;background:#1e1e1e;"></div>
<div style="left:3170px;top:1220px;width:186px;height:34px;background:#7dfb5b;"></div>
<svg style="position:absolute;left:3172px;top:1223px" width="28" height="28"><circle cx="14" cy="14" r="12.2" fill="none" stroke="#17330f" stroke-width="2.1"/><polygon points="11,8 19.5,14 11,20" fill="#17330f"/></svg>
<div class="t" style="left:3207px;top:1228px;font-size:19.5px;color:#17330f;font-weight:bold;font-family:"Liberation Sans", sans-serif;letter-spacing:-0.2px;">REV VX</div>
<div style="left:3360px;top:1220px;width:42px;height:34px;background:#363636;"></div>
<div style="left:3368px;top:1223.5px;width:6px;height:3px;background:#1a1a1a;"></div>
<div style="left:3376px;top:1223.5px;width:6px;height:3px;background:#1a1a1a;"></div>
<div style="left:3368px;top:1228px;width:6px;height:22px;background:#1a1a1a;"></div>
<div style="left:3376px;top:1228px;width:6px;height:22px;background:#1a1a1a;"></div>
<div style="left:3160px;top:1258px;width:196px;height:104px;background:#ea4bcf;"></div>
<svg style="position:absolute;left:3163px;top:1261px" width="28" height="28"><circle cx="14" cy="14" r="12.2" fill="none" stroke="#3b0e36" stroke-width="2.1"/><line x1="8.5" y1="10" x2="19.5" y2="10" stroke="#3b0e36" stroke-width="2"/><line x1="12.5" y1="14" x2="19.5" y2="14" stroke="#3b0e36" stroke-width="2"/><line x1="12.5" y1="18" x2="19.5" y2="18" stroke="#3b0e36" stroke-width="2"/></svg>
<div class="t" style="left:3197px;top:1266px;font-size:19.5px;color:#3b0e36;font-weight:bold;font-family:"Liberation Sans", sans-serif;">1SYNTHZ</div>
<div style="left:3360px;top:1258px;width:42px;height:104px;background:#363636;"></div>
<div style="left:3368px;top:1262px;width:6px;height:5.7px;background:#1a1a1a;"></div>
<div style="left:3376px;top:1262px;width:6px;height:5.7px;background:#1a1a1a;"></div>
<div style="left:3368px;top:1270px;width:6px;height:88px;background:#1a1a1a;"></div>
<div style="left:3376px;top:1270px;width:6px;height:88px;background:#1a1a1a;"></div>
<div style="left:3168px;top:1366px;width:2px;height:104px;background:#1e1e1e;"></div>
<div style="left:3170px;top:1366px;width:186px;height:104px;background:#ea4bcf;"></div>
<svg style="position:absolute;left:3172px;top:1369px" width="28" height="28"><circle cx="14" cy="14" r="12.2" fill="none" stroke="#3b0e36" stroke-width="2.1"/><polygon points="8,11 20,11 14,19" fill="#3b0e36"/></svg>
<div class="t" style="left:3207px;top:1374px;font-size:19.5px;color:#3b0e36;font-weight:bold;font-family:"Liberation Sans", sans-serif;letter-spacing:-0.2px;">STRING</div>
<div style="left:3360px;top:1366px;width:42px;height:104px;background:#363636;"></div>
<div style="left:3368px;top:1370px;width:6px;height:5.7px;background:#1a1a1a;"></div>
<div style="left:3376px;top:1370px;width:6px;height:5.7px;background:#1a1a1a;"></div>
<div style="left:3368px;top:1378px;width:6px;height:88px;background:#1a1a1a;"></div>
<div style="left:3376px;top:1378px;width:6px;height:88px;background:#1a1a1a;"></div>
<div style="left:3168px;top:1474px;width:2px;height:104px;background:#1e1e1e;"></div>
<div style="left:3170px;top:1474px;width:186px;height:104px;background:#ea4bcf;"></div>
<svg style="position:absolute;left:3172px;top:1477px" width="28" height="28"><circle cx="14" cy="14" r="12.2" fill="none" stroke="#3b0e36" stroke-width="2.1"/><polygon points="8,11 20,11 14,19" fill="#3b0e36"/></svg>
<div class="t" style="left:3207px;top:1482px;font-size:19.5px;color:#3b0e36;font-weight:bold;font-family:"Liberation Sans", sans-serif;letter-spacing:-0.2px;">STAB 7 HOUSE</div>
<div style="left:3360px;top:1474px;width:42px;height:104px;background:#363636;"></div>
<div style="left:3368px;top:1478px;width:6px;height:5.7px;background:#1a1a1a;"></div>
<div style="left:3376px;top:1478px;width:6px;height:5.7px;background:#1a1a1a;"></div>
<div style="left:3368px;top:1486px;width:6px;height:88px;background:#1a1a1a;"></div>
<div style="left:3376px;top:1486px;width:6px;height:88px;background:#1a1a1a;"></div>
<div style="left:3168px;top:1582px;width:2px;height:138px;background:#1e1e1e;"></div>
<div style="left:3170px;top:1582px;width:186px;height:138px;background:#ea4bcf;"></div>
<svg style="position:absolute;left:3172px;top:1585px" width="28" height="28"><circle cx="14" cy="14" r="12.2" fill="none" stroke="#3b0e36" stroke-width="2.1"/><polygon points="8,11 20,11 14,19" fill="#3b0e36"/></svg>
<div class="t" style="left:3207px;top:1590px;font-size:19.5px;color:#3b0e36;font-weight:bold;font-family:"Liberation Sans", sans-serif;letter-spacing:-0.2px;">PLUCK ARP</div>
<div style="left:3360px;top:1582px;width:42px;height:138px;background:#363636;"></div>
<div style="left:3368px;top:1586px;width:6px;height:5.7px;background:#1a1a1a;"></div>
<div style="left:3376px;top:1586px;width:6px;height:5.7px;background:#1a1a1a;"></div>
<div style="left:3368px;top:1594px;width:6px;height:122px;background:#1a1a1a;"></div>
<div style="left:3376px;top:1594px;width:6px;height:122px;background:#1a1a1a;"></div>
<div style="left:3168px;top:1724px;width:2px;height:138px;background:#1e1e1e;"></div>
<div style="left:3170px;top:1724px;width:186px;height:138px;background:#b8dce6;"></div>
<svg style="position:absolute;left:3172px;top:1727px" width="28" height="28"><circle cx="14" cy="14" r="12.2" fill="none" stroke="#151515" stroke-width="2.1"/><polygon points="8,11 20,11 14,19" fill="#151515"/></svg>
<div class="t" style="left:3207px;top:1732px;font-size:19.5px;color:#151515;font-weight:bold;font-family:"Liberation Sans", sans-serif;letter-spacing:-0.2px;">ATMO PLUCK</div>
<div style="left:3360px;top:1724px;width:42px;height:138px;background:#363636;"></div>
<div style="left:3368px;top:1728px;width:6px;height:5.7px;background:#1a1a1a;"></div>
<div style="left:3376px;top:1728px;width:6px;height:5.7px;background:#1a1a1a;"></div>
<div style="left:3368px;top:1736px;width:6px;height:122px;background:#1a1a1a;"></div>
<div style="left:3376px;top:1736px;width:6px;height:122px;background:#1a1a1a;"></div>
<div style="left:3168px;top:1866px;width:2px;height:34px;background:#1e1e1e;"></div>
<div style="left:3170px;top:1866px;width:186px;height:34px;background:#ea4bcf;"></div>
<svg style="position:absolute;left:3172px;top:1869px" width="28" height="28"><circle cx="14" cy="14" r="12.2" fill="none" stroke="#3b0e36" stroke-width="2.1"/><polygon points="11,8 19.5,14 11,20" fill="#3b0e36"/></svg>
<div class="t" style="left:3207px;top:1874px;font-size:19.5px;color:#3b0e36;font-weight:bold;font-family:"Liberation Sans", sans-serif;letter-spacing:-0.2px;">CHOIR BREAK</div>
<div style="left:3360px;top:1866px;width:42px;height:34px;background:#363636;"></div>
<div style="left:3368px;top:1869.5px;width:6px;height:3px;background:#1a1a1a;"></div>
<div style="left:3376px;top:1869.5px;width:6px;height:3px;background:#1a1a1a;"></div>
<div style="left:3368px;top:1874px;width:6px;height:22px;background:#1a1a1a;"></div>
<div style="left:3376px;top:1874px;width:6px;height:22px;background:#1a1a1a;"></div>
<div style="left:3160px;top:1904px;width:196px;height:68px;background:#ffffff;"></div>
<svg style="position:absolute;left:3163px;top:1907px" width="28" height="28"><circle cx="14" cy="14" r="12.2" fill="none" stroke="#454545" stroke-width="2.1"/><line x1="8.5" y1="10" x2="19.5" y2="10" stroke="#454545" stroke-width="2"/><line x1="8.5" y1="14" x2="19.5" y2="14" stroke="#454545" stroke-width="2"/><line x1="8.5" y1="18" x2="19.5" y2="18" stroke="#454545" stroke-width="2"/></svg>
<div class="t" style="left:3197px;top:1912px;font-size:19.5px;color:#454545;font-weight:bold;font-family:"Liberation Sans", sans-serif;">1FXZ</div>
<div style="left:3360px;top:1904px;width:42px;height:68px;background:#363636;"></div>
<div style="left:3368px;top:1908px;width:6px;height:5.7px;background:#1a1a1a;"></div>
<div style="left:3376px;top:1908px;width:6px;height:5.7px;background:#1a1a1a;"></div>
<div style="left:3368px;top:1916px;width:6px;height:52px;background:#1a1a1a;"></div>
<div style="left:3376px;top:1916px;width:6px;height:52px;background:#1a1a1a;"></div>
<div style="left:3160px;top:1980px;width:196px;height:34px;background:#ffffff;"></div>
<svg style="position:absolute;left:3163px;top:1983px" width="28" height="28"><circle cx="14" cy="14" r="12.2" fill="none" stroke="#454545" stroke-width="2.1"/><polygon points="11,8 19.5,14 11,20" fill="#454545"/></svg>
<div class="t" style="left:3201px;top:1988px;font-size:19.5px;color:#454545;font-weight:bold;font-family:"Liberation Sans", sans-serif;">Main</div>
<div style="left:3360px;top:1980px;width:42px;height:34px;background:#363636;"></div>
<div style="left:3368px;top:1983.5px;width:6px;height:3px;background:#1a1a1a;"></div>
<div style="left:3376px;top:1983.5px;width:6px;height:3px;background:#1a1a1a;"></div>
<div style="left:3368px;top:1988px;width:6px;height:22px;background:#1a1a1a;"></div>
<div style="left:3376px;top:1988px;width:6px;height:22px;background:#1a1a1a;"></div>
<div style="left:3368px;top:943px;width:5px;height:2px;background:#6fd35a;"></div>
<div style="left:3376px;top:942px;width:6px;height:2px;background:#6fd35a;"></div>
<div style="left:3368px;top:2005px;width:5px;height:2px;background:#6fd35a;"></div>
<div style="left:3376px;top:2005px;width:6px;height:2px;background:#6fd35a;"></div>
<div style="left:3360px;top:1724px;width:42px;height:138px;background:#464646;"></div>
<div style="left:3151px;top:1724px;width:5px;height:138px;background:#474747;"></div>
<div style="left:3368px;top:1728px;width:6px;height:5.7px;background:#1a1a1a;"></div>
<div style="left:3376px;top:1728px;width:6px;height:5.7px;background:#1a1a1a;"></div>
<div style="left:3368px;top:1736px;width:6px;height:122px;background:#1a1a1a;"></div>
<div style="left:3376px;top:1736px;width:6px;height:122px;background:#1a1a1a;"></div>
<div style="left:3166px;top:134px;width:58px;height:26px;border-radius:13px;background:#1e1e1e;"></div>
<div class="t" style="left:3179px;top:138.5px;font-size:20px;color:#cfcfcf;font-weight:normal;font-family:"Liberation Sans", sans-serif;-webkit-text-stroke:0.4px #cfcfcf;">Set</div>
<div style="left:3246px;top:134px;width:46px;height:26px;background:#1b1b1b;"></div>
<svg style="position:absolute;left:3246px;top:134px" width="46" height="26"><line x1="18" y1="18" x2="28" y2="8" stroke="#bbb" stroke-width="2.5"/><circle cx="18" cy="18" r="3" fill="#bbb"/><circle cx="28" cy="8" r="2.5" fill="#bbb"/></svg>
<div style="left:3300px;top:134px;width:46px;height:26px;background:#1b1b1b;"></div>
<div style="left:3301.5px;top:135.5px;width:43px;height:23px;background:#d97350;"></div>
<svg style="position:absolute;left:3300px;top:134px" width="46" height="26"><path d="M17.5,13 V10 Q17.5,5.5 23,5.5 Q28.5,5.5 28.5,10 V13" fill="none" stroke="#111" stroke-width="2.5"/><rect x="15" y="12.5" width="16" height="10" fill="#111"/></svg>
<div style="left:3166px;top:171px;width:26px;height:25px;border-radius:13px;background:#1e1e1e;"></div>
<div style="left:3198px;top:171px;width:26px;height:25px;border-radius:13px;background:#1e1e1e;"></div>
<svg style="position:absolute;left:3166px;top:171px" width="26" height="25"><polygon points="6,12.5 13,7 13,18" fill="#777"/><line x1="11" y1="12.5" x2="20" y2="12.5" stroke="#777" stroke-width="3"/></svg>
<svg style="position:absolute;left:3198px;top:171px" width="26" height="25"><polygon points="20,12.5 13,7 13,18" fill="#ddd"/><line x1="6" y1="12.5" x2="15" y2="12.5" stroke="#ddd" stroke-width="3"/></svg>
<div style="left:3159px;top:2026px;width:32px;height:26px;background:#111;"></div>
<div style="left:3161px;top:2028px;width:28px;height:22px;background:#f0b064;"></div>
<svg style="position:absolute;left:3160px;top:2027px" width="30" height="24"><g stroke="#222" stroke-width="1.8"><line x1="7" y1="9" x2="7" y2="15"/><line x1="11" y1="4" x2="11" y2="20"/><line x1="15" y1="7" x2="15" y2="17"/><line x1="19" y1="9" x2="19" y2="15"/><line x1="23" y1="10" x2="23" y2="14"/></g></svg>
<div style="left:3197px;top:2027px;width:69px;height:24px;background:#1c1c1c;"></div>
<div style="left:3199px;top:2029px;width:17px;height:20px;background:#2f6e84;"></div>
<div class="t" style="left:3203px;top:2030px;font-size:20px;color:#bdbdbd;font-weight:normal;font-family:"Liberation Sans", sans-serif;letter-spacing:0.6px;">1.00x</div>
<div style="left:3288px;top:2027px;width:30px;height:24px;background:#1c1c1c;"></div>
<div class="t" style="left:3296px;top:2030px;font-size:20px;color:#bdbdbd;font-weight:normal;font-family:"Liberation Sans", sans-serif;">H</div>
<div style="left:3324px;top:2027px;width:30px;height:24px;background:#1c1c1c;"></div>
<div class="t" style="left:3331px;top:2030px;font-size:20px;color:#bdbdbd;font-weight:normal;font-family:"Liberation Sans", sans-serif;">W</div>
</body></html>
